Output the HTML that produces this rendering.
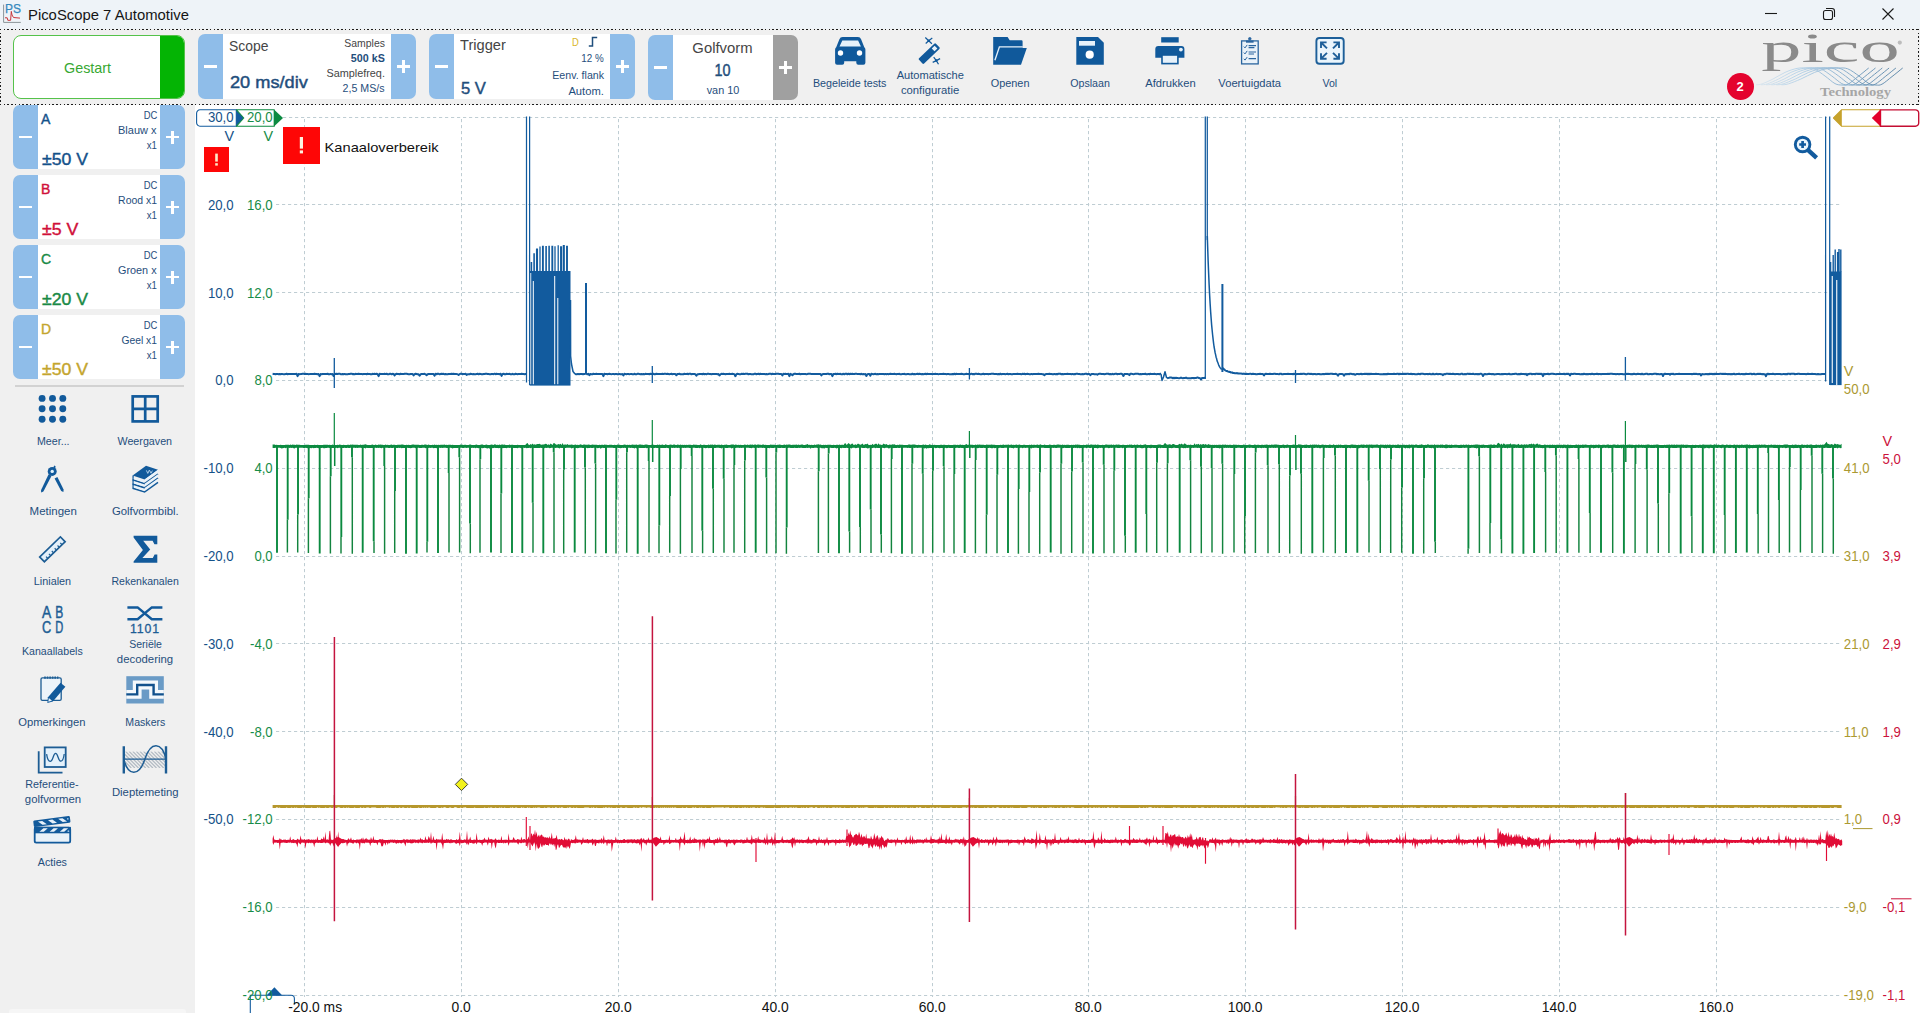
<!DOCTYPE html>
<html lang="nl"><head><meta charset="utf-8"><title>PicoScope 7 Automotive</title>
<style>
html,body{margin:0;padding:0}
body{width:1920px;height:1013px;position:relative;overflow:hidden;background:#fff;font-family:"Liberation Sans",sans-serif}
.t{position:absolute;white-space:nowrap;display:block}
#titlebar{position:absolute;left:0;top:0;width:1920px;height:29px;background:#eef3f8}
#toolbar{position:absolute;left:0;top:0;width:1920px;height:105px}
#tbbg{position:absolute;left:0;top:29px;width:1920px;height:76px;background:#f0f0f0}
#sidebar{position:absolute;left:0;top:105px;width:195px;height:908px;background:#f0f0f0}
.blk{position:absolute;background:#fff}
.pm{position:absolute}
.pm i{position:absolute;background:#fff;display:block}
.dot{position:absolute}
</style></head>
<body>
<div id="tbbg"></div>
<div id="titlebar">
<svg style="position:absolute;left:0;top:0" width="24" height="26" viewBox="0 0 24 26">
<path d="M3.6 4.6 V22.4 H20.8" fill="none" stroke="#8a9499" stroke-width="1"/>
<text x="5.1" y="13.4" font-family="Liberation Sans" font-size="12.6" fill="#3589bd" stroke="#3589bd" stroke-width="0.25" textLength="16" lengthAdjust="spacingAndGlyphs">PS</text>
<path d="M5 17.8 H7.2 L7.8 20.3 H10.6 L11.3 11.4 L12 15 L13.5 17.5 L20 18.1" fill="none" stroke="#c8353a" stroke-width="1" stroke-linejoin="round"/>
</svg>
<span class="t" style="left:27.60px;top:6px;font-size:15px;line-height:18px;color:#151515;transform:scaleX(0.9896);transform-origin:0 50%;">PicoScope 7 Automotive</span>
<svg style="position:absolute;left:1750px;top:0" width="170" height="29" viewBox="0 0 170 29" fill="none" stroke="#1a1a1a" stroke-width="1.1">
<path d="M15 13.5 H27"/>
<rect x="73.5" y="10.5" width="9" height="9" rx="2"/>
<path d="M76 8.5 H82 a2.5 2.5 0 0 1 2.5 2.5 V17"/>
<path d="M132.5 8.5 L143.5 19.5 M143.5 8.5 L132.5 19.5"/>
</svg>
</div>
<div id="toolbar">
<div style="position:absolute;left:12.5px;top:35px;width:172.5px;height:64px;box-sizing:border-box;border:1.5px solid #55c24a;border-radius:8px;background:#fff;overflow:hidden"><div style="position:absolute;left:146px;top:0;width:26px;height:64px;background:#04b404"></div></div>
<span class="t" style="left:63.70px;top:59px;font-size:15px;line-height:18px;color:#37a832;transform:scaleX(0.9577);transform-origin:0 50%;">Gestart</span>
<div class="blk" style="left:223px;top:34px;width:168px;height:65px"></div>
<div class="pm" style="left:198px;top:34px;width:25px;height:65px;background:#8fbde9;border-radius:7px 0 0 7px"><i style="left:6.0px;top:31.25px;width:13px;height:2.5px"></i></div>
<div class="pm" style="left:391px;top:34px;width:25px;height:65px;background:#8fbde9;border-radius:0 7px 7px 0"><i style="left:6.0px;top:31.25px;width:13px;height:2.5px"></i><i style="left:11.25px;top:26.0px;width:2.5px;height:13px"></i></div>
<span class="t" style="left:229.30px;top:37px;font-size:15px;line-height:18px;color:#454545;transform:scaleX(0.9264);transform-origin:0 50%;">Scope</span>
<span class="t" style="left:229.60px;top:73px;font-size:17px;line-height:20px;color:#1f4e7c;transform:scaleX(1.0694);transform-origin:0 50%;-webkit-text-stroke:0.45px #1f4e7c;">20 ms/div</span>
<span class="t" style="left:340.64px;top:36px;font-size:11.3px;line-height:14px;color:#454545;transform:scaleX(0.9235);transform-origin:100% 50%;">Samples</span>
<span class="t" style="left:348.79px;top:51px;font-size:11.3px;line-height:14px;color:#1f4e7c;font-weight:bold;transform:scaleX(0.9493);transform-origin:100% 50%;">500 kS</span>
<span class="t" style="left:323.68px;top:66px;font-size:11.3px;line-height:14px;color:#454545;transform:scaleX(0.9602);transform-origin:100% 50%;">Samplefreq.</span>
<span class="t" style="left:340.01px;top:81px;font-size:11.3px;line-height:14px;color:#1f4e7c;transform:scaleX(0.9420);transform-origin:100% 50%;">2,5 MS/s</span>
<div class="blk" style="left:454px;top:34px;width:156px;height:65px"></div>
<div class="pm" style="left:429px;top:34px;width:25px;height:65px;background:#8fbde9;border-radius:7px 0 0 7px"><i style="left:6.0px;top:31.25px;width:13px;height:2.5px"></i></div>
<div class="pm" style="left:610px;top:34px;width:25px;height:65px;background:#8fbde9;border-radius:0 7px 7px 0"><i style="left:6.0px;top:31.25px;width:13px;height:2.5px"></i><i style="left:11.25px;top:26.0px;width:2.5px;height:13px"></i></div>
<span class="t" style="left:460.10px;top:36px;font-size:15px;line-height:18px;color:#454545;transform:scaleX(0.9775);transform-origin:0 50%;">Trigger</span>
<span class="t" style="left:461.00px;top:79px;font-size:17px;line-height:20px;color:#1f4e7c;transform:scaleX(0.9758);transform-origin:0 50%;-webkit-text-stroke:0.45px #1f4e7c;">5 V</span>
<span class="t" style="left:571.50px;top:35px;font-size:11.3px;line-height:14px;color:#d9b62c;transform:scaleX(0.8333);transform-origin:0 50%;">D</span>
<svg style="position:absolute;left:586px;top:34px" width="14" height="15" viewBox="0 0 14 15"><path d="M2.8 12 H6.5 V3.6 H11.2" fill="none" stroke="#1f4e7c" stroke-width="1.5"/></svg>
<span class="t" style="left:577.54px;top:51px;font-size:11.3px;line-height:14px;color:#1f4e7c;transform:scaleX(0.8697);transform-origin:100% 50%;">12 %</span>
<span class="t" style="left:548.54px;top:68px;font-size:11.3px;line-height:14px;color:#1f4e7c;transform:scaleX(0.9407);transform-origin:100% 50%;">Eenv. flank</span>
<span class="t" style="left:567.60px;top:84px;font-size:11.3px;line-height:14px;color:#1f4e7c;transform:scaleX(0.9889);transform-origin:100% 50%;">Autom.</span>
<div class="blk" style="left:673px;top:35px;width:100px;height:65px"></div>
<div class="pm" style="left:648px;top:35px;width:25px;height:65px;background:#8fbde9;border-radius:7px 0 0 7px"><i style="left:6.0px;top:31.25px;width:13px;height:2.5px"></i></div>
<div class="pm" style="left:773px;top:35px;width:25px;height:65px;background:#a0a0a0;border-radius:0 7px 7px 0"><i style="left:6.0px;top:31.25px;width:13px;height:2.5px"></i><i style="left:11.25px;top:26.0px;width:2.5px;height:13px"></i></div>
<span class="t" style="left:691.73px;top:39px;font-size:15px;line-height:18px;color:#454545;transform:scaleX(0.9878);transform-origin:50% 50%;">Golfvorm</span>
<span class="t" style="left:713.15px;top:61px;font-size:17px;line-height:20px;color:#1f4e7c;transform:scaleX(0.8461);transform-origin:50% 50%;-webkit-text-stroke:0.45px #1f4e7c;">10</span>
<span class="t" style="left:705.64px;top:83px;font-size:11.3px;line-height:14px;color:#1f4e7c;transform:scaleX(0.9609);transform-origin:50% 50%;">van 10</span>
<span class="t" style="left:811.47px;top:76px;font-size:11.3px;line-height:14px;color:#1f4e7c;transform:scaleX(0.9512);transform-origin:50% 50%;">Begeleide tests</span>
<span class="t" style="left:895.62px;top:68px;font-size:11.3px;line-height:14px;color:#1f4e7c;transform:scaleX(0.9816);transform-origin:50% 50%;">Automatische</span>
<span class="t" style="left:900.89px;top:83px;font-size:11.3px;line-height:14px;color:#1f4e7c;">configuratie</span>
<span class="t" style="left:989.89px;top:76px;font-size:11.3px;line-height:14px;color:#1f4e7c;transform:scaleX(0.9649);transform-origin:50% 50%;">Openen</span>
<span class="t" style="left:1068.86px;top:76px;font-size:11.3px;line-height:14px;color:#1f4e7c;transform:scaleX(0.9445);transform-origin:50% 50%;">Opslaan</span>
<span class="t" style="left:1144.76px;top:76px;font-size:11.3px;line-height:14px;color:#1f4e7c;transform:scaleX(0.9906);transform-origin:50% 50%;">Afdrukken</span>
<span class="t" style="left:1218.37px;top:76px;font-size:11.3px;line-height:14px;color:#1f4e7c;transform:scaleX(0.9889);transform-origin:50% 50%;">Voertuigdata</span>
<span class="t" style="left:1322.25px;top:76px;font-size:11.3px;line-height:14px;color:#1f4e7c;transform:scaleX(0.9390);transform-origin:50% 50%;">Vol</span>
<svg style="position:absolute;left:0;top:0" width="1920" height="105" viewBox="0 0 1920 105">
<g fill="#10599b">
<path d="M842.6 37 H857.9 a3.4 3.4 0 0 1 3.2 2.2 L864.3 47.2 a3 3 0 0 1 1.1 2.3 V62.7 a2 2 0 0 1 -2 2 H858.3 a2 2 0 0 1 -2 -2 V61.3 H844.2 V62.7 a2 2 0 0 1 -2 2 H837.1 a2 2 0 0 1 -2 -2 V49.5 a3 3 0 0 1 1.1 -2.3 L839.4 39.2 a3.4 3.4 0 0 1 3.2 -2.2Z"/>
<path d="M842.3 40.4 H858.1 L860.9 46.4 H839.5Z" fill="#e6f1fa"/>
<circle cx="840.5" cy="53" r="2.7" fill="#fff"/><circle cx="859.5" cy="53" r="2.7" fill="#fff"/></g>
<g fill="#10599b"><g transform="translate(929.2 53.6) rotate(-43.5)"><rect x="-11.7" y="-3.7" width="23.4" height="7.4" rx="1.2"/><rect x="5.4" y="-2" width="4" height="4" fill="#e6f1fa"/></g>
<path d="M928.7 40.7 l-3.4 -3.2 M928.7 40.7 l3.6 -2.6 M928.7 40.7 l-3 2.8 M928.7 40.7 l3.2 3" stroke="#10599b" stroke-width="1.2" fill="none"/>
<path d="M936.3 60.6 l-2.6 -3.4 M936.3 60.6 l3.8 -2 M936.3 60.6 l-3.6 1.8 M936.3 60.6 l2.2 3.6" stroke="#10599b" stroke-width="1.2" fill="none"/>
<circle cx="928.7" cy="40.7" r="1.3"/><circle cx="936.3" cy="60.6" r="1.3"/></g>
<path d="M993.2 37 H1007.6 L1009.7 40.3 H1021.5 a1.1 1.1 0 0 1 1.1 1.1 V47.9 H1026.8 L1021 64.7 H993.2Z" fill="#10599b"/>
<path d="M994.9 60.2 L999.4 46.9 H1022.8" fill="none" stroke="#e6f1fa" stroke-width="1.35"/>
<path d="M1076.3 37 H1098 L1103.8 42.8 V64.7 H1076.3Z" fill="#10599b"/>
<rect x="1079" y="41" width="16" height="4.7" fill="#e6f1fa"/><circle cx="1089.7" cy="54.7" r="4.1" fill="#fff"/>
<rect x="1161.2" y="37.2" width="17.5" height="5.3" fill="#10599b"/>
<path d="M1158.3 46 H1181.4 a3 3 0 0 1 3 3 V57.8 H1155.3 V49 a3 3 0 0 1 3 -3Z" fill="#10599b"/>
<rect x="1162" y="55" width="15.9" height="8.6" fill="#e6f1fa" stroke="#10599b" stroke-width="1.6"/>
<circle cx="1180.9" cy="49.6" r="1.9" fill="#e6f1fa"/>
<g fill="none" stroke="#2a659f"><rect x="1241.6" y="40.9" width="16.6" height="23" stroke-width="1.3" fill="#eaf2f9"/>
<path d="M1246 41.6 H1253.6" stroke-width="2.2"/><circle cx="1249.8" cy="38.8" r="1.3" fill="#2a659f" stroke-width="0.8"/>
<path d="M1243.8 46.6 l1.2 1.3 l2.2 -3 M1243.8 52.6 l1.2 1.3 l2.2 -3 M1243.8 58.8 l1.2 1.3 l2.2 -3" stroke-width="1"/>
<path d="M1248.6 45.6 H1256 M1248.6 47.6 H1254.4 M1248.6 52 H1256 M1248.6 54 H1254 M1248.6 58.6 H1256" stroke-width="1.1"/></g>
<g fill="none" stroke="#1d5f99" stroke-width="1.9"><rect x="1316.4" y="38" width="27.3" height="25.7" rx="3" fill="#eaf5fc"/>
<path d="M1326.6 42.4 H1321 V48 M1321.6 43 L1327 48.4"/><path d="M1333.4 42.4 H1339 V48 M1338.4 43 L1333 48.4"/>
<path d="M1326.6 58.8 H1321 V53.2 M1321.6 58.2 L1327 52.8"/><path d="M1333.4 58.8 H1339 V53.2 M1338.4 58.2 L1333 52.8"/></g>
</svg>
<div style="position:absolute;left:1726.5px;top:72.5px;width:27px;height:27px;border-radius:50%;background:#e4032e"></div>
<span class="t" style="left:1736.38px;top:79px;font-size:13px;line-height:16px;color:#fff;font-weight:bold;">2</span>
<svg style="position:absolute;left:1750px;top:30px" width="168" height="74" viewBox="1750 30 168 74">
<defs><linearGradient id="wg" gradientUnits="userSpaceOnUse" x1="1756" x2="1904" y1="0" y2="0"><stop offset="0" stop-color="#c4dbec" stop-opacity="0.5"/><stop offset="0.3" stop-color="#b4d1e7"/><stop offset="0.58" stop-color="#8cb2d0"/><stop offset="0.75" stop-color="#6b96b8"/><stop offset="1" stop-color="#5a84a6"/></linearGradient></defs>
<g fill="none" stroke="url(#wg)" stroke-width="0.95"><path d="M1756.0 84.8 C1757.0 84.7 1759.2 84.9 1762.0 83.9 C1764.8 82.9 1769.2 80.9 1773.0 79.0 C1776.8 77.1 1781.0 74.2 1785.0 72.4 C1789.0 70.6 1793.5 69.1 1797.0 68.4 C1800.5 67.7 1803.2 67.9 1806.0 68.0 C1808.8 68.1 1810.8 67.5 1814.0 68.8 C1817.2 70.1 1821.5 73.5 1825.0 76.0 C1828.5 78.5 1832.2 82.1 1835.0 83.6 C1837.8 85.1 1839.8 84.9 1842.0 85.0 C1844.2 85.1 1845.3 85.6 1848.0 84.2 C1850.7 82.8 1854.5 79.3 1858.0 76.6 C1861.5 73.9 1866.9 69.4 1868.7 68.0"/><path d="M1761.1 84.8 C1762.1 84.7 1764.4 84.9 1767.3 83.9 C1770.2 82.9 1774.6 80.9 1778.6 79.0 C1782.5 77.1 1786.8 74.2 1790.9 72.4 C1795.0 70.6 1799.7 69.1 1803.3 68.4 C1806.9 67.7 1809.6 67.9 1812.5 68.0 C1815.4 68.1 1817.5 67.5 1820.7 68.8 C1824.0 70.1 1828.3 73.5 1831.8 76.0 C1835.3 78.5 1839.0 82.1 1841.8 83.6 C1844.6 85.1 1846.6 84.9 1848.8 85.0 C1851.0 85.1 1852.1 85.6 1854.8 84.2 C1857.5 82.8 1861.3 79.3 1864.8 76.6 C1868.2 73.9 1873.7 69.4 1875.5 68.0"/><path d="M1766.2 84.8 C1767.3 84.7 1769.5 84.9 1772.5 83.9 C1775.5 82.9 1780.1 80.9 1784.2 79.0 C1788.2 77.1 1792.6 74.2 1796.8 72.4 C1801.1 70.6 1805.8 69.1 1809.5 68.4 C1813.2 67.7 1816.0 67.9 1819.0 68.0 C1822.0 68.1 1824.2 67.5 1827.5 68.8 C1830.7 70.1 1835.1 73.5 1838.6 76.0 C1842.1 78.5 1845.8 82.1 1848.6 83.6 C1851.4 85.1 1853.4 84.9 1855.6 85.0 C1857.8 85.1 1858.9 85.6 1861.6 84.2 C1864.3 82.8 1868.1 79.3 1871.6 76.6 C1875.0 73.9 1880.5 69.4 1882.3 68.0"/><path d="M1771.3 84.8 C1772.4 84.7 1774.7 84.9 1777.8 83.9 C1780.9 82.9 1785.6 80.9 1789.7 79.0 C1793.9 77.1 1798.4 74.2 1802.8 72.4 C1807.1 70.6 1812.0 69.1 1815.8 68.4 C1819.6 67.7 1822.5 67.9 1825.5 68.0 C1828.6 68.1 1830.9 67.5 1834.2 68.8 C1837.5 70.1 1841.9 73.5 1845.4 76.0 C1848.9 78.5 1852.6 82.1 1855.4 83.6 C1858.2 85.1 1860.2 84.9 1862.4 85.0 C1864.6 85.1 1865.7 85.6 1868.4 84.2 C1871.1 82.8 1875.0 79.3 1878.4 76.6 C1881.9 73.9 1887.3 69.4 1889.1 68.0"/><path d="M1776.4 84.8 C1777.5 84.7 1779.9 84.9 1783.1 83.9 C1786.2 82.9 1791.1 80.9 1795.3 79.0 C1799.6 77.1 1804.2 74.2 1808.7 72.4 C1813.1 70.6 1818.2 69.1 1822.0 68.4 C1825.9 67.7 1828.9 67.9 1832.1 68.0 C1835.2 68.1 1837.6 67.5 1841.0 68.8 C1844.3 70.1 1848.7 73.5 1852.2 76.0 C1855.7 78.5 1859.4 82.1 1862.2 83.6 C1865.0 85.1 1867.0 84.9 1869.2 85.0 C1871.4 85.1 1872.5 85.6 1875.2 84.2 C1877.9 82.8 1881.8 79.3 1885.2 76.6 C1888.7 73.9 1894.1 69.4 1895.9 68.0"/><path d="M1781.5 84.8 C1782.6 84.7 1785.1 84.9 1788.3 83.9 C1791.6 82.9 1796.5 80.9 1800.9 79.0 C1805.3 77.1 1810.0 74.2 1814.6 72.4 C1819.2 70.6 1824.3 69.1 1828.3 68.4 C1832.3 67.7 1835.3 67.9 1838.6 68.0 C1841.8 68.1 1844.3 67.5 1847.7 68.8 C1851.1 70.1 1855.5 73.5 1859.0 76.0 C1862.5 78.5 1866.2 82.1 1869.0 83.6 C1871.8 85.1 1873.8 84.9 1876.0 85.0 C1878.2 85.1 1879.3 85.6 1882.0 84.2 C1884.7 82.8 1888.5 79.3 1892.0 76.6 C1895.5 73.9 1900.9 69.4 1902.7 68.0"/></g>
<text x="1761.2" y="62.4" font-family="Liberation Serif, serif" font-size="42" fill="#8a8a8a" textLength="138.5" lengthAdjust="spacingAndGlyphs">pıco</text>
<ellipse cx="1812.4" cy="36.5" rx="4.4" ry="2" fill="#8a8a8a"/>
<circle cx="1899.8" cy="42.6" r="2.1" fill="#bcbcbc"/>
<text x="1820" y="96" font-family="Liberation Serif, serif" font-weight="bold" font-size="11.5" fill="#a6a6a6" textLength="71" lengthAdjust="spacingAndGlyphs">Technology</text>
</svg>
</div>
<div id="sidebar"></div>
<div class="blk" style="left:38px;top:105px;width:122px;height:64px"></div>
<div class="pm" style="left:13px;top:105px;width:25px;height:64px;background:#8fbde9;border-radius:7px 0 0 7px"><i style="left:6.0px;top:30.75px;width:13px;height:2.5px"></i></div>
<div class="pm" style="left:160px;top:105px;width:25px;height:64px;background:#8fbde9;border-radius:0 7px 7px 0"><i style="left:6.0px;top:30.75px;width:13px;height:2.5px"></i><i style="left:11.25px;top:25.5px;width:2.5px;height:13px"></i></div>
<span class="t" style="left:40.90px;top:111px;font-size:14px;line-height:17px;color:#14518a;-webkit-text-stroke:0.4px #14518a;">A</span>
<span class="t" style="left:41.60px;top:150px;font-size:17px;line-height:20px;color:#14518a;transform:scaleX(1.0383);transform-origin:0 50%;-webkit-text-stroke:0.4px #14518a;">±50 V</span>
<span class="t" style="left:140.68px;top:108px;font-size:11.3px;line-height:14px;color:#1f4e7c;transform:scaleX(0.8333);transform-origin:100% 50%;">DC</span>
<div style="position:absolute;left:118px;top:123px;width:39.3px;height:15px;overflow:hidden"><span class="t" style="left:0.00px;top:0px;font-size:11.3px;line-height:14px;color:#1f4e7c;transform:scaleX(0.9727);transform-origin:0 50%;">Blauw x1</span></div>
<span class="t" style="left:145.07px;top:138px;font-size:11.3px;line-height:14px;color:#1f4e7c;transform:scaleX(0.8547);transform-origin:100% 50%;">x1</span>
<div class="blk" style="left:38px;top:175px;width:122px;height:64px"></div>
<div class="pm" style="left:13px;top:175px;width:25px;height:64px;background:#8fbde9;border-radius:7px 0 0 7px"><i style="left:6.0px;top:30.75px;width:13px;height:2.5px"></i></div>
<div class="pm" style="left:160px;top:175px;width:25px;height:64px;background:#8fbde9;border-radius:0 7px 7px 0"><i style="left:6.0px;top:30.75px;width:13px;height:2.5px"></i><i style="left:11.25px;top:25.5px;width:2.5px;height:13px"></i></div>
<span class="t" style="left:40.90px;top:181px;font-size:14px;line-height:17px;color:#d0103a;-webkit-text-stroke:0.4px #d0103a;">B</span>
<span class="t" style="left:41.60px;top:220px;font-size:17px;line-height:20px;color:#d0103a;transform:scaleX(1.0446);transform-origin:0 50%;-webkit-text-stroke:0.4px #d0103a;">±5 V</span>
<span class="t" style="left:140.68px;top:178px;font-size:11.3px;line-height:14px;color:#1f4e7c;transform:scaleX(0.8333);transform-origin:100% 50%;">DC</span>
<span class="t" style="left:114.91px;top:193px;font-size:11.3px;line-height:14px;color:#1f4e7c;transform:scaleX(0.9266);transform-origin:100% 50%;">Rood x1</span>
<span class="t" style="left:145.07px;top:208px;font-size:11.3px;line-height:14px;color:#1f4e7c;transform:scaleX(0.8547);transform-origin:100% 50%;">x1</span>
<div class="blk" style="left:38px;top:245px;width:122px;height:64px"></div>
<div class="pm" style="left:13px;top:245px;width:25px;height:64px;background:#8fbde9;border-radius:7px 0 0 7px"><i style="left:6.0px;top:30.75px;width:13px;height:2.5px"></i></div>
<div class="pm" style="left:160px;top:245px;width:25px;height:64px;background:#8fbde9;border-radius:0 7px 7px 0"><i style="left:6.0px;top:30.75px;width:13px;height:2.5px"></i><i style="left:11.25px;top:25.5px;width:2.5px;height:13px"></i></div>
<span class="t" style="left:40.90px;top:251px;font-size:14px;line-height:17px;color:#1a8a46;-webkit-text-stroke:0.4px #1a8a46;">C</span>
<span class="t" style="left:41.60px;top:290px;font-size:17px;line-height:20px;color:#1a8a46;transform:scaleX(1.0383);transform-origin:0 50%;-webkit-text-stroke:0.4px #1a8a46;">±20 V</span>
<span class="t" style="left:140.68px;top:248px;font-size:11.3px;line-height:14px;color:#1f4e7c;transform:scaleX(0.8333);transform-origin:100% 50%;">DC</span>
<div style="position:absolute;left:118px;top:263px;width:39.3px;height:15px;overflow:hidden"><span class="t" style="left:0.00px;top:0px;font-size:11.3px;line-height:14px;color:#1f4e7c;transform:scaleX(0.9596);transform-origin:0 50%;">Groen x1</span></div>
<span class="t" style="left:145.07px;top:278px;font-size:11.3px;line-height:14px;color:#1f4e7c;transform:scaleX(0.8547);transform-origin:100% 50%;">x1</span>
<div class="blk" style="left:38px;top:315px;width:122px;height:64px"></div>
<div class="pm" style="left:13px;top:315px;width:25px;height:64px;background:#8fbde9;border-radius:7px 0 0 7px"><i style="left:6.0px;top:30.75px;width:13px;height:2.5px"></i></div>
<div class="pm" style="left:160px;top:315px;width:25px;height:64px;background:#8fbde9;border-radius:0 7px 7px 0"><i style="left:6.0px;top:30.75px;width:13px;height:2.5px"></i><i style="left:11.25px;top:25.5px;width:2.5px;height:13px"></i></div>
<span class="t" style="left:40.90px;top:321px;font-size:14px;line-height:17px;color:#c4a52e;-webkit-text-stroke:0.4px #c4a52e;">D</span>
<span class="t" style="left:41.60px;top:360px;font-size:17px;line-height:20px;color:#c4a52e;transform:scaleX(1.0383);transform-origin:0 50%;-webkit-text-stroke:0.4px #c4a52e;">±50 V</span>
<span class="t" style="left:140.68px;top:318px;font-size:11.3px;line-height:14px;color:#1f4e7c;transform:scaleX(0.8333);transform-origin:100% 50%;">DC</span>
<span class="t" style="left:117.66px;top:333px;font-size:11.3px;line-height:14px;color:#1f4e7c;transform:scaleX(0.9116);transform-origin:100% 50%;">Geel x1</span>
<span class="t" style="left:145.07px;top:348px;font-size:11.3px;line-height:14px;color:#1f4e7c;transform:scaleX(0.8547);transform-origin:100% 50%;">x1</span>
<div style="position:absolute;left:15px;top:385px;width:169px;height:1.5px;background:#d2d2d2"></div>
<span class="t" style="left:35.63px;top:434px;font-size:11.3px;line-height:14px;color:#1f4e7c;transform:scaleX(0.9438);transform-origin:50% 50%;">Meer...</span>
<span class="t" style="left:116.41px;top:434px;font-size:11.3px;line-height:14px;color:#1f4e7c;transform:scaleX(0.9482);transform-origin:50% 50%;">Weergaven</span>
<span class="t" style="left:29.51px;top:504px;font-size:11.3px;line-height:14px;color:#1f4e7c;transform:scaleX(1.0175);transform-origin:50% 50%;">Metingen</span>
<span class="t" style="left:111.82px;top:504px;font-size:11.3px;line-height:14px;color:#1f4e7c;transform:scaleX(1.0036);transform-origin:50% 50%;">Golfvormbibl.</span>
<span class="t" style="left:32.97px;top:574px;font-size:11.3px;line-height:14px;color:#1f4e7c;transform:scaleX(0.9576);transform-origin:50% 50%;">Linialen</span>
<span class="t" style="left:109.23px;top:574px;font-size:11.3px;line-height:14px;color:#1f4e7c;transform:scaleX(0.9315);transform-origin:50% 50%;">Rekenkanalen</span>
<span class="t" style="left:20.40px;top:644px;font-size:11.3px;line-height:14px;color:#1f4e7c;transform:scaleX(0.9380);transform-origin:50% 50%;">Kanaallabels</span>
<span class="t" style="left:127.51px;top:637px;font-size:11.3px;line-height:14px;color:#1f4e7c;transform:scaleX(0.9325);transform-origin:50% 50%;">Seriële</span>
<span class="t" style="left:116.89px;top:652px;font-size:11.3px;line-height:14px;color:#1f4e7c;transform:scaleX(1.0069);transform-origin:50% 50%;">decodering</span>
<span class="t" style="left:18.38px;top:715px;font-size:11.3px;line-height:14px;color:#1f4e7c;transform:scaleX(0.9936);transform-origin:50% 50%;">Opmerkingen</span>
<span class="t" style="left:123.85px;top:715px;font-size:11.3px;line-height:14px;color:#1f4e7c;transform:scaleX(0.9369);transform-origin:50% 50%;">Maskers</span>
<span class="t" style="left:24.15px;top:777px;font-size:11.3px;line-height:14px;color:#1f4e7c;transform:scaleX(0.9517);transform-origin:50% 50%;">Referentie-</span>
<span class="t" style="left:24.70px;top:792px;font-size:11.3px;line-height:14px;color:#1f4e7c;transform:scaleX(1.0072);transform-origin:50% 50%;">golfvormen</span>
<span class="t" style="left:111.81px;top:785px;font-size:11.3px;line-height:14px;color:#1f4e7c;transform:scaleX(1.0033);transform-origin:50% 50%;">Dieptemeting</span>
<span class="t" style="left:37.26px;top:855px;font-size:11.3px;line-height:14px;color:#1f4e7c;transform:scaleX(0.9457);transform-origin:50% 50%;">Acties</span>
<div style="position:absolute;left:9px;top:1009px;width:177px;height:4px;border-radius:3px 3px 0 0;background:#f6f6f6"></div>
<svg style="position:absolute;left:0;top:385px" width="195" height="480" viewBox="0 385 195 480">
<g fill="#125a9b"><circle cx="42.1" cy="398.4" r="3.45"/><circle cx="52.5" cy="398.4" r="3.45"/><circle cx="62.8" cy="398.4" r="3.45"/><circle cx="42.1" cy="408.8" r="3.45"/><circle cx="52.5" cy="408.8" r="3.45"/><circle cx="62.8" cy="408.8" r="3.45"/><circle cx="42.1" cy="419.2" r="3.45"/><circle cx="52.5" cy="419.2" r="3.45"/><circle cx="62.8" cy="419.2" r="3.45"/></g>
<g fill="none" stroke="#125a9b" stroke-width="2.7"><rect x="132.7" y="396.4" width="25" height="25"/><path d="M145.2 396.4 V421.4 M132.7 408.9 H157.7"/></g>
<g fill="#125a9b"><circle cx="52.2" cy="471.4" r="4.5"/><circle cx="52.2" cy="471.4" r="1.7" fill="#dff1fc"/>
<path d="M53.4 467.6 L54.2 465.6 L55.6 466.2 L55.2 468.6Z"/>
<path d="M48.6 474.2 L51.6 475.8 L43.4 491.6 L41.2 492.4 L41 490.2Z"/>
<path d="M54.6 478.4 L57.4 477 L63.6 489.6 L63.4 492 L61.2 491Z"/></g>
<g><path d="M132.6 475.6 L146 465.8 L158 469.8 L144.6 479.4Z" fill="#125a9b"/>
<path d="M132.6 479.8 L144.6 483.6 L158 474 M132.6 484 L144.6 487.8 L158 478.2 M132.6 488.2 L144.6 492 L158 482.4" fill="none" stroke="#125a9b" stroke-width="1.5"/>
<path d="M133.1 475.6 V488.6" stroke="#125a9b" stroke-width="1.3"/>
<path d="M133.8 477.4 L144 480.6 V482.4 L133.8 479.2Z M133.8 481.6 L144 484.8 V486.6 L133.8 483.4Z M133.8 485.8 L144 489 V490.8 L133.8 487.6Z" fill="#e9f3fb"/>
<path d="M144.6 479.4 L158 469.8 V472.2 L144.6 481.8Z M144.6 483.8 L158 474.2 V476.4 L144.6 486Z M144.6 488 L158 478.4 V480.6 L144.6 490.2Z" fill="#e9f3fb"/>
<path d="M146.4 470.4 l1.4 3 l1.6 -3.4 l1.6 3.2 l1.4 -2.6" fill="none" stroke="#bcd8ee" stroke-width="0.9"/></g>
<g transform="translate(52.4 549.35) rotate(-44)"><rect x="-14.4" y="-3.4" width="28.8" height="6.8" fill="#e4f0fa" stroke="#1d5d94" stroke-width="1.7"/>
<path d="M-9.6 3.4 v-2.6 M-5.6 3.4 v-2.6 M-1.6 3.4 v-2.6 M2.4 3.4 v-2.6 M6.4 3.4 v-2.6 M10.2 3.4 v-2.6" stroke="#1d5d94" stroke-width="1.2"/></g>
<path d="M133.6 535.8 H157.3 V544.2 H154.4 L152.6 540.7 H143.2 L150.2 549.6 L142.4 558 H152.8 L154.6 554.6 H157.3 V562.8 H133.6 V561.5 L142.9 549.9 L133.6 537.4Z" fill="#125a9b"/>
<text x="42" y="617.5" textLength="9.2" font-family="Liberation Sans, sans-serif" font-size="15.6" fill="#1d5d94" stroke="#1d5d94" stroke-width="0.45" lengthAdjust="spacingAndGlyphs">A</text><text x="55.2" y="617.5" textLength="8" font-family="Liberation Sans, sans-serif" font-size="15.6" fill="#1d5d94" stroke="#1d5d94" stroke-width="0.45" lengthAdjust="spacingAndGlyphs">B</text><text x="42" y="632.5" textLength="9.2" font-family="Liberation Sans, sans-serif" font-size="15.6" fill="#1d5d94" stroke="#1d5d94" stroke-width="0.45" lengthAdjust="spacingAndGlyphs">C</text><text x="55.2" y="632.5" textLength="8" font-family="Liberation Sans, sans-serif" font-size="15.6" fill="#1d5d94" stroke="#1d5d94" stroke-width="0.45" lengthAdjust="spacingAndGlyphs">D</text>
<path d="M127.4 607.4 H137.6 L151.8 619.3 H162.4 M127.4 619.3 H137.6 L151.8 607.4 H162.4" fill="none" stroke="#125a9b" stroke-width="2.5"/>
<text x="130" y="632.8" font-family="Liberation Sans, sans-serif" font-size="12.3" fill="#1d5d94" stroke="#1d5d94" stroke-width="0.3" textLength="29.2" lengthAdjust="spacing">1101</text>
<g><rect x="41" y="677.9" width="20.2" height="22.4" rx="1.4" fill="#edf4fa" stroke="#1d5d94" stroke-width="1.3"/>
<path d="M44.2 677.6 H58.4" stroke="#1d5d94" stroke-width="2.2" stroke-dasharray="1.6 0.95"/>
<g transform="translate(47.3 703) rotate(-49.4)"><path d="M0 0 L4.8 -3.2 H24 V3.2 H4.8Z" fill="#125a9b"/><path d="M1.6 0 L4.8 -2.1 V2.1Z" fill="#e6f1fa"/></g></g>
<g><rect x="126.3" y="676.2" width="37.5" height="27.3" fill="#6a9bc6"/>
<path d="M126.3 694.4 H137.2 V685 H153.6 V694.4 H163.8" fill="none" stroke="#f3f8fc" stroke-width="8.8"/>
<path d="M126.3 694.4 H137.2 V685 H153.6 V694.4 H163.8" fill="none" stroke="#10508c" stroke-width="2.4"/></g>
<g fill="none" stroke="#1d5d94"><path d="M38.7 751.3 V772.7 H62.5" stroke-width="1.8"/><rect x="44.7" y="747.4" width="21" height="19.6" fill="#e4f1fb" stroke-width="1.8"/>
<path d="M46.6 754.2 C47.4 759.5 48.6 761.4 50.2 761.4 C53 761.4 53.2 753.4 55.6 753.4 C58 753.4 58.2 761.2 60.8 761.2 C62.6 761.2 63.6 758.6 64.2 754" stroke-width="1.3"/></g>
<g fill="none"><clipPath id="hc"><rect x="125" y="751.4" width="40" height="16.6"/></clipPath>
<path d="M107.5 751.4 l16.6 16.6 M111.1 751.4 l16.6 16.6 M114.7 751.4 l16.6 16.6 M118.3 751.4 l16.6 16.6 M121.9 751.4 l16.6 16.6 M125.5 751.4 l16.6 16.6 M129.1 751.4 l16.6 16.6 M132.7 751.4 l16.6 16.6 M136.3 751.4 l16.6 16.6 M139.9 751.4 l16.6 16.6 M143.5 751.4 l16.6 16.6 M147.1 751.4 l16.6 16.6 M150.7 751.4 l16.6 16.6 M154.3 751.4 l16.6 16.6 M157.9 751.4 l16.6 16.6 M161.5 751.4 l16.6 16.6 M165.1 751.4 l16.6 16.6" stroke="#b4bcc4" stroke-width="1.3" clip-path="url(#hc)"/>
<path d="M123.8 746.2 V773.6 M166 746.2 V773.6" stroke="#1d5d94" stroke-width="2.4"/><path d="M123.8 759.1 H166" stroke="#1d5d94" stroke-width="1.3"/>
<path d="M123.8 759.1 C128 776.5 139 777 144.9 759.1 C150.8 741.2 161.8 741.7 166 759.1" stroke="#1d5d94" stroke-width="1.5"/></g>
<g><g transform="rotate(-7.3 34 827.4)"><rect x="34" y="820.6" width="36.9" height="6.6" rx="1.2" fill="#125a9b"/>
<path d="M38.6 822 l4.4 0 l4.2 3.8 l-4.4 0Z M48.8 822 l4.4 0 l4.2 3.8 l-4.4 0Z M59 822 l4.4 0 l4.2 3.8 l-4.4 0Z" fill="#e6f1fa"/><circle cx="68.6" cy="823.2" r="0.9" fill="#9cc3e4"/></g>
<rect x="34.7" y="827.6" width="35.5" height="15" rx="1.6" fill="#e9f2f9" stroke="#125a9b" stroke-width="1.8"/>
<rect x="34" y="826.9" width="36.9" height="6.4" fill="#125a9b"/>
<path d="M39.4 831.8 l4.4 0 l4 -3.6 l-4.4 0Z M49.6 831.8 l4.4 0 l4 -3.6 l-4.4 0Z M59.8 831.8 l4.4 0 l4 -3.6 l-4.4 0Z" fill="#e6f1fa"/><circle cx="68.4" cy="831.2" r="0.9" fill="#9cc3e4"/></g>
</svg>
<svg id="chart" style="position:absolute;left:0;top:0" width="1920" height="1013" viewBox="0 0 1920 1013">
<defs><clipPath id="cp"><rect x="195" y="116.6" width="1725" height="900"/></clipPath></defs>
<g stroke="#bfcdd3" stroke-width="1" stroke-dasharray="3.2 2.8" fill="none">
<path d="M283 117.50 H1827"/>
<path d="M276 204.50 H1842"/>
<path d="M276 292.50 H1842"/>
<path d="M276 380.50 H1842"/>
<path d="M276 468.50 H1842"/>
<path d="M276 556.50 H1842"/>
<path d="M276 643.50 H1842"/>
<path d="M276 731.50 H1842"/>
<path d="M276 819.50 H1842"/>
<path d="M276 907.50 H1842"/>
<path d="M276 995.50 H1842"/>
<path d="M304.5 119 V997"/>
<path d="M461.5 119 V997"/>
<path d="M618.5 119 V997"/>
<path d="M775.5 119 V997"/>
<path d="M932.5 119 V997"/>
<path d="M1088.5 119 V997"/>
<path d="M1245.5 119 V997"/>
<path d="M1402.5 119 V997"/>
<path d="M1559.5 119 V997"/>
<path d="M1716.5 119 V997"/>
</g>
<g clip-path="url(#cp)">
<path d="M272.6 804.9 L273.6 804.9 L274.6 804.9 L275.6 805 L276.6 805 L277.6 804.9 L278.6 805 L279.6 804.9 L280.6 804.9 L281.6 805.1 L282.6 805 L283.6 804.9 L284.6 805.1 L285.6 805 L286.6 805.1 L287.6 805 L288.6 805.1 L289.6 804.9 L290.6 804.9 L291.6 805.1 L292.6 805.1 L293.6 805 L294.6 805.1 L295.6 805 L296.6 805 L297.6 804.9 L298.6 804.9 L299.6 804.9 L300.6 804.9 L301.6 805.1 L302.6 805 L303.6 805.1 L304.6 805 L305.6 804.9 L306.6 804.9 L307.6 804.9 L308.6 805 L309.6 805.1 L310.6 805.1 L311.6 805.1 L312.6 805 L313.6 805 L314.6 804.9 L315.6 804.9 L316.6 804.9 L317.6 805.1 L318.6 804.9 L319.6 804.9 L320.6 805 L321.6 804.9 L322.6 805.1 L323.6 805.1 L324.6 805 L325.6 805.1 L326.6 804.9 L327.6 805.1 L328.6 804.9 L329.6 805.1 L330.6 805.1 L331.6 805 L332.6 804.9 L333.6 805.1 L334.6 805.1 L335.6 805 L336.6 804.9 L337.6 805.1 L338.6 805 L339.6 805 L340.6 805.1 L341.6 805.1 L342.6 805.1 L343.6 805.1 L344.6 804.9 L345.6 805.1 L346.6 805.1 L347.6 805 L348.6 805.1 L349.6 805.1 L350.6 805.1 L351.6 804.9 L352.6 804.9 L353.6 805.1 L354.6 805 L355.6 805.1 L356.6 805 L357.6 804.9 L358.6 804.9 L359.6 805 L360.6 805 L361.6 805 L362.6 805.1 L363.6 805.1 L364.6 805 L365.6 805.1 L366.6 805 L367.6 805.1 L368.6 805 L369.6 804.9 L370.6 804.9 L371.6 805.1 L372.6 804.9 L373.6 804.9 L374.6 804.9 L375.6 805 L376.6 804.9 L377.6 805 L378.6 805.1 L379.6 805 L380.6 805 L381.6 805.1 L382.6 804.9 L383.6 805.1 L384.6 805 L385.6 804.9 L386.6 805 L387.6 804.9 L388.6 804.9 L389.6 805.1 L390.6 804.9 L391.6 805 L392.6 804.9 L393.6 804.9 L394.6 804.9 L395.6 804.9 L396.6 805 L397.6 804.9 L398.6 805.1 L399.6 805 L400.6 805.1 L401.6 805.1 L402.6 805.1 L403.6 805.1 L404.6 805 L405.6 804.9 L406.6 804.9 L407.6 805.1 L408.6 804.9 L409.6 805 L410.6 804.9 L411.6 805 L412.6 804.9 L413.6 805 L414.6 804.9 L415.6 804.9 L416.6 804.9 L417.6 804.9 L418.6 805.1 L419.6 805.1 L420.6 805.1 L421.6 805 L422.6 805.1 L423.6 805.1 L424.6 805 L425.6 805.1 L426.6 805.1 L427.6 804.9 L428.6 804.9 L429.6 805 L430.6 805 L431.6 805.1 L432.6 805 L433.6 804.9 L434.6 805.1 L435.6 805.1 L436.6 805 L437.6 805 L438.6 804.9 L439.6 804.9 L440.6 804.9 L441.6 805.1 L442.6 805 L443.6 804.9 L444.6 805.1 L445.6 805 L446.6 805 L447.6 805.1 L448.6 804.9 L449.6 804.9 L450.6 805.1 L451.6 805.1 L452.6 804.9 L453.6 804.9 L454.6 804.9 L455.6 805.1 L456.6 805.1 L457.6 804.9 L458.6 805.1 L459.6 805 L460.6 804.9 L461.6 805.1 L462.6 805 L463.6 805.1 L464.6 805 L465.6 805 L466.6 805.1 L467.6 805 L468.6 805.1 L469.6 805 L470.6 805.1 L471.6 804.9 L472.6 804.9 L473.6 805.1 L474.6 805.1 L475.6 804.9 L476.6 805 L477.6 804.9 L478.6 805.1 L479.6 805 L480.6 804.9 L481.6 804.9 L482.6 805.1 L483.6 804.9 L484.6 805.1 L485.6 804.9 L486.6 805.1 L487.6 804.9 L488.6 805.1 L489.6 804.9 L490.6 805 L491.6 805.1 L492.6 805 L493.6 805.1 L494.6 805 L495.6 804.9 L496.6 804.9 L497.6 805 L498.6 805 L499.6 805 L500.6 805.1 L501.6 804.9 L502.6 804.9 L503.6 805.1 L504.6 805.1 L505.6 804.9 L506.6 805.1 L507.6 805.1 L508.6 805.1 L509.6 804.9 L510.6 804.9 L511.6 804.9 L512.6 805 L513.6 805 L514.6 804.9 L515.6 805 L516.6 805.1 L517.6 804.9 L518.6 805.1 L519.6 805 L520.6 804.9 L521.6 805 L522.6 805.1 L523.6 805.1 L524.6 804.9 L525.6 805.1 L526.6 805.1 L527.6 805.1 L528.6 804.9 L529.6 804.9 L530.6 805 L531.6 805 L532.6 804.9 L533.6 805.1 L534.6 805.1 L535.6 805 L536.6 805 L537.6 805 L538.6 805.1 L539.6 805.1 L540.6 804.9 L541.6 804.9 L542.6 804.9 L543.6 805 L544.6 805.1 L545.6 804.9 L546.6 805.1 L547.6 805 L548.6 805.1 L549.6 804.9 L550.6 805 L551.6 804.9 L552.6 804.9 L553.6 804.9 L554.6 805 L555.6 805 L556.6 805 L557.6 805.1 L558.6 804.9 L559.6 805 L560.6 805.1 L561.6 805.1 L562.6 805 L563.6 805 L564.6 804.9 L565.6 804.9 L566.6 805.1 L567.6 804.9 L568.6 804.9 L569.6 805 L570.6 804.9 L571.6 804.9 L572.6 804.9 L573.6 805 L574.6 805 L575.6 804.9 L576.6 805 L577.6 805.1 L578.6 804.9 L579.6 805.1 L580.6 805 L581.6 804.9 L582.6 804.9 L583.6 805.1 L584.6 805.1 L585.6 804.9 L586.6 805.1 L587.6 804.9 L588.6 805 L589.6 804.9 L590.6 805 L591.6 804.9 L592.6 804.9 L593.6 804.9 L594.6 805 L595.6 804.9 L596.6 805 L597.6 805 L598.6 805 L599.6 805.1 L600.6 805 L601.6 805 L602.6 805 L603.6 804.9 L604.6 805 L605.6 805 L606.6 805.1 L607.6 805.1 L608.6 805 L609.6 804.9 L610.6 804.9 L611.6 804.9 L612.6 805.1 L613.6 805.1 L614.6 805 L615.6 804.9 L616.6 805.1 L617.6 805.1 L618.6 805 L619.6 805 L620.6 804.9 L621.6 805 L622.6 805.1 L623.6 805.1 L624.6 805.1 L625.6 804.9 L626.6 805 L627.6 804.9 L628.6 805 L629.6 805.1 L630.6 805 L631.6 805 L632.6 804.9 L633.6 804.9 L634.6 804.9 L635.6 804.9 L636.6 805.1 L637.6 804.9 L638.6 805 L639.6 805 L640.6 804.9 L641.6 805 L642.6 804.9 L643.6 805 L644.6 804.9 L645.6 805 L646.6 804.9 L647.6 805.1 L648.6 804.9 L649.6 805 L650.6 804.9 L651.6 804.9 L652.6 805.1 L653.6 804.9 L654.6 805.1 L655.6 805 L656.6 805.1 L657.6 804.9 L658.6 805.1 L659.6 804.9 L660.6 805 L661.6 805.1 L662.6 805.1 L663.6 805.1 L664.6 804.9 L665.6 805.1 L666.6 804.9 L667.6 804.9 L668.6 805.1 L669.6 805.1 L670.6 805 L671.6 805.1 L672.6 805.1 L673.6 804.9 L674.6 805.1 L675.6 805.1 L676.6 804.9 L677.6 804.9 L678.6 804.9 L679.6 805.1 L680.6 805.1 L681.6 805 L682.6 805 L683.6 805.1 L684.6 805.1 L685.6 804.9 L686.6 805.1 L687.6 805 L688.6 804.9 L689.6 805.1 L690.6 804.9 L691.6 805 L692.6 804.9 L693.6 805.1 L694.6 805 L695.6 804.9 L696.6 804.9 L697.6 805 L698.6 804.9 L699.6 805.1 L700.6 805 L701.6 805.1 L702.6 804.9 L703.6 805 L704.6 805.1 L705.6 804.9 L706.6 804.9 L707.6 804.9 L708.6 804.9 L709.6 805.1 L710.6 804.9 L711.6 805.1 L712.6 804.9 L713.6 804.9 L714.6 805 L715.6 805 L716.6 804.9 L717.6 805.1 L718.6 805 L719.6 804.9 L720.6 805.1 L721.6 805.1 L722.6 804.9 L723.6 805 L724.6 805 L725.6 805 L726.6 805.1 L727.6 805 L728.6 805 L729.6 805 L730.6 805.1 L731.6 805 L732.6 805 L733.6 805 L734.6 804.9 L735.6 805.1 L736.6 805 L737.6 805 L738.6 805 L739.6 804.9 L740.6 805.1 L741.6 805.1 L742.6 804.9 L743.6 805 L744.6 804.9 L745.6 805 L746.6 805 L747.6 804.9 L748.6 805.1 L749.6 804.9 L750.6 804.9 L751.6 804.9 L752.6 805 L753.6 805 L754.6 804.9 L755.6 805.1 L756.6 805 L757.6 805.1 L758.6 804.9 L759.6 805.1 L760.6 805.1 L761.6 805.1 L762.6 805.1 L763.6 805.1 L764.6 805 L765.6 805.1 L766.6 804.9 L767.6 804.9 L768.6 805 L769.6 805.1 L770.6 805 L771.6 805.1 L772.6 805.1 L773.6 805 L774.6 805.1 L775.6 805.1 L776.6 805.1 L777.6 805 L778.6 805 L779.6 805.1 L780.6 805 L781.6 804.9 L782.6 805 L783.6 805.1 L784.6 804.9 L785.6 805 L786.6 804.9 L787.6 805 L788.6 804.9 L789.6 805 L790.6 805.1 L791.6 805 L792.6 805.1 L793.6 805 L794.6 804.9 L795.6 805.1 L796.6 805.1 L797.6 804.9 L798.6 804.9 L799.6 805.1 L800.6 804.9 L801.6 805 L802.6 804.9 L803.6 805.1 L804.6 805 L805.6 804.9 L806.6 804.9 L807.6 805.1 L808.6 804.9 L809.6 804.9 L810.6 804.9 L811.6 805.1 L812.6 805 L813.6 805.1 L814.6 805.1 L815.6 805 L816.6 804.9 L817.6 805.1 L818.6 805 L819.6 805.1 L820.6 805 L821.6 805 L822.6 805.1 L823.6 804.9 L824.6 805.1 L825.6 805 L826.6 805 L827.6 805.1 L828.6 805 L829.6 804.9 L830.6 805 L831.6 805.1 L832.6 805.1 L833.6 804.9 L834.6 805.1 L835.6 804.9 L836.6 804.9 L837.6 804.9 L838.6 805 L839.6 805.1 L840.6 804.9 L841.6 804.9 L842.6 805.1 L843.6 805 L844.6 804.9 L845.6 805 L846.6 804.9 L847.6 805 L848.6 805.1 L849.6 805 L850.6 804.9 L851.6 805 L852.6 805.1 L853.6 805.1 L854.6 804.9 L855.6 804.9 L856.6 805 L857.6 805.1 L858.6 805 L859.6 805.1 L860.6 805 L861.6 805 L862.6 805.1 L863.6 804.9 L864.6 805.1 L865.6 804.9 L866.6 805 L867.6 804.9 L868.6 805.1 L869.6 805.1 L870.6 804.9 L871.6 804.9 L872.6 805.1 L873.6 804.9 L874.6 804.9 L875.6 805.1 L876.6 804.9 L877.6 805 L878.6 805.1 L879.6 804.9 L880.6 805.1 L881.6 805.1 L882.6 804.9 L883.6 805 L884.6 804.9 L885.6 805.1 L886.6 805.1 L887.6 804.9 L888.6 805 L889.6 805.1 L890.6 805.1 L891.6 804.9 L892.6 805.1 L893.6 804.9 L894.6 804.9 L895.6 804.9 L896.6 804.9 L897.6 804.9 L898.6 805 L899.6 804.9 L900.6 805.1 L901.6 804.9 L902.6 805.1 L903.6 805 L904.6 805 L905.6 805 L906.6 804.9 L907.6 804.9 L908.6 804.9 L909.6 805 L910.6 805.1 L911.6 805.1 L912.6 804.9 L913.6 805 L914.6 805 L915.6 804.9 L916.6 804.9 L917.6 804.9 L918.6 804.9 L919.6 805 L920.6 805.1 L921.6 804.9 L922.6 804.9 L923.6 804.9 L924.6 804.9 L925.6 804.9 L926.6 805 L927.6 805 L928.6 805.1 L929.6 805 L930.6 805.1 L931.6 805.1 L932.6 805.1 L933.6 805 L934.6 805 L935.6 805 L936.6 805.1 L937.6 805 L938.6 805.1 L939.6 804.9 L940.6 805 L941.6 804.9 L942.6 805.1 L943.6 805 L944.6 805.1 L945.6 805 L946.6 804.9 L947.6 805 L948.6 804.9 L949.6 805 L950.6 804.9 L951.6 805 L952.6 804.9 L953.6 805 L954.6 804.9 L955.6 804.9 L956.6 804.9 L957.6 805.1 L958.6 805.1 L959.6 805 L960.6 804.9 L961.6 805.1 L962.6 805 L963.6 805.1 L964.6 805.1 L965.6 805 L966.6 805.1 L967.6 804.9 L968.6 805 L969.6 805 L970.6 805 L971.6 805 L972.6 805 L973.6 804.9 L974.6 805 L975.6 804.9 L976.6 805 L977.6 804.9 L978.6 805.1 L979.6 805.1 L980.6 805 L981.6 805.1 L982.6 805 L983.6 805 L984.6 805 L985.6 805 L986.6 805 L987.6 805.1 L988.6 805 L989.6 805 L990.6 804.9 L991.6 805.1 L992.6 805.1 L993.6 805.1 L994.6 804.9 L995.6 805 L996.6 805 L997.6 805.1 L998.6 805 L999.6 805.1 L1000.6 805.1 L1001.6 804.9 L1002.6 804.9 L1003.6 805.1 L1004.6 804.9 L1005.6 804.9 L1006.6 805 L1007.6 805.1 L1008.6 805.1 L1009.6 805 L1010.6 804.9 L1011.6 805 L1012.6 804.9 L1013.6 805.1 L1014.6 804.9 L1015.6 805.1 L1016.6 805.1 L1017.6 805.1 L1018.6 804.9 L1019.6 804.9 L1020.6 805 L1021.6 804.9 L1022.6 805.1 L1023.6 804.9 L1024.6 805 L1025.6 805.1 L1026.6 804.9 L1027.6 804.9 L1028.6 804.9 L1029.6 804.9 L1030.6 805 L1031.6 804.9 L1032.6 805 L1033.6 805.1 L1034.6 805 L1035.6 804.9 L1036.6 805 L1037.6 804.9 L1038.6 805 L1039.6 805.1 L1040.6 805 L1041.6 804.9 L1042.6 804.9 L1043.6 805 L1044.6 804.9 L1045.6 804.9 L1046.6 804.9 L1047.6 805.1 L1048.6 804.9 L1049.6 805.1 L1050.6 805 L1051.6 804.9 L1052.6 805 L1053.6 805.1 L1054.6 804.9 L1055.6 804.9 L1056.6 804.9 L1057.6 804.9 L1058.6 805.1 L1059.6 805.1 L1060.6 805.1 L1061.6 804.9 L1062.6 804.9 L1063.6 805.1 L1064.6 805.1 L1065.6 805 L1066.6 804.9 L1067.6 805 L1068.6 805.1 L1069.6 805 L1070.6 805 L1071.6 804.9 L1072.6 805.1 L1073.6 805 L1074.6 805 L1075.6 805 L1076.6 804.9 L1077.6 805.1 L1078.6 805 L1079.6 805 L1080.6 804.9 L1081.6 805.1 L1082.6 804.9 L1083.6 805 L1084.6 804.9 L1085.6 804.9 L1086.6 804.9 L1087.6 804.9 L1088.6 805 L1089.6 804.9 L1090.6 804.9 L1091.6 805 L1092.6 805 L1093.6 804.9 L1094.6 805 L1095.6 804.9 L1096.6 804.9 L1097.6 804.9 L1098.6 805.1 L1099.6 805.1 L1100.6 804.9 L1101.6 804.9 L1102.6 805 L1103.6 804.9 L1104.6 805.1 L1105.6 805.1 L1106.6 804.9 L1107.6 804.9 L1108.6 805 L1109.6 804.9 L1110.6 805.1 L1111.6 805.1 L1112.6 804.9 L1113.6 805 L1114.6 805 L1115.6 804.9 L1116.6 805 L1117.6 804.9 L1118.6 805.1 L1119.6 805.1 L1120.6 805.1 L1121.6 805 L1122.6 805.1 L1123.6 804.9 L1124.6 804.9 L1125.6 805 L1126.6 805 L1127.6 805 L1128.6 804.9 L1129.6 805 L1130.6 804.9 L1131.6 804.9 L1132.6 804.9 L1133.6 805 L1134.6 805 L1135.6 805.1 L1136.6 805.1 L1137.6 805.1 L1138.6 805 L1139.6 805 L1140.6 805.1 L1141.6 805 L1142.6 804.9 L1143.6 805 L1144.6 805.1 L1145.6 805.1 L1146.6 805 L1147.6 805.1 L1148.6 805.1 L1149.6 804.9 L1150.6 805 L1151.6 805.1 L1152.6 804.9 L1153.6 805 L1154.6 804.9 L1155.6 805 L1156.6 805 L1157.6 805 L1158.6 805.1 L1159.6 804.9 L1160.6 805.1 L1161.6 805.1 L1162.6 805 L1163.6 805 L1164.6 804.9 L1165.6 805.1 L1166.6 804.9 L1167.6 805 L1168.6 804.9 L1169.6 804.9 L1170.6 804.9 L1171.6 804.9 L1172.6 804.9 L1173.6 805.1 L1174.6 805 L1175.6 805.1 L1176.6 805 L1177.6 805.1 L1178.6 804.9 L1179.6 805 L1180.6 805 L1181.6 805 L1182.6 805 L1183.6 804.9 L1184.6 804.9 L1185.6 805 L1186.6 804.9 L1187.6 804.9 L1188.6 805.1 L1189.6 805 L1190.6 805 L1191.6 805.1 L1192.6 804.9 L1193.6 804.9 L1194.6 804.9 L1195.6 804.9 L1196.6 805 L1197.6 804.9 L1198.6 805 L1199.6 805.1 L1200.6 804.9 L1201.6 805 L1202.6 804.9 L1203.6 805 L1204.6 804.9 L1205.6 805 L1206.6 805 L1207.6 804.9 L1208.6 805.1 L1209.6 805.1 L1210.6 804.9 L1211.6 804.9 L1212.6 805 L1213.6 805 L1214.6 805.1 L1215.6 805.1 L1216.6 805.1 L1217.6 804.9 L1218.6 804.9 L1219.6 805 L1220.6 805.1 L1221.6 804.9 L1222.6 804.9 L1223.6 804.9 L1224.6 804.9 L1225.6 805.1 L1226.6 805.1 L1227.6 805 L1228.6 805.1 L1229.6 805.1 L1230.6 804.9 L1231.6 805.1 L1232.6 805 L1233.6 805 L1234.6 804.9 L1235.6 804.9 L1236.6 804.9 L1237.6 805 L1238.6 805.1 L1239.6 805.1 L1240.6 805 L1241.6 805.1 L1242.6 805 L1243.6 805.1 L1244.6 805.1 L1245.6 805.1 L1246.6 804.9 L1247.6 805.1 L1248.6 804.9 L1249.6 804.9 L1250.6 805.1 L1251.6 804.9 L1252.6 805.1 L1253.6 804.9 L1254.6 804.9 L1255.6 805.1 L1256.6 804.9 L1257.6 805.1 L1258.6 805 L1259.6 805 L1260.6 804.9 L1261.6 805.1 L1262.6 804.9 L1263.6 805 L1264.6 805 L1265.6 805 L1266.6 805.1 L1267.6 805.1 L1268.6 805 L1269.6 805 L1270.6 805.1 L1271.6 805.1 L1272.6 805 L1273.6 804.9 L1274.6 805.1 L1275.6 804.9 L1276.6 804.9 L1277.6 805.1 L1278.6 805 L1279.6 805 L1280.6 805.1 L1281.6 805 L1282.6 805 L1283.6 805 L1284.6 805 L1285.6 805 L1286.6 805.1 L1287.6 805 L1288.6 804.9 L1289.6 805 L1290.6 805.1 L1291.6 805.1 L1292.6 804.9 L1293.6 805 L1294.6 805 L1295.6 805.1 L1296.6 805 L1297.6 804.9 L1298.6 805 L1299.6 805 L1300.6 804.9 L1301.6 804.9 L1302.6 804.9 L1303.6 804.9 L1304.6 804.9 L1305.6 805 L1306.6 805 L1307.6 804.9 L1308.6 805.1 L1309.6 805 L1310.6 805.1 L1311.6 805 L1312.6 805.1 L1313.6 805 L1314.6 804.9 L1315.6 805 L1316.6 805 L1317.6 805 L1318.6 805.1 L1319.6 804.9 L1320.6 805.1 L1321.6 804.9 L1322.6 804.9 L1323.6 805 L1324.6 805.1 L1325.6 805.1 L1326.6 805.1 L1327.6 804.9 L1328.6 804.9 L1329.6 804.9 L1330.6 805.1 L1331.6 805 L1332.6 805.1 L1333.6 804.9 L1334.6 805 L1335.6 805 L1336.6 805.1 L1337.6 805 L1338.6 805 L1339.6 804.9 L1340.6 804.9 L1341.6 805 L1342.6 805 L1343.6 805 L1344.6 805.1 L1345.6 804.9 L1346.6 805.1 L1347.6 805.1 L1348.6 805.1 L1349.6 804.9 L1350.6 805.1 L1351.6 805 L1352.6 805.1 L1353.6 805.1 L1354.6 804.9 L1355.6 804.9 L1356.6 805.1 L1357.6 804.9 L1358.6 805 L1359.6 805 L1360.6 804.9 L1361.6 805 L1362.6 805.1 L1363.6 805.1 L1364.6 804.9 L1365.6 805 L1366.6 805 L1367.6 805 L1368.6 804.9 L1369.6 804.9 L1370.6 805 L1371.6 805.1 L1372.6 804.9 L1373.6 805.1 L1374.6 804.9 L1375.6 804.9 L1376.6 805 L1377.6 805 L1378.6 804.9 L1379.6 805 L1380.6 804.9 L1381.6 805.1 L1382.6 804.9 L1383.6 804.9 L1384.6 804.9 L1385.6 805 L1386.6 804.9 L1387.6 804.9 L1388.6 805 L1389.6 805.1 L1390.6 805 L1391.6 805.1 L1392.6 804.9 L1393.6 804.9 L1394.6 805 L1395.6 805.1 L1396.6 804.9 L1397.6 804.9 L1398.6 805.1 L1399.6 805 L1400.6 805.1 L1401.6 804.9 L1402.6 805.1 L1403.6 804.9 L1404.6 804.9 L1405.6 805.1 L1406.6 805.1 L1407.6 805 L1408.6 805.1 L1409.6 805.1 L1410.6 805.1 L1411.6 804.9 L1412.6 805.1 L1413.6 805.1 L1414.6 805.1 L1415.6 804.9 L1416.6 805.1 L1417.6 805.1 L1418.6 804.9 L1419.6 804.9 L1420.6 805.1 L1421.6 805.1 L1422.6 805.1 L1423.6 804.9 L1424.6 805 L1425.6 805.1 L1426.6 804.9 L1427.6 805 L1428.6 805 L1429.6 805.1 L1430.6 804.9 L1431.6 805 L1432.6 804.9 L1433.6 805.1 L1434.6 805.1 L1435.6 805.1 L1436.6 805 L1437.6 805 L1438.6 805.1 L1439.6 804.9 L1440.6 805 L1441.6 805 L1442.6 805.1 L1443.6 805.1 L1444.6 804.9 L1445.6 805.1 L1446.6 805 L1447.6 805.1 L1448.6 805 L1449.6 805.1 L1450.6 805 L1451.6 805.1 L1452.6 804.9 L1453.6 805.1 L1454.6 805 L1455.6 805.1 L1456.6 805.1 L1457.6 805 L1458.6 805.1 L1459.6 805.1 L1460.6 804.9 L1461.6 805.1 L1462.6 804.9 L1463.6 804.9 L1464.6 804.9 L1465.6 805 L1466.6 804.9 L1467.6 804.9 L1468.6 804.9 L1469.6 805 L1470.6 804.9 L1471.6 805.1 L1472.6 804.9 L1473.6 805 L1474.6 805.1 L1475.6 805.1 L1476.6 805 L1477.6 804.9 L1478.6 805 L1479.6 804.9 L1480.6 805.1 L1481.6 805.1 L1482.6 805 L1483.6 805.1 L1484.6 805.1 L1485.6 805 L1486.6 804.9 L1487.6 805 L1488.6 804.9 L1489.6 805 L1490.6 805.1 L1491.6 805 L1492.6 805.1 L1493.6 805.1 L1494.6 805.1 L1495.6 805.1 L1496.6 804.9 L1497.6 805 L1498.6 805 L1499.6 804.9 L1500.6 805.1 L1501.6 805 L1502.6 805.1 L1503.6 805 L1504.6 804.9 L1505.6 805.1 L1506.6 804.9 L1507.6 805 L1508.6 804.9 L1509.6 805.1 L1510.6 804.9 L1511.6 805 L1512.6 805 L1513.6 805 L1514.6 804.9 L1515.6 805.1 L1516.6 805.1 L1517.6 804.9 L1518.6 805.1 L1519.6 804.9 L1520.6 804.9 L1521.6 805 L1522.6 804.9 L1523.6 805.1 L1524.6 805.1 L1525.6 805.1 L1526.6 804.9 L1527.6 805 L1528.6 804.9 L1529.6 804.9 L1530.6 805 L1531.6 805 L1532.6 804.9 L1533.6 805.1 L1534.6 805 L1535.6 804.9 L1536.6 804.9 L1537.6 805.1 L1538.6 805.1 L1539.6 805 L1540.6 804.9 L1541.6 805 L1542.6 805.1 L1543.6 804.9 L1544.6 804.9 L1545.6 805.1 L1546.6 804.9 L1547.6 805 L1548.6 804.9 L1549.6 805 L1550.6 805 L1551.6 804.9 L1552.6 805.1 L1553.6 805 L1554.6 804.9 L1555.6 804.9 L1556.6 804.9 L1557.6 805.1 L1558.6 804.9 L1559.6 805.1 L1560.6 804.9 L1561.6 805.1 L1562.6 805.1 L1563.6 804.9 L1564.6 805.1 L1565.6 805.1 L1566.6 804.9 L1567.6 805.1 L1568.6 805 L1569.6 805 L1570.6 804.9 L1571.6 804.9 L1572.6 805.1 L1573.6 805.1 L1574.6 805 L1575.6 804.9 L1576.6 805 L1577.6 805.1 L1578.6 805 L1579.6 804.9 L1580.6 805.1 L1581.6 804.9 L1582.6 805 L1583.6 805 L1584.6 805.1 L1585.6 805.1 L1586.6 805.1 L1587.6 805.1 L1588.6 805 L1589.6 804.9 L1590.6 804.9 L1591.6 805 L1592.6 805.1 L1593.6 804.9 L1594.6 804.9 L1595.6 805.1 L1596.6 805.1 L1597.6 805 L1598.6 804.9 L1599.6 805 L1600.6 805 L1601.6 805.1 L1602.6 805.1 L1603.6 804.9 L1604.6 804.9 L1605.6 805.1 L1606.6 805.1 L1607.6 805.1 L1608.6 804.9 L1609.6 804.9 L1610.6 805 L1611.6 805.1 L1612.6 804.9 L1613.6 804.9 L1614.6 805.1 L1615.6 805.1 L1616.6 804.9 L1617.6 805 L1618.6 805.1 L1619.6 804.9 L1620.6 805.1 L1621.6 804.9 L1622.6 805.1 L1623.6 805 L1624.6 804.9 L1625.6 805 L1626.6 804.9 L1627.6 805.1 L1628.6 805 L1629.6 805.1 L1630.6 805 L1631.6 805.1 L1632.6 805.1 L1633.6 804.9 L1634.6 805 L1635.6 804.9 L1636.6 804.9 L1637.6 804.9 L1638.6 804.9 L1639.6 804.9 L1640.6 804.9 L1641.6 805 L1642.6 804.9 L1643.6 805 L1644.6 805.1 L1645.6 805 L1646.6 805.1 L1647.6 804.9 L1648.6 805.1 L1649.6 804.9 L1650.6 805 L1651.6 805 L1652.6 805 L1653.6 805 L1654.6 804.9 L1655.6 805 L1656.6 805.1 L1657.6 805 L1658.6 804.9 L1659.6 804.9 L1660.6 805 L1661.6 805.1 L1662.6 805 L1663.6 805.1 L1664.6 805 L1665.6 805.1 L1666.6 805.1 L1667.6 805 L1668.6 804.9 L1669.6 805.1 L1670.6 804.9 L1671.6 805 L1672.6 805 L1673.6 804.9 L1674.6 804.9 L1675.6 805 L1676.6 804.9 L1677.6 805 L1678.6 805 L1679.6 804.9 L1680.6 804.9 L1681.6 804.9 L1682.6 805.1 L1683.6 805 L1684.6 805 L1685.6 804.9 L1686.6 805.1 L1687.6 804.9 L1688.6 805 L1689.6 804.9 L1690.6 805 L1691.6 805.1 L1692.6 805.1 L1693.6 805 L1694.6 805 L1695.6 805.1 L1696.6 805.1 L1697.6 805.1 L1698.6 805.1 L1699.6 805.1 L1700.6 804.9 L1701.6 804.9 L1702.6 804.9 L1703.6 805 L1704.6 805 L1705.6 804.9 L1706.6 805 L1707.6 805.1 L1708.6 805.1 L1709.6 805.1 L1710.6 805.1 L1711.6 805.1 L1712.6 804.9 L1713.6 804.9 L1714.6 804.9 L1715.6 804.9 L1716.6 805.1 L1717.6 805.1 L1718.6 805 L1719.6 805 L1720.6 804.9 L1721.6 804.9 L1722.6 804.9 L1723.6 805 L1724.6 805.1 L1725.6 804.9 L1726.6 805.1 L1727.6 805.1 L1728.6 804.9 L1729.6 805.1 L1730.6 805 L1731.6 804.9 L1732.6 805 L1733.6 805 L1734.6 804.9 L1735.6 804.9 L1736.6 805 L1737.6 804.9 L1738.6 804.9 L1739.6 805.1 L1740.6 805.1 L1741.6 805.1 L1742.6 804.9 L1743.6 804.9 L1744.6 805 L1745.6 805 L1746.6 805.1 L1747.6 804.9 L1748.6 805 L1749.6 804.9 L1750.6 805.1 L1751.6 805 L1752.6 805 L1753.6 805 L1754.6 805.1 L1755.6 805 L1756.6 804.9 L1757.6 805 L1758.6 804.9 L1759.6 804.9 L1760.6 804.9 L1761.6 805 L1762.6 804.9 L1763.6 805 L1764.6 805.1 L1765.6 805.1 L1766.6 805 L1767.6 804.9 L1768.6 805.1 L1769.6 805.1 L1770.6 805 L1771.6 805 L1772.6 805.1 L1773.6 805.1 L1774.6 805 L1775.6 805 L1776.6 805 L1777.6 804.9 L1778.6 804.9 L1779.6 805 L1780.6 804.9 L1781.6 805 L1782.6 804.9 L1783.6 805.1 L1784.6 805.1 L1785.6 805 L1786.6 805 L1787.6 805 L1788.6 805.1 L1789.6 805.1 L1790.6 804.9 L1791.6 805 L1792.6 805.1 L1793.6 805 L1794.6 804.9 L1795.6 804.9 L1796.6 805.1 L1797.6 805 L1798.6 804.9 L1799.6 805 L1800.6 804.9 L1801.6 804.9 L1802.6 805 L1803.6 805.1 L1804.6 805 L1805.6 805.1 L1806.6 804.9 L1807.6 805.1 L1808.6 805 L1809.6 805 L1810.6 805.1 L1811.6 805.1 L1812.6 805.1 L1813.6 804.9 L1814.6 804.9 L1815.6 805.1 L1816.6 805.1 L1817.6 804.9 L1818.6 805.1 L1819.6 805.1 L1820.6 805 L1821.6 805.1 L1822.6 805 L1823.6 805.1 L1824.6 804.9 L1825.6 805 L1826.6 804.9 L1827.6 805.1 L1828.6 805 L1829.6 805.1 L1830.6 805.1 L1831.6 805.1 L1832.6 805.1 L1833.6 805 L1834.6 805.1 L1835.6 805 L1836.6 805 L1837.6 804.9 L1838.6 805 L1839.6 804.9 L1840.6 804.9 L1841.6 805 L1841.6 808.1 L1840.6 807.9 L1839.6 807.9 L1838.6 807.9 L1837.6 808 L1836.6 807.4 L1835.6 807.6 L1834.6 807.3 L1833.6 807.9 L1832.6 808.1 L1831.6 808.1 L1830.6 807.5 L1829.6 808 L1828.6 808 L1827.6 807.9 L1826.6 808.1 L1825.6 807.9 L1824.6 808 L1823.6 808 L1822.6 808 L1821.6 808.1 L1820.6 807.6 L1819.6 807.9 L1818.6 807.4 L1817.6 807.5 L1816.6 808.1 L1815.6 808.1 L1814.6 808 L1813.6 808.1 L1812.6 807.4 L1811.6 808 L1810.6 808.1 L1809.6 808.1 L1808.6 807.5 L1807.6 807.9 L1806.6 808 L1805.6 808.1 L1804.6 808.1 L1803.6 807.4 L1802.6 808 L1801.6 808.1 L1800.6 807.5 L1799.6 807.5 L1798.6 807.6 L1797.6 807.6 L1796.6 808 L1795.6 807.9 L1794.6 808.1 L1793.6 807.9 L1792.6 807.4 L1791.6 808.1 L1790.6 807.5 L1789.6 807.5 L1788.6 808.1 L1787.6 807.6 L1786.6 808.1 L1785.6 807.3 L1784.6 808 L1783.6 807.5 L1782.6 807.5 L1781.6 807.5 L1780.6 807.4 L1779.6 807.9 L1778.6 808 L1777.6 807.5 L1776.6 807.6 L1775.6 808.1 L1774.6 807.6 L1773.6 807.9 L1772.6 807.9 L1771.6 807.3 L1770.6 807.9 L1769.6 808.1 L1768.6 807.9 L1767.6 808.1 L1766.6 807.5 L1765.6 807.6 L1764.6 807.9 L1763.6 807.9 L1762.6 807.4 L1761.6 807.4 L1760.6 807.9 L1759.6 807.3 L1758.6 807.3 L1757.6 808 L1756.6 807.5 L1755.6 807.4 L1754.6 807.3 L1753.6 807.9 L1752.6 808 L1751.6 807.6 L1750.6 807.4 L1749.6 808 L1748.6 808.1 L1747.6 808 L1746.6 808.1 L1745.6 808 L1744.6 807.9 L1743.6 807.6 L1742.6 808 L1741.6 808 L1740.6 807.9 L1739.6 807.6 L1738.6 808.1 L1737.6 807.4 L1736.6 807.4 L1735.6 807.5 L1734.6 807.4 L1733.6 808.1 L1732.6 807.9 L1731.6 807.9 L1730.6 807.9 L1729.6 807.9 L1728.6 807.5 L1727.6 808 L1726.6 808.1 L1725.6 807.4 L1724.6 807.9 L1723.6 807.9 L1722.6 807.5 L1721.6 807.5 L1720.6 807.9 L1719.6 807.9 L1718.6 807.9 L1717.6 807.3 L1716.6 807.9 L1715.6 808.1 L1714.6 807.3 L1713.6 807.9 L1712.6 808.1 L1711.6 807.9 L1710.6 807.6 L1709.6 807.9 L1708.6 807.4 L1707.6 807.5 L1706.6 807.5 L1705.6 807.3 L1704.6 808 L1703.6 808.1 L1702.6 808.1 L1701.6 808 L1700.6 807.9 L1699.6 807.9 L1698.6 808 L1697.6 807.4 L1696.6 808 L1695.6 808 L1694.6 808.1 L1693.6 807.5 L1692.6 807.3 L1691.6 807.4 L1690.6 807.3 L1689.6 808 L1688.6 808.1 L1687.6 808.1 L1686.6 807.6 L1685.6 807.5 L1684.6 807.9 L1683.6 807.5 L1682.6 807.4 L1681.6 807.9 L1680.6 807.3 L1679.6 807.4 L1678.6 807.6 L1677.6 808.1 L1676.6 808 L1675.6 807.3 L1674.6 808 L1673.6 808.1 L1672.6 807.3 L1671.6 808 L1670.6 807.3 L1669.6 808 L1668.6 808 L1667.6 808.1 L1666.6 808.1 L1665.6 807.4 L1664.6 807.4 L1663.6 808 L1662.6 807.3 L1661.6 808.1 L1660.6 807.9 L1659.6 807.9 L1658.6 808.1 L1657.6 807.4 L1656.6 807.6 L1655.6 808.1 L1654.6 808 L1653.6 807.5 L1652.6 807.9 L1651.6 807.9 L1650.6 808.1 L1649.6 808 L1648.6 808 L1647.6 807.4 L1646.6 807.9 L1645.6 807.9 L1644.6 808.1 L1643.6 807.6 L1642.6 808.1 L1641.6 807.5 L1640.6 808 L1639.6 808 L1638.6 808 L1637.6 808.1 L1636.6 808 L1635.6 807.6 L1634.6 808.1 L1633.6 808 L1632.6 807.9 L1631.6 808 L1630.6 807.9 L1629.6 808 L1628.6 807.3 L1627.6 808.1 L1626.6 807.9 L1625.6 807.5 L1624.6 808.1 L1623.6 807.4 L1622.6 808 L1621.6 807.9 L1620.6 807.5 L1619.6 807.4 L1618.6 808.1 L1617.6 807.3 L1616.6 808.1 L1615.6 807.9 L1614.6 807.4 L1613.6 808 L1612.6 808 L1611.6 807.9 L1610.6 807.5 L1609.6 807.5 L1608.6 807.4 L1607.6 807.9 L1606.6 807.5 L1605.6 808 L1604.6 808.1 L1603.6 808.1 L1602.6 807.3 L1601.6 808.1 L1600.6 807.5 L1599.6 807.3 L1598.6 807.4 L1597.6 808.1 L1596.6 807.5 L1595.6 808.1 L1594.6 808.1 L1593.6 808 L1592.6 807.5 L1591.6 807.5 L1590.6 808.1 L1589.6 807.9 L1588.6 807.4 L1587.6 808.1 L1586.6 807.4 L1585.6 807.3 L1584.6 807.6 L1583.6 807.6 L1582.6 808 L1581.6 807.5 L1580.6 807.9 L1579.6 807.6 L1578.6 808.1 L1577.6 807.3 L1576.6 808.1 L1575.6 807.5 L1574.6 808 L1573.6 807.9 L1572.6 808.1 L1571.6 807.9 L1570.6 808 L1569.6 808.1 L1568.6 807.5 L1567.6 808.1 L1566.6 807.6 L1565.6 808 L1564.6 807.4 L1563.6 807.3 L1562.6 807.9 L1561.6 807.5 L1560.6 807.4 L1559.6 807.9 L1558.6 808.1 L1557.6 807.5 L1556.6 808.1 L1555.6 808.1 L1554.6 807.5 L1553.6 807.4 L1552.6 807.4 L1551.6 808 L1550.6 808.1 L1549.6 807.5 L1548.6 808 L1547.6 808 L1546.6 808.1 L1545.6 808 L1544.6 808 L1543.6 807.5 L1542.6 807.4 L1541.6 807.9 L1540.6 807.9 L1539.6 807.6 L1538.6 808.1 L1537.6 807.6 L1536.6 807.9 L1535.6 808 L1534.6 807.3 L1533.6 807.5 L1532.6 807.4 L1531.6 807.9 L1530.6 807.5 L1529.6 807.9 L1528.6 807.6 L1527.6 808 L1526.6 807.5 L1525.6 807.9 L1524.6 807.5 L1523.6 807.5 L1522.6 808 L1521.6 808.1 L1520.6 807.5 L1519.6 807.9 L1518.6 808 L1517.6 808.1 L1516.6 808 L1515.6 807.4 L1514.6 807.6 L1513.6 808 L1512.6 807.5 L1511.6 807.9 L1510.6 807.3 L1509.6 807.5 L1508.6 807.4 L1507.6 808 L1506.6 808 L1505.6 808.1 L1504.6 808 L1503.6 807.9 L1502.6 807.9 L1501.6 807.3 L1500.6 807.5 L1499.6 807.9 L1498.6 807.4 L1497.6 807.9 L1496.6 807.5 L1495.6 807.6 L1494.6 807.5 L1493.6 807.5 L1492.6 807.3 L1491.6 808.1 L1490.6 808 L1489.6 808.1 L1488.6 807.9 L1487.6 807.6 L1486.6 807.5 L1485.6 807.4 L1484.6 807.4 L1483.6 807.4 L1482.6 807.5 L1481.6 807.9 L1480.6 807.4 L1479.6 808 L1478.6 807.4 L1477.6 807.5 L1476.6 808.1 L1475.6 807.9 L1474.6 808 L1473.6 808.1 L1472.6 808.1 L1471.6 807.5 L1470.6 807.4 L1469.6 807.4 L1468.6 808 L1467.6 808 L1466.6 808.1 L1465.6 807.6 L1464.6 807.9 L1463.6 807.4 L1462.6 808.1 L1461.6 807.4 L1460.6 808 L1459.6 807.5 L1458.6 807.4 L1457.6 807.5 L1456.6 808 L1455.6 807.4 L1454.6 808 L1453.6 808 L1452.6 808.1 L1451.6 807.3 L1450.6 807.6 L1449.6 807.5 L1448.6 807.3 L1447.6 807.4 L1446.6 808 L1445.6 808 L1444.6 807.4 L1443.6 807.5 L1442.6 808 L1441.6 808 L1440.6 807.4 L1439.6 808.1 L1438.6 808 L1437.6 807.4 L1436.6 808.1 L1435.6 807.6 L1434.6 807.9 L1433.6 807.9 L1432.6 807.3 L1431.6 807.5 L1430.6 808.1 L1429.6 807.4 L1428.6 808 L1427.6 807.4 L1426.6 808.1 L1425.6 808 L1424.6 808.1 L1423.6 807.6 L1422.6 807.4 L1421.6 807.5 L1420.6 807.4 L1419.6 808.1 L1418.6 808 L1417.6 808.1 L1416.6 808.1 L1415.6 807.5 L1414.6 807.6 L1413.6 808 L1412.6 807.5 L1411.6 807.6 L1410.6 807.5 L1409.6 807.9 L1408.6 807.3 L1407.6 808 L1406.6 807.5 L1405.6 808 L1404.6 807.6 L1403.6 807.9 L1402.6 808 L1401.6 808.1 L1400.6 808 L1399.6 807.3 L1398.6 808.1 L1397.6 807.5 L1396.6 808.1 L1395.6 807.3 L1394.6 808 L1393.6 807.3 L1392.6 808 L1391.6 807.9 L1390.6 807.4 L1389.6 808.1 L1388.6 807.3 L1387.6 808.1 L1386.6 807.9 L1385.6 808 L1384.6 807.9 L1383.6 808 L1382.6 808.1 L1381.6 807.4 L1380.6 807.4 L1379.6 807.3 L1378.6 808 L1377.6 808 L1376.6 807.9 L1375.6 808.1 L1374.6 808 L1373.6 808.1 L1372.6 807.9 L1371.6 807.3 L1370.6 807.4 L1369.6 807.3 L1368.6 807.6 L1367.6 807.9 L1366.6 807.5 L1365.6 807.3 L1364.6 808.1 L1363.6 807.5 L1362.6 808.1 L1361.6 807.3 L1360.6 808.1 L1359.6 808 L1358.6 808 L1357.6 807.6 L1356.6 808.1 L1355.6 807.9 L1354.6 808 L1353.6 808.1 L1352.6 807.9 L1351.6 808.1 L1350.6 807.4 L1349.6 807.9 L1348.6 808.1 L1347.6 807.9 L1346.6 808.1 L1345.6 807.5 L1344.6 808 L1343.6 807.3 L1342.6 807.3 L1341.6 808.1 L1340.6 807.5 L1339.6 808.1 L1338.6 808 L1337.6 807.9 L1336.6 808.1 L1335.6 808 L1334.6 808 L1333.6 807.9 L1332.6 807.6 L1331.6 807.9 L1330.6 808 L1329.6 807.9 L1328.6 807.4 L1327.6 808 L1326.6 807.6 L1325.6 808 L1324.6 807.9 L1323.6 808.1 L1322.6 808.1 L1321.6 808.1 L1320.6 807.3 L1319.6 807.5 L1318.6 807.4 L1317.6 808.1 L1316.6 807.4 L1315.6 807.4 L1314.6 808 L1313.6 807.5 L1312.6 808 L1311.6 807.9 L1310.6 807.4 L1309.6 807.4 L1308.6 808 L1307.6 808 L1306.6 808.1 L1305.6 807.9 L1304.6 808.1 L1303.6 807.6 L1302.6 808.1 L1301.6 807.4 L1300.6 807.9 L1299.6 807.9 L1298.6 808 L1297.6 807.4 L1296.6 807.5 L1295.6 807.4 L1294.6 808 L1293.6 807.5 L1292.6 807.9 L1291.6 807.3 L1290.6 808 L1289.6 807.6 L1288.6 807.4 L1287.6 807.4 L1286.6 808 L1285.6 807.9 L1284.6 807.5 L1283.6 808.1 L1282.6 807.9 L1281.6 807.4 L1280.6 808 L1279.6 807.4 L1278.6 807.4 L1277.6 807.5 L1276.6 807.3 L1275.6 807.5 L1274.6 808.1 L1273.6 807.5 L1272.6 807.9 L1271.6 808 L1270.6 808 L1269.6 807.9 L1268.6 807.4 L1267.6 807.9 L1266.6 807.6 L1265.6 808 L1264.6 808.1 L1263.6 808 L1262.6 807.9 L1261.6 807.9 L1260.6 807.6 L1259.6 807.4 L1258.6 808 L1257.6 808.1 L1256.6 807.9 L1255.6 808 L1254.6 807.4 L1253.6 807.9 L1252.6 808 L1251.6 808.1 L1250.6 807.6 L1249.6 808.1 L1248.6 808.1 L1247.6 808.1 L1246.6 807.3 L1245.6 807.9 L1244.6 808.1 L1243.6 808.1 L1242.6 807.4 L1241.6 808 L1240.6 807.3 L1239.6 807.9 L1238.6 808.1 L1237.6 808.1 L1236.6 807.4 L1235.6 807.5 L1234.6 807.9 L1233.6 807.9 L1232.6 807.6 L1231.6 808 L1230.6 807.4 L1229.6 808.1 L1228.6 807.9 L1227.6 807.4 L1226.6 808.1 L1225.6 807.9 L1224.6 808.1 L1223.6 807.4 L1222.6 808 L1221.6 807.9 L1220.6 808.1 L1219.6 807.4 L1218.6 808 L1217.6 808.1 L1216.6 807.4 L1215.6 807.4 L1214.6 808.1 L1213.6 807.4 L1212.6 808 L1211.6 807.4 L1210.6 808.1 L1209.6 807.9 L1208.6 808 L1207.6 807.5 L1206.6 808 L1205.6 808 L1204.6 807.9 L1203.6 807.4 L1202.6 807.5 L1201.6 807.4 L1200.6 808.1 L1199.6 807.9 L1198.6 808.1 L1197.6 807.6 L1196.6 807.5 L1195.6 807.9 L1194.6 808.1 L1193.6 807.9 L1192.6 808.1 L1191.6 808.1 L1190.6 807.4 L1189.6 807.9 L1188.6 808.1 L1187.6 807.5 L1186.6 807.9 L1185.6 807.9 L1184.6 807.4 L1183.6 807.9 L1182.6 807.9 L1181.6 808.1 L1180.6 807.9 L1179.6 807.4 L1178.6 807.5 L1177.6 807.5 L1176.6 808.1 L1175.6 807.5 L1174.6 807.6 L1173.6 807.3 L1172.6 808 L1171.6 808 L1170.6 808.1 L1169.6 808.1 L1168.6 808 L1167.6 808 L1166.6 808 L1165.6 807.9 L1164.6 807.9 L1163.6 807.5 L1162.6 808.1 L1161.6 807.4 L1160.6 807.9 L1159.6 808.1 L1158.6 808 L1157.6 807.5 L1156.6 808.1 L1155.6 808.1 L1154.6 807.4 L1153.6 807.9 L1152.6 808.1 L1151.6 807.4 L1150.6 807.3 L1149.6 807.3 L1148.6 807.5 L1147.6 808 L1146.6 807.5 L1145.6 808.1 L1144.6 808.1 L1143.6 807.5 L1142.6 808.1 L1141.6 808 L1140.6 807.9 L1139.6 807.3 L1138.6 808.1 L1137.6 808.1 L1136.6 808.1 L1135.6 808.1 L1134.6 808 L1133.6 807.9 L1132.6 807.9 L1131.6 808 L1130.6 808 L1129.6 808.1 L1128.6 808.1 L1127.6 808 L1126.6 808 L1125.6 808 L1124.6 808.1 L1123.6 808.1 L1122.6 808 L1121.6 808 L1120.6 808.1 L1119.6 807.5 L1118.6 807.6 L1117.6 808 L1116.6 807.9 L1115.6 808 L1114.6 807.6 L1113.6 808 L1112.6 807.5 L1111.6 807.4 L1110.6 808.1 L1109.6 807.9 L1108.6 807.3 L1107.6 807.3 L1106.6 808 L1105.6 808 L1104.6 807.6 L1103.6 808 L1102.6 807.4 L1101.6 808 L1100.6 808.1 L1099.6 807.5 L1098.6 807.4 L1097.6 808 L1096.6 807.6 L1095.6 807.9 L1094.6 807.5 L1093.6 807.5 L1092.6 808 L1091.6 808 L1090.6 807.6 L1089.6 807.5 L1088.6 807.9 L1087.6 808 L1086.6 807.4 L1085.6 807.9 L1084.6 808 L1083.6 807.5 L1082.6 807.5 L1081.6 808.1 L1080.6 808 L1079.6 808.1 L1078.6 808.1 L1077.6 807.9 L1076.6 808.1 L1075.6 807.9 L1074.6 807.9 L1073.6 807.5 L1072.6 807.4 L1071.6 807.3 L1070.6 808.1 L1069.6 808.1 L1068.6 807.5 L1067.6 807.5 L1066.6 808.1 L1065.6 807.5 L1064.6 808.1 L1063.6 808.1 L1062.6 807.9 L1061.6 807.5 L1060.6 807.4 L1059.6 807.9 L1058.6 808 L1057.6 807.5 L1056.6 808 L1055.6 808 L1054.6 807.9 L1053.6 807.5 L1052.6 807.9 L1051.6 807.4 L1050.6 807.5 L1049.6 807.4 L1048.6 807.9 L1047.6 807.6 L1046.6 808.1 L1045.6 808.1 L1044.6 807.9 L1043.6 808 L1042.6 807.3 L1041.6 808.1 L1040.6 808 L1039.6 808 L1038.6 807.9 L1037.6 807.3 L1036.6 808 L1035.6 807.5 L1034.6 808.1 L1033.6 807.9 L1032.6 807.4 L1031.6 808.1 L1030.6 807.5 L1029.6 807.3 L1028.6 807.3 L1027.6 807.4 L1026.6 807.9 L1025.6 807.9 L1024.6 807.9 L1023.6 808 L1022.6 808 L1021.6 807.9 L1020.6 807.4 L1019.6 808.1 L1018.6 808.1 L1017.6 808.1 L1016.6 808 L1015.6 808.1 L1014.6 808.1 L1013.6 808 L1012.6 807.5 L1011.6 808 L1010.6 807.5 L1009.6 807.9 L1008.6 808.1 L1007.6 807.9 L1006.6 807.5 L1005.6 807.9 L1004.6 808.1 L1003.6 808 L1002.6 807.5 L1001.6 808 L1000.6 808.1 L999.6 807.9 L998.6 807.4 L997.6 807.3 L996.6 807.4 L995.6 807.9 L994.6 808 L993.6 807.4 L992.6 807.5 L991.6 807.9 L990.6 808.1 L989.6 808.1 L988.6 807.6 L987.6 807.4 L986.6 808 L985.6 808 L984.6 807.5 L983.6 808 L982.6 808.1 L981.6 808.1 L980.6 808.1 L979.6 807.9 L978.6 808 L977.6 807.6 L976.6 808.1 L975.6 808 L974.6 807.9 L973.6 807.6 L972.6 808 L971.6 807.4 L970.6 808 L969.6 807.6 L968.6 807.5 L967.6 807.5 L966.6 808.1 L965.6 807.5 L964.6 807.5 L963.6 807.5 L962.6 807.5 L961.6 808 L960.6 808.1 L959.6 808.1 L958.6 807.9 L957.6 807.9 L956.6 807.4 L955.6 808 L954.6 808.1 L953.6 808 L952.6 807.9 L951.6 807.4 L950.6 807.4 L949.6 808 L948.6 808.1 L947.6 807.9 L946.6 807.9 L945.6 807.9 L944.6 807.9 L943.6 808 L942.6 807.9 L941.6 808 L940.6 807.5 L939.6 807.4 L938.6 808 L937.6 807.6 L936.6 807.6 L935.6 807.9 L934.6 808 L933.6 807.4 L932.6 807.4 L931.6 808 L930.6 807.5 L929.6 808.1 L928.6 807.9 L927.6 808.1 L926.6 808.1 L925.6 807.6 L924.6 808.1 L923.6 808.1 L922.6 808 L921.6 808 L920.6 807.3 L919.6 807.3 L918.6 808 L917.6 807.4 L916.6 807.3 L915.6 807.9 L914.6 808.1 L913.6 808 L912.6 807.6 L911.6 808.1 L910.6 807.4 L909.6 808.1 L908.6 808 L907.6 808 L906.6 807.4 L905.6 807.4 L904.6 808.1 L903.6 807.6 L902.6 808.1 L901.6 807.4 L900.6 807.9 L899.6 807.5 L898.6 807.9 L897.6 807.9 L896.6 807.5 L895.6 807.9 L894.6 808.1 L893.6 807.5 L892.6 807.9 L891.6 807.3 L890.6 808.1 L889.6 807.9 L888.6 807.6 L887.6 807.9 L886.6 808 L885.6 808.1 L884.6 807.3 L883.6 808 L882.6 808.1 L881.6 808 L880.6 807.9 L879.6 807.9 L878.6 808 L877.6 808 L876.6 807.6 L875.6 808 L874.6 807.6 L873.6 808.1 L872.6 808.1 L871.6 807.9 L870.6 808 L869.6 807.9 L868.6 808 L867.6 807.6 L866.6 807.3 L865.6 807.5 L864.6 807.6 L863.6 808 L862.6 807.4 L861.6 807.9 L860.6 807.5 L859.6 808 L858.6 807.9 L857.6 807.3 L856.6 807.4 L855.6 807.9 L854.6 807.9 L853.6 807.6 L852.6 808.1 L851.6 807.9 L850.6 807.6 L849.6 807.9 L848.6 808 L847.6 808 L846.6 808.1 L845.6 808 L844.6 807.4 L843.6 807.9 L842.6 808 L841.6 808.1 L840.6 807.5 L839.6 807.4 L838.6 807.9 L837.6 807.5 L836.6 807.6 L835.6 808.1 L834.6 807.4 L833.6 807.5 L832.6 807.5 L831.6 808.1 L830.6 808.1 L829.6 807.9 L828.6 807.5 L827.6 808.1 L826.6 808 L825.6 807.5 L824.6 807.4 L823.6 808.1 L822.6 807.5 L821.6 808.1 L820.6 807.5 L819.6 808.1 L818.6 808 L817.6 807.9 L816.6 807.3 L815.6 807.3 L814.6 807.9 L813.6 808.1 L812.6 807.4 L811.6 807.3 L810.6 807.5 L809.6 807.4 L808.6 808.1 L807.6 808.1 L806.6 807.3 L805.6 807.9 L804.6 808 L803.6 807.4 L802.6 808 L801.6 807.4 L800.6 808.1 L799.6 808 L798.6 808 L797.6 808 L796.6 807.5 L795.6 807.4 L794.6 808.1 L793.6 807.3 L792.6 808.1 L791.6 807.5 L790.6 807.5 L789.6 807.5 L788.6 808.1 L787.6 807.9 L786.6 807.6 L785.6 807.5 L784.6 807.9 L783.6 807.5 L782.6 808 L781.6 807.4 L780.6 808.1 L779.6 808 L778.6 808 L777.6 808.1 L776.6 808.1 L775.6 808 L774.6 807.4 L773.6 808 L772.6 808 L771.6 808 L770.6 808 L769.6 808.1 L768.6 808 L767.6 807.9 L766.6 808 L765.6 807.9 L764.6 807.4 L763.6 808.1 L762.6 807.5 L761.6 807.5 L760.6 807.4 L759.6 807.9 L758.6 807.9 L757.6 807.4 L756.6 807.9 L755.6 808.1 L754.6 807.6 L753.6 807.6 L752.6 807.5 L751.6 808 L750.6 807.4 L749.6 807.9 L748.6 808 L747.6 807.4 L746.6 808 L745.6 807.5 L744.6 807.4 L743.6 808 L742.6 807.5 L741.6 807.9 L740.6 807.9 L739.6 808.1 L738.6 807.4 L737.6 808 L736.6 807.9 L735.6 808.1 L734.6 807.4 L733.6 808.1 L732.6 807.5 L731.6 808.1 L730.6 807.9 L729.6 808.1 L728.6 807.3 L727.6 807.4 L726.6 807.4 L725.6 807.4 L724.6 808 L723.6 807.5 L722.6 807.3 L721.6 807.4 L720.6 807.6 L719.6 807.6 L718.6 807.4 L717.6 807.4 L716.6 807.4 L715.6 807.4 L714.6 807.5 L713.6 807.9 L712.6 807.3 L711.6 807.4 L710.6 808.1 L709.6 808.1 L708.6 808.1 L707.6 807.9 L706.6 807.9 L705.6 807.6 L704.6 807.9 L703.6 808 L702.6 808.1 L701.6 807.5 L700.6 807.9 L699.6 807.5 L698.6 808 L697.6 808.1 L696.6 808.1 L695.6 807.3 L694.6 808.1 L693.6 807.4 L692.6 807.5 L691.6 808 L690.6 808.1 L689.6 808.1 L688.6 808 L687.6 808.1 L686.6 807.3 L685.6 807.9 L684.6 808.1 L683.6 807.9 L682.6 807.4 L681.6 808 L680.6 808.1 L679.6 807.9 L678.6 807.9 L677.6 808 L676.6 808.1 L675.6 807.4 L674.6 807.5 L673.6 807.9 L672.6 807.3 L671.6 808.1 L670.6 807.5 L669.6 808 L668.6 807.5 L667.6 807.9 L666.6 807.4 L665.6 807.9 L664.6 807.3 L663.6 807.9 L662.6 807.4 L661.6 808.1 L660.6 807.5 L659.6 808.1 L658.6 808.1 L657.6 807.6 L656.6 807.9 L655.6 807.4 L654.6 807.9 L653.6 808 L652.6 807.5 L651.6 808.1 L650.6 807.9 L649.6 807.4 L648.6 807.5 L647.6 807.5 L646.6 807.9 L645.6 807.4 L644.6 807.5 L643.6 807.3 L642.6 807.3 L641.6 807.9 L640.6 807.3 L639.6 807.5 L638.6 808 L637.6 808 L636.6 807.4 L635.6 808 L634.6 807.4 L633.6 807.4 L632.6 808 L631.6 808 L630.6 807.9 L629.6 807.9 L628.6 808 L627.6 807.9 L626.6 807.4 L625.6 807.6 L624.6 808.1 L623.6 807.9 L622.6 808 L621.6 807.4 L620.6 807.5 L619.6 808.1 L618.6 808.1 L617.6 808 L616.6 807.4 L615.6 808.1 L614.6 807.9 L613.6 807.9 L612.6 808 L611.6 807.4 L610.6 808.1 L609.6 807.6 L608.6 807.6 L607.6 808.1 L606.6 807.5 L605.6 807.3 L604.6 808 L603.6 807.5 L602.6 808 L601.6 808 L600.6 807.9 L599.6 807.9 L598.6 808.1 L597.6 808 L596.6 807.4 L595.6 808 L594.6 808 L593.6 807.3 L592.6 808.1 L591.6 807.6 L590.6 807.9 L589.6 808 L588.6 807.5 L587.6 807.4 L586.6 807.5 L585.6 807.4 L584.6 807.4 L583.6 807.9 L582.6 808.1 L581.6 808.1 L580.6 807.9 L579.6 808 L578.6 808 L577.6 807.9 L576.6 807.4 L575.6 808.1 L574.6 808.1 L573.6 807.6 L572.6 808 L571.6 808.1 L570.6 807.4 L569.6 807.3 L568.6 808 L567.6 807.5 L566.6 807.9 L565.6 807.9 L564.6 808 L563.6 807.9 L562.6 807.4 L561.6 807.3 L560.6 807.9 L559.6 807.4 L558.6 808.1 L557.6 807.9 L556.6 807.6 L555.6 807.3 L554.6 808.1 L553.6 808.1 L552.6 807.5 L551.6 807.9 L550.6 808.1 L549.6 807.4 L548.6 807.5 L547.6 807.5 L546.6 807.9 L545.6 808 L544.6 807.4 L543.6 808.1 L542.6 807.9 L541.6 808.1 L540.6 808.1 L539.6 807.4 L538.6 807.5 L537.6 807.4 L536.6 808 L535.6 807.6 L534.6 807.9 L533.6 807.5 L532.6 807.9 L531.6 808.1 L530.6 808.1 L529.6 807.6 L528.6 808.1 L527.6 807.3 L526.6 808 L525.6 808 L524.6 808 L523.6 807.4 L522.6 808 L521.6 807.3 L520.6 807.9 L519.6 807.9 L518.6 808 L517.6 808.1 L516.6 807.6 L515.6 807.6 L514.6 807.9 L513.6 808.1 L512.6 807.3 L511.6 808 L510.6 807.4 L509.6 808.1 L508.6 808.1 L507.6 807.9 L506.6 808.1 L505.6 808 L504.6 807.4 L503.6 807.9 L502.6 808 L501.6 807.5 L500.6 807.9 L499.6 807.5 L498.6 807.9 L497.6 807.9 L496.6 808 L495.6 807.5 L494.6 807.9 L493.6 808.1 L492.6 807.9 L491.6 807.5 L490.6 807.6 L489.6 807.9 L488.6 807.6 L487.6 808.1 L486.6 808 L485.6 808.1 L484.6 807.6 L483.6 808 L482.6 807.9 L481.6 808 L480.6 808.1 L479.6 808 L478.6 808 L477.6 808.1 L476.6 807.9 L475.6 807.9 L474.6 807.4 L473.6 807.9 L472.6 807.9 L471.6 808 L470.6 808 L469.6 808.1 L468.6 808 L467.6 807.9 L466.6 808.1 L465.6 807.3 L464.6 807.6 L463.6 807.5 L462.6 808 L461.6 807.9 L460.6 807.4 L459.6 807.9 L458.6 808 L457.6 808 L456.6 807.6 L455.6 807.3 L454.6 807.3 L453.6 808 L452.6 808 L451.6 807.9 L450.6 807.4 L449.6 807.5 L448.6 808.1 L447.6 808 L446.6 807.9 L445.6 807.6 L444.6 807.3 L443.6 807.4 L442.6 808 L441.6 807.4 L440.6 808.1 L439.6 807.9 L438.6 808.1 L437.6 807.3 L436.6 807.5 L435.6 808 L434.6 808.1 L433.6 807.9 L432.6 808.1 L431.6 808 L430.6 808.1 L429.6 807.5 L428.6 807.5 L427.6 808 L426.6 807.4 L425.6 808.1 L424.6 807.5 L423.6 808 L422.6 807.5 L421.6 808.1 L420.6 808.1 L419.6 807.9 L418.6 807.5 L417.6 808 L416.6 807.9 L415.6 808 L414.6 807.9 L413.6 808 L412.6 807.9 L411.6 808.1 L410.6 807.6 L409.6 808 L408.6 807.9 L407.6 807.5 L406.6 807.9 L405.6 808.1 L404.6 807.9 L403.6 807.5 L402.6 807.4 L401.6 808 L400.6 808 L399.6 807.3 L398.6 807.9 L397.6 807.9 L396.6 808 L395.6 807.4 L394.6 807.9 L393.6 807.9 L392.6 808 L391.6 808.1 L390.6 807.4 L389.6 808.1 L388.6 807.5 L387.6 807.4 L386.6 807.3 L385.6 808.1 L384.6 807.5 L383.6 807.9 L382.6 807.9 L381.6 807.6 L380.6 807.9 L379.6 807.9 L378.6 808 L377.6 807.9 L376.6 808 L375.6 807.5 L374.6 807.4 L373.6 807.6 L372.6 807.5 L371.6 807.6 L370.6 807.9 L369.6 808 L368.6 807.6 L367.6 807.4 L366.6 807.5 L365.6 808 L364.6 808 L363.6 807.4 L362.6 808 L361.6 807.9 L360.6 807.3 L359.6 808 L358.6 808.1 L357.6 808.1 L356.6 808 L355.6 808 L354.6 807.4 L353.6 808 L352.6 807.9 L351.6 808 L350.6 807.9 L349.6 808.1 L348.6 807.5 L347.6 807.9 L346.6 807.4 L345.6 808.1 L344.6 808.1 L343.6 807.4 L342.6 808 L341.6 808.1 L340.6 807.9 L339.6 807.5 L338.6 807.3 L337.6 807.4 L336.6 808 L335.6 807.9 L334.6 807.6 L333.6 807.4 L332.6 807.9 L331.6 807.9 L330.6 807.4 L329.6 807.5 L328.6 808.1 L327.6 808.1 L326.6 807.9 L325.6 807.5 L324.6 808 L323.6 807.9 L322.6 807.9 L321.6 807.9 L320.6 807.9 L319.6 807.6 L318.6 808 L317.6 807.3 L316.6 807.9 L315.6 807.9 L314.6 808 L313.6 807.9 L312.6 807.9 L311.6 807.5 L310.6 808.1 L309.6 808 L308.6 808.1 L307.6 808 L306.6 808 L305.6 807.9 L304.6 807.6 L303.6 808 L302.6 807.5 L301.6 808 L300.6 808 L299.6 808.1 L298.6 807.9 L297.6 808.1 L296.6 807.5 L295.6 808.1 L294.6 807.4 L293.6 808 L292.6 808.1 L291.6 807.5 L290.6 807.9 L289.6 808.1 L288.6 808.1 L287.6 808.1 L286.6 807.4 L285.6 807.9 L284.6 807.9 L283.6 807.9 L282.6 808 L281.6 808 L280.6 807.9 L279.6 807.4 L278.6 808.1 L277.6 807.6 L276.6 807.3 L275.6 807.9 L274.6 807.9 L273.6 808 L272.6 808Z" fill="#b6972c"/>
<path d="M334.4 795 V806 M652.4 797 V806 M969.4 798 V806 M1295.5 796 V806 M1625.5 793 V806" stroke="#8c6a20" stroke-width="1.2" fill="none"/>
<path d="M272.6 838.8 L273.4 835 L274.2 839.6 L275 839.7 L275.8 839.9 L276.6 840.1 L277.4 840.1 L278.2 839.7 L279 839.9 L279.8 838.1 L280.6 839.5 L281.4 839.5 L282.2 840 L283 840.1 L283.8 839.5 L284.6 839.7 L285.4 839.4 L286.2 839.9 L287 840.1 L287.8 839.8 L288.6 839.7 L289.4 840 L290.2 836.3 L291 840.1 L291.8 840.1 L292.6 839.5 L293.4 839.1 L294.2 839.8 L295 840 L295.8 840.1 L296.6 840 L297.4 838.6 L298.2 839.6 L299 839.6 L299.8 840 L300.6 835.2 L301.4 839.5 L302.2 839.6 L303 839.6 L303.8 839.7 L304.6 839.1 L305.4 839.9 L306.2 839.8 L307 839.2 L307.8 839.8 L308.6 839 L309.4 839.5 L310.2 839.8 L311 839.9 L311.8 839.3 L312.6 840.1 L313.4 839.6 L314.2 840 L315 839.6 L315.8 839.5 L316.6 839.9 L317.4 836.1 L318.2 840.1 L319 840 L319.8 840.1 L320.6 840.1 L321.4 838.3 L322.2 839.2 L323 839.1 L323.8 836.2 L324.6 840.1 L325.4 831.8 L326.2 840.1 L327 839.2 L327.8 839.5 L328.6 840 L329.4 831.3 L330.2 830.5 L331 840.1 L331.8 839.5 L332.6 840 L333.4 839.8 L334.2 839.8 L335 839.2 L335.8 839.9 L336.6 834.9 L337.4 840.1 L338.2 831.2 L339 839.8 L339.8 839.6 L340.6 840.1 L341.4 839.8 L342.2 838.9 L343 839.3 L343.8 839.1 L344.6 839.7 L345.4 839.7 L346.2 840.1 L347 840 L347.8 839.6 L348.6 838.1 L349.4 839.7 L350.2 839.6 L351 837.3 L351.8 840 L352.6 840 L353.4 839.5 L354.2 840.1 L355 839.9 L355.8 840.1 L356.6 839.4 L357.4 839.4 L358.2 839.7 L359 839.4 L359.8 839.5 L360.6 839.4 L361.4 837.9 L362.2 840.1 L363 837.3 L363.8 839.7 L364.6 839.6 L365.4 838.9 L366.2 837.7 L367 839.8 L367.8 838.9 L368.6 839.9 L369.4 839.4 L370.2 840.1 L371 837 L371.8 839.4 L372.6 839.8 L373.4 835.7 L374.2 840.1 L375 839.4 L375.8 839.9 L376.6 840.1 L377.4 839.9 L378.2 839.9 L379 839.8 L379.8 839.1 L380.6 839.2 L381.4 839.8 L382.2 838.8 L383 839.8 L383.8 839.7 L384.6 840 L385.4 840.1 L386.2 839.9 L387 840.1 L387.8 840.1 L388.6 839.7 L389.4 839.9 L390.2 839.4 L391 839.8 L391.8 839.7 L392.6 839.4 L393.4 840 L394.2 839.4 L395 839.7 L395.8 839.9 L396.6 840.1 L397.4 839.8 L398.2 839.9 L399 840.1 L399.8 839.9 L400.6 840.1 L401.4 840.1 L402.2 839.8 L403 840.1 L403.8 838.8 L404.6 839.5 L405.4 840.1 L406.2 839.6 L407 839.3 L407.8 839.5 L408.6 839.7 L409.4 840 L410.2 839.2 L411 839.5 L411.8 839.8 L412.6 839.3 L413.4 839.6 L414.2 839.6 L415 839.6 L415.8 839.7 L416.6 840.1 L417.4 839.8 L418.2 839.4 L419 839.5 L419.8 839.7 L420.6 837.6 L421.4 839.7 L422.2 838.9 L423 839.9 L423.8 840 L424.6 840 L425.4 836.1 L426.2 839.5 L427 839.6 L427.8 839.8 L428.6 835.9 L429.4 837.5 L430.2 839.7 L431 831.8 L431.8 839.9 L432.6 839.8 L433.4 835.8 L434.2 839.5 L435 839.9 L435.8 839.8 L436.6 838.4 L437.4 839.8 L438.2 839.1 L439 840.1 L439.8 839.3 L440.6 839.5 L441.4 839.8 L442.2 832.7 L443 839.5 L443.8 839.9 L444.6 839.4 L445.4 840 L446.2 839.3 L447 838.8 L447.8 840 L448.6 838.9 L449.4 840.1 L450.2 839.7 L451 839 L451.8 839.7 L452.6 839.9 L453.4 840.1 L454.2 840 L455 839.9 L455.8 839.9 L456.6 839 L457.4 840 L458.2 839.8 L459 839.1 L459.8 831.5 L460.6 839.8 L461.4 840 L462.2 840.1 L463 840.1 L463.8 839.7 L464.6 839.2 L465.4 839.8 L466.2 839.6 L467 830.5 L467.8 840.1 L468.6 839.5 L469.4 839.6 L470.2 836.5 L471 839.8 L471.8 839.9 L472.6 839.9 L473.4 839.7 L474.2 839.5 L475 839.7 L475.8 839.9 L476.6 832.7 L477.4 839.6 L478.2 840.1 L479 840.1 L479.8 839.5 L480.6 840.1 L481.4 840.1 L482.2 839.7 L483 839.8 L483.8 839.3 L484.6 837.6 L485.4 839.7 L486.2 839.6 L487 840.1 L487.8 839.7 L488.6 836.4 L489.4 839.7 L490.2 839 L491 839.6 L491.8 838.8 L492.6 839.8 L493.4 839.8 L494.2 840 L495 839 L495.8 838.2 L496.6 839.9 L497.4 840.1 L498.2 839.8 L499 839.6 L499.8 840 L500.6 840.1 L501.4 835.7 L502.2 839.9 L503 839.9 L503.8 839.7 L504.6 839.8 L505.4 839.8 L506.2 839.4 L507 840 L507.8 839.9 L508.6 833.3 L509.4 839.8 L510.2 840 L511 839.7 L511.8 840.1 L512.6 839.8 L513.4 836.9 L514.2 838.2 L515 839.9 L515.8 839.8 L516.6 840.1 L517.4 839.1 L518.2 839.3 L519 839.4 L519.8 839.8 L520.6 840 L521.4 836.5 L522.2 840.1 L523 839.3 L523.8 839.2 L524.6 839 L525.4 839.8 L526.2 839.9 L527 839.5 L527.8 838.8 L528.6 836.2 L529.4 839.4 L530.2 839.8 L531 834 L531.8 833.2 L532.6 836.5 L533.4 833.6 L534.2 835 L535 829.5 L535.8 835.5 L536.6 831.6 L537.4 837.1 L538.2 835.9 L539 834.5 L539.8 837.1 L540.6 835.3 L541.4 834.4 L542.2 834.9 L543 837.3 L543.8 836.2 L544.6 837.7 L545.4 837.1 L546.2 838.1 L547 837.2 L547.8 837.4 L548.6 838.5 L549.4 836.1 L550.2 838.7 L551 837.5 L551.8 832.6 L552.6 839.1 L553.4 838.3 L554.2 838.7 L555 837.7 L555.8 838.2 L556.6 834.7 L557.4 839 L558.2 839.7 L559 839.1 L559.8 839.2 L560.6 839.8 L561.4 838.7 L562.2 839.3 L563 839.9 L563.8 840.2 L564.6 836.7 L565.4 839.9 L566.2 838.7 L567 840.5 L567.8 839.6 L568.6 838.6 L569.4 838.9 L570.2 841.2 L571 839.2 L571.8 839.6 L572.6 840.1 L573.4 839.9 L574.2 839.5 L575 839.2 L575.8 835.1 L576.6 839.6 L577.4 839.2 L578.2 839.8 L579 839.6 L579.8 839.7 L580.6 839.8 L581.4 839.9 L582.2 839.7 L583 837.1 L583.8 840 L584.6 839.7 L585.4 839.4 L586.2 839.9 L587 839 L587.8 839.1 L588.6 839.9 L589.4 839.8 L590.2 839.8 L591 839.8 L591.8 839.5 L592.6 838.6 L593.4 839.9 L594.2 839.4 L595 839.8 L595.8 839.2 L596.6 840.1 L597.4 840 L598.2 839.8 L599 839.9 L599.8 839.6 L600.6 840 L601.4 837.8 L602.2 839.8 L603 839.6 L603.8 835 L604.6 839.9 L605.4 839.8 L606.2 840 L607 840 L607.8 839.4 L608.6 839.5 L609.4 839.7 L610.2 839.8 L611 839.7 L611.8 839.3 L612.6 839.9 L613.4 840.1 L614.2 840.1 L615 840 L615.8 836.5 L616.6 840 L617.4 839.6 L618.2 840 L619 840.1 L619.8 840 L620.6 839.8 L621.4 840 L622.2 839.9 L623 839.7 L623.8 839 L624.6 839.1 L625.4 840.1 L626.2 840.1 L627 839.5 L627.8 839.5 L628.6 839.6 L629.4 839.4 L630.2 839.7 L631 839 L631.8 839.6 L632.6 839.4 L633.4 839.8 L634.2 839.1 L635 839.4 L635.8 840.1 L636.6 839.8 L637.4 838.9 L638.2 839.7 L639 839.1 L639.8 840 L640.6 838.7 L641.4 837.8 L642.2 839.8 L643 839.6 L643.8 837.9 L644.6 839.9 L645.4 840 L646.2 840 L647 839.2 L647.8 840.1 L648.6 837.2 L649.4 840.1 L650.2 839.8 L651 839.7 L651.8 840 L652.6 839.5 L653.4 839.8 L654.2 839.8 L655 839.7 L655.8 840.1 L656.6 839.5 L657.4 840 L658.2 839.9 L659 840.1 L659.8 839.6 L660.6 836.2 L661.4 840.1 L662.2 840 L663 840 L663.8 840 L664.6 840.1 L665.4 840.1 L666.2 839.4 L667 840 L667.8 839.7 L668.6 839.9 L669.4 834.9 L670.2 840 L671 840 L671.8 839.8 L672.6 840.1 L673.4 840 L674.2 840.1 L675 840.1 L675.8 837.7 L676.6 840 L677.4 839.7 L678.2 840 L679 839.3 L679.8 839.3 L680.6 835.9 L681.4 839.1 L682.2 839.3 L683 839.7 L683.8 837.6 L684.6 831.4 L685.4 840 L686.2 840.1 L687 839.9 L687.8 839.4 L688.6 839.9 L689.4 839.4 L690.2 836.3 L691 840 L691.8 839.9 L692.6 838.9 L693.4 839.9 L694.2 837.2 L695 839.6 L695.8 838.8 L696.6 839.4 L697.4 840.1 L698.2 839.5 L699 840.1 L699.8 839.3 L700.6 839.4 L701.4 839.9 L702.2 840.1 L703 838.4 L703.8 840.1 L704.6 839.2 L705.4 839.7 L706.2 840.1 L707 839.1 L707.8 838.5 L708.6 839.7 L709.4 835.9 L710.2 839.5 L711 840.1 L711.8 840 L712.6 840.1 L713.4 839.7 L714.2 839.9 L715 839.6 L715.8 839 L716.6 839.7 L717.4 837.6 L718.2 839.5 L719 839.7 L719.8 836.6 L720.6 839.5 L721.4 840.1 L722.2 839.7 L723 840.1 L723.8 839.9 L724.6 839.8 L725.4 839.8 L726.2 839.4 L727 839.9 L727.8 839.9 L728.6 839.2 L729.4 839.6 L730.2 840.1 L731 839.9 L731.8 839.7 L732.6 840 L733.4 839.5 L734.2 839.8 L735 839.8 L735.8 839.9 L736.6 839.6 L737.4 839.8 L738.2 839.9 L739 839.9 L739.8 839.9 L740.6 839.4 L741.4 839.6 L742.2 839.7 L743 840.1 L743.8 839.9 L744.6 839.4 L745.4 840 L746.2 840.1 L747 836.6 L747.8 839.8 L748.6 839.8 L749.4 840.1 L750.2 839.6 L751 839.8 L751.8 834.6 L752.6 839.6 L753.4 839.2 L754.2 838.7 L755 840 L755.8 839.4 L756.6 839.9 L757.4 839.4 L758.2 836.1 L759 839.8 L759.8 839 L760.6 839.8 L761.4 839.8 L762.2 839.9 L763 839.5 L763.8 840 L764.6 836.9 L765.4 839.4 L766.2 840.1 L767 832.4 L767.8 839.9 L768.6 839.6 L769.4 839.7 L770.2 839.3 L771 839.2 L771.8 836.1 L772.6 839.6 L773.4 839.8 L774.2 839.6 L775 831.2 L775.8 839.9 L776.6 840.1 L777.4 840 L778.2 840.1 L779 840 L779.8 840.1 L780.6 840 L781.4 839.5 L782.2 835.8 L783 839.6 L783.8 839.9 L784.6 840.1 L785.4 840.1 L786.2 840.1 L787 839.4 L787.8 839.7 L788.6 840 L789.4 840.1 L790.2 839.4 L791 839.5 L791.8 838.8 L792.6 837.2 L793.4 838.9 L794.2 837 L795 840.1 L795.8 839.6 L796.6 839.7 L797.4 839.3 L798.2 839.9 L799 839.7 L799.8 839.4 L800.6 840.1 L801.4 839.5 L802.2 839.8 L803 839.9 L803.8 840 L804.6 840.1 L805.4 839.9 L806.2 839.4 L807 839.8 L807.8 838.5 L808.6 836.1 L809.4 839.7 L810.2 839.5 L811 840.1 L811.8 840 L812.6 839.7 L813.4 838.8 L814.2 838.8 L815 839.7 L815.8 838.9 L816.6 840.1 L817.4 840.1 L818.2 840.1 L819 835.9 L819.8 840 L820.6 840 L821.4 838.9 L822.2 840 L823 840 L823.8 839.6 L824.6 839.8 L825.4 839.4 L826.2 839.9 L827 836.8 L827.8 840.1 L828.6 839.9 L829.4 840.1 L830.2 840.1 L831 840.1 L831.8 839.8 L832.6 839.7 L833.4 839.8 L834.2 840 L835 840 L835.8 839 L836.6 840 L837.4 840.1 L838.2 839.9 L839 839.9 L839.8 838.7 L840.6 840 L841.4 840.1 L842.2 839.6 L843 839.4 L843.8 840 L844.6 839.7 L845.4 840.1 L846.2 836.5 L847 835.9 L847.8 836.1 L848.6 832.5 L849.4 835.2 L850.2 830.4 L851 834.5 L851.8 835 L852.6 837.3 L853.4 837.5 L854.2 835 L855 835.3 L855.8 833.7 L856.6 834 L857.4 835.3 L858.2 835.4 L859 831.8 L859.8 834.3 L860.6 837.9 L861.4 833.4 L862.2 836.8 L863 837.8 L863.8 835.8 L864.6 836.4 L865.4 838.4 L866.2 833.4 L867 839.1 L867.8 838.1 L868.6 838.6 L869.4 838.3 L870.2 839.2 L871 835.6 L871.8 838.3 L872.6 839.4 L873.4 838.4 L874.2 833.1 L875 836.6 L875.8 839.2 L876.6 836.3 L877.4 835 L878.2 837.2 L879 840.3 L879.8 837 L880.6 838.6 L881.4 835.6 L882.2 837.6 L883 837.4 L883.8 840.1 L884.6 841.2 L885.4 840 L886.2 839.5 L887 839.7 L887.8 837.7 L888.6 839.3 L889.4 839.9 L890.2 839.8 L891 839.6 L891.8 839.5 L892.6 839.8 L893.4 840 L894.2 839.5 L895 839.5 L895.8 840 L896.6 840 L897.4 837.3 L898.2 840.1 L899 839.7 L899.8 839.9 L900.6 840.1 L901.4 840.1 L902.2 839.8 L903 839.9 L903.8 839.9 L904.6 839.5 L905.4 839.8 L906.2 835.9 L907 839.9 L907.8 839.7 L908.6 839.8 L909.4 840 L910.2 834.6 L911 839.7 L911.8 840.1 L912.6 835.5 L913.4 840 L914.2 839.6 L915 840 L915.8 840.1 L916.6 839.4 L917.4 839.5 L918.2 839.2 L919 840 L919.8 839.2 L920.6 839.6 L921.4 840.1 L922.2 839.6 L923 839.9 L923.8 840 L924.6 838.8 L925.4 840.1 L926.2 837 L927 839.9 L927.8 839.5 L928.6 840.1 L929.4 839.7 L930.2 839.8 L931 835 L931.8 839.1 L932.6 838.9 L933.4 839.3 L934.2 838.8 L935 840 L935.8 839.6 L936.6 839.7 L937.4 839.8 L938.2 838.6 L939 839.6 L939.8 836.2 L940.6 839.9 L941.4 833 L942.2 839.6 L943 839.8 L943.8 839.8 L944.6 840 L945.4 839.3 L946.2 833.8 L947 839.6 L947.8 839.6 L948.6 839.8 L949.4 836.3 L950.2 840.1 L951 839.7 L951.8 839.7 L952.6 840.1 L953.4 840.1 L954.2 839.4 L955 839.8 L955.8 838.4 L956.6 839.6 L957.4 839.5 L958.2 839.6 L959 839.7 L959.8 840 L960.6 838.7 L961.4 839.5 L962.2 838.4 L963 839.9 L963.8 836.2 L964.6 840.1 L965.4 839.5 L966.2 840.1 L967 839.9 L967.8 840 L968.6 839.4 L969.4 839.2 L970.2 839.5 L971 839.9 L971.8 839.9 L972.6 839.5 L973.4 839.3 L974.2 839.8 L975 839.5 L975.8 840.1 L976.6 840.1 L977.4 836.7 L978.2 839.6 L979 837.7 L979.8 839.9 L980.6 840.1 L981.4 839 L982.2 839.6 L983 840 L983.8 840.1 L984.6 839.9 L985.4 838.9 L986.2 840 L987 839.5 L987.8 839.6 L988.6 840 L989.4 839.7 L990.2 839.6 L991 839.6 L991.8 840 L992.6 840.1 L993.4 836.4 L994.2 840 L995 839.4 L995.8 839.4 L996.6 836.3 L997.4 839.5 L998.2 839.7 L999 840 L999.8 839.4 L1000.6 839.8 L1001.4 839.8 L1002.2 840 L1003 839.6 L1003.8 840.1 L1004.6 839.7 L1005.4 839.8 L1006.2 839.8 L1007 839.6 L1007.8 839.6 L1008.6 839.6 L1009.4 840 L1010.2 839.9 L1011 839.4 L1011.8 839.8 L1012.6 839.9 L1013.4 840 L1014.2 839.9 L1015 840 L1015.8 839.9 L1016.6 840.1 L1017.4 839.4 L1018.2 839.7 L1019 839.7 L1019.8 840.1 L1020.6 840 L1021.4 840 L1022.2 839.8 L1023 839.6 L1023.8 839.8 L1024.6 836.3 L1025.4 838.7 L1026.2 840 L1027 840.1 L1027.8 839.1 L1028.6 839.3 L1029.4 839.7 L1030.2 840 L1031 839.7 L1031.8 838.1 L1032.6 839 L1033.4 839.3 L1034.2 839.7 L1035 839.7 L1035.8 838.7 L1036.6 830.1 L1037.4 839.9 L1038.2 840.1 L1039 839.6 L1039.8 832.8 L1040.6 839.3 L1041.4 839.7 L1042.2 839.9 L1043 839.9 L1043.8 840 L1044.6 840 L1045.4 834.9 L1046.2 839.5 L1047 839.4 L1047.8 839.8 L1048.6 839.5 L1049.4 839.7 L1050.2 839.6 L1051 839.8 L1051.8 840.1 L1052.6 838.8 L1053.4 839.2 L1054.2 839.6 L1055 832.6 L1055.8 839.7 L1056.6 840 L1057.4 840 L1058.2 839.7 L1059 840 L1059.8 839.8 L1060.6 836.8 L1061.4 839.7 L1062.2 839.6 L1063 840 L1063.8 839.7 L1064.6 839.7 L1065.4 839.6 L1066.2 840.1 L1067 838.2 L1067.8 839.7 L1068.6 835.9 L1069.4 840 L1070.2 839.8 L1071 839.5 L1071.8 840 L1072.6 839.5 L1073.4 839.9 L1074.2 839.3 L1075 839.8 L1075.8 838.8 L1076.6 839.8 L1077.4 840 L1078.2 839.9 L1079 837.4 L1079.8 840 L1080.6 840.1 L1081.4 839.9 L1082.2 838.9 L1083 839.6 L1083.8 840.1 L1084.6 839.3 L1085.4 840 L1086.2 839.9 L1087 839.9 L1087.8 840 L1088.6 840.1 L1089.4 839.8 L1090.2 840 L1091 839.6 L1091.8 838.7 L1092.6 838.8 L1093.4 831.1 L1094.2 839 L1095 840.1 L1095.8 839.6 L1096.6 840.1 L1097.4 839.9 L1098.2 837.3 L1099 839.1 L1099.8 840.1 L1100.6 839.8 L1101.4 830.7 L1102.2 839.2 L1103 840 L1103.8 840.1 L1104.6 837.9 L1105.4 839.6 L1106.2 840.1 L1107 840 L1107.8 839.6 L1108.6 839.9 L1109.4 839.9 L1110.2 840.1 L1111 839.2 L1111.8 839.9 L1112.6 839.4 L1113.4 839.9 L1114.2 839.4 L1115 840 L1115.8 836.5 L1116.6 839.8 L1117.4 840 L1118.2 839.5 L1119 840.1 L1119.8 840 L1120.6 839.3 L1121.4 839.5 L1122.2 839.9 L1123 840 L1123.8 840.1 L1124.6 839 L1125.4 838.8 L1126.2 840.1 L1127 839.5 L1127.8 840.1 L1128.6 839.9 L1129.4 839.4 L1130.2 840 L1131 839.2 L1131.8 839.9 L1132.6 839.7 L1133.4 837.8 L1134.2 839.3 L1135 839.4 L1135.8 840 L1136.6 839.2 L1137.4 839.4 L1138.2 839.8 L1139 839.9 L1139.8 837.4 L1140.6 839.9 L1141.4 840 L1142.2 839.4 L1143 839.7 L1143.8 839.9 L1144.6 839.5 L1145.4 839.5 L1146.2 839.1 L1147 837.3 L1147.8 839.7 L1148.6 839.4 L1149.4 838.4 L1150.2 839.8 L1151 839.2 L1151.8 840.1 L1152.6 840.1 L1153.4 834.7 L1154.2 840 L1155 840 L1155.8 839.7 L1156.6 836.2 L1157.4 839.4 L1158.2 839.7 L1159 840.1 L1159.8 839.6 L1160.6 840 L1161.4 840 L1162.2 839.2 L1163 840 L1163.8 839.5 L1164.6 840.1 L1165.4 832.9 L1166.2 833 L1167 834.3 L1167.8 831.4 L1168.6 836.3 L1169.4 836.9 L1170.2 834.9 L1171 834.2 L1171.8 837 L1172.6 835.3 L1173.4 835.2 L1174.2 834.8 L1175 833.8 L1175.8 837.1 L1176.6 836.8 L1177.4 836 L1178.2 837.2 L1179 833.9 L1179.8 837 L1180.6 836.4 L1181.4 837.5 L1182.2 837 L1183 837 L1183.8 838.6 L1184.6 838.5 L1185.4 836.5 L1186.2 837.4 L1187 838.7 L1187.8 835 L1188.6 837.4 L1189.4 837.3 L1190.2 833.1 L1191 837.4 L1191.8 833.7 L1192.6 839.6 L1193.4 839.8 L1194.2 839.9 L1195 839 L1195.8 839.5 L1196.6 836.5 L1197.4 838.9 L1198.2 839.7 L1199 837.3 L1199.8 837.2 L1200.6 836.7 L1201.4 840.4 L1202.2 837.9 L1203 837.1 L1203.8 840.4 L1204.6 840.1 L1205.4 840.8 L1206.2 841.2 L1207 839.8 L1207.8 841.2 L1208.6 841 L1209.4 839.4 L1210.2 839.1 L1211 839.7 L1211.8 839.4 L1212.6 837.2 L1213.4 839.9 L1214.2 839.8 L1215 839.1 L1215.8 837.6 L1216.6 840 L1217.4 839.2 L1218.2 840.1 L1219 838.9 L1219.8 839.9 L1220.6 839.9 L1221.4 840.1 L1222.2 839.3 L1223 839.6 L1223.8 840 L1224.6 840.1 L1225.4 839.7 L1226.2 839.9 L1227 839.8 L1227.8 839.6 L1228.6 839.6 L1229.4 839.8 L1230.2 836.8 L1231 839.6 L1231.8 838.3 L1232.6 840.1 L1233.4 839.2 L1234.2 839.8 L1235 839.6 L1235.8 839.7 L1236.6 839.6 L1237.4 839.8 L1238.2 840.1 L1239 839.7 L1239.8 840 L1240.6 839.4 L1241.4 839.6 L1242.2 839.2 L1243 840.1 L1243.8 840 L1244.6 839.7 L1245.4 839.4 L1246.2 837.9 L1247 839.6 L1247.8 839.6 L1248.6 839.5 L1249.4 840.1 L1250.2 840.1 L1251 839.8 L1251.8 838.4 L1252.6 838.8 L1253.4 839.8 L1254.2 839.2 L1255 839.5 L1255.8 839.7 L1256.6 839.9 L1257.4 839.5 L1258.2 840 L1259 839.3 L1259.8 839.6 L1260.6 839.2 L1261.4 839.6 L1262.2 839.5 L1263 837.1 L1263.8 838.9 L1264.6 839.9 L1265.4 839.8 L1266.2 839.8 L1267 839.8 L1267.8 840 L1268.6 839.7 L1269.4 840 L1270.2 839 L1271 839.5 L1271.8 839.9 L1272.6 839.9 L1273.4 839 L1274.2 838.8 L1275 840 L1275.8 839.6 L1276.6 840 L1277.4 836.8 L1278.2 840.1 L1279 839.5 L1279.8 838.9 L1280.6 840 L1281.4 839 L1282.2 839.4 L1283 840.1 L1283.8 839.4 L1284.6 839.7 L1285.4 840.1 L1286.2 840.1 L1287 839.6 L1287.8 839.9 L1288.6 840.1 L1289.4 839.3 L1290.2 839.7 L1291 839.4 L1291.8 840.1 L1292.6 839.7 L1293.4 840 L1294.2 839.9 L1295 840.1 L1295.8 840 L1296.6 839.5 L1297.4 839.3 L1298.2 839.9 L1299 839.6 L1299.8 839.2 L1300.6 839.2 L1301.4 840 L1302.2 840.1 L1303 839.7 L1303.8 839.1 L1304.6 840 L1305.4 839.3 L1306.2 840.1 L1307 838.9 L1307.8 840 L1308.6 833.1 L1309.4 839.9 L1310.2 840 L1311 839.2 L1311.8 839.5 L1312.6 840.1 L1313.4 839.6 L1314.2 839.9 L1315 840 L1315.8 839.7 L1316.6 839.7 L1317.4 839.9 L1318.2 839.9 L1319 838.1 L1319.8 840 L1320.6 839.6 L1321.4 839.6 L1322.2 839.6 L1323 837.2 L1323.8 839.5 L1324.6 840.1 L1325.4 839.4 L1326.2 839.7 L1327 839.9 L1327.8 839.6 L1328.6 839.9 L1329.4 839.8 L1330.2 839.7 L1331 839.9 L1331.8 839.5 L1332.6 839.5 L1333.4 838.4 L1334.2 840.1 L1335 840 L1335.8 839.9 L1336.6 840.1 L1337.4 839.9 L1338.2 839.3 L1339 839.7 L1339.8 839.9 L1340.6 839.3 L1341.4 839.8 L1342.2 839.5 L1343 839.1 L1343.8 839.3 L1344.6 840.1 L1345.4 840.1 L1346.2 839.6 L1347 838.7 L1347.8 830.7 L1348.6 839.3 L1349.4 839.9 L1350.2 839.4 L1351 840.1 L1351.8 839.4 L1352.6 839.7 L1353.4 839.5 L1354.2 839.8 L1355 839.8 L1355.8 838.6 L1356.6 839.4 L1357.4 840 L1358.2 839.8 L1359 839.7 L1359.8 839.9 L1360.6 839.9 L1361.4 840.1 L1362.2 840.1 L1363 839.1 L1363.8 839.4 L1364.6 840.1 L1365.4 839.7 L1366.2 836.5 L1367 830.6 L1367.8 839.9 L1368.6 833.3 L1369.4 838.4 L1370.2 840 L1371 839 L1371.8 838.1 L1372.6 839.3 L1373.4 839.7 L1374.2 839.8 L1375 839.9 L1375.8 839.5 L1376.6 839.6 L1377.4 839.6 L1378.2 839.7 L1379 840.1 L1379.8 839.8 L1380.6 840.1 L1381.4 839.6 L1382.2 840 L1383 840 L1383.8 839.7 L1384.6 839.9 L1385.4 839.4 L1386.2 839.9 L1387 840.1 L1387.8 838.9 L1388.6 839.6 L1389.4 840 L1390.2 839.2 L1391 839 L1391.8 839.4 L1392.6 839.8 L1393.4 840.1 L1394.2 840.1 L1395 839.8 L1395.8 839.3 L1396.6 836.9 L1397.4 838.1 L1398.2 839.6 L1399 839.5 L1399.8 833.8 L1400.6 839.7 L1401.4 840.1 L1402.2 839.5 L1403 836.1 L1403.8 839.8 L1404.6 839.8 L1405.4 830.7 L1406.2 839.3 L1407 839.7 L1407.8 839.6 L1408.6 840.1 L1409.4 839.3 L1410.2 839.9 L1411 839.5 L1411.8 839.7 L1412.6 840 L1413.4 837.2 L1414.2 839.8 L1415 837.9 L1415.8 839.8 L1416.6 839.6 L1417.4 839.4 L1418.2 839.9 L1419 839.7 L1419.8 839.5 L1420.6 839.8 L1421.4 838.9 L1422.2 840.1 L1423 839.6 L1423.8 839.4 L1424.6 840.1 L1425.4 838.9 L1426.2 839.1 L1427 839.8 L1427.8 839.5 L1428.6 839.3 L1429.4 839.1 L1430.2 840.1 L1431 833.5 L1431.8 839.4 L1432.6 839.9 L1433.4 839.9 L1434.2 839.4 L1435 839.1 L1435.8 840.1 L1436.6 839.6 L1437.4 836.5 L1438.2 840 L1439 840.1 L1439.8 839.7 L1440.6 840.1 L1441.4 839.4 L1442.2 839.3 L1443 839.6 L1443.8 839.8 L1444.6 840.1 L1445.4 839.9 L1446.2 839.9 L1447 840 L1447.8 839.5 L1448.6 839.5 L1449.4 840.1 L1450.2 839.6 L1451 839.3 L1451.8 840.1 L1452.6 840 L1453.4 839.5 L1454.2 839.4 L1455 839.4 L1455.8 839.1 L1456.6 834.2 L1457.4 839.7 L1458.2 837 L1459 832.3 L1459.8 839.4 L1460.6 839.6 L1461.4 840.1 L1462.2 839.1 L1463 839.7 L1463.8 839.4 L1464.6 839.9 L1465.4 839.8 L1466.2 840.1 L1467 840 L1467.8 840.1 L1468.6 839.4 L1469.4 839.8 L1470.2 839.3 L1471 839.7 L1471.8 840.1 L1472.6 839.9 L1473.4 839.1 L1474.2 839.5 L1475 840.1 L1475.8 839.6 L1476.6 839.8 L1477.4 836.9 L1478.2 836.1 L1479 840 L1479.8 840 L1480.6 836.1 L1481.4 840 L1482.2 839.8 L1483 839 L1483.8 838.6 L1484.6 831.9 L1485.4 839.5 L1486.2 839.9 L1487 840 L1487.8 839.9 L1488.6 839.8 L1489.4 839.1 L1490.2 839.9 L1491 839.9 L1491.8 840 L1492.6 840 L1493.4 839.9 L1494.2 839.8 L1495 839.5 L1495.8 839.7 L1496.6 839.4 L1497.4 840 L1498.2 835.7 L1499 831.4 L1499.8 834.1 L1500.6 829.9 L1501.4 834.9 L1502.2 833.1 L1503 833.4 L1503.8 834.4 L1504.6 835.6 L1505.4 834.8 L1506.2 832.4 L1507 835.1 L1507.8 836.7 L1508.6 831.7 L1509.4 836.4 L1510.2 837.1 L1511 834 L1511.8 835.6 L1512.6 838.1 L1513.4 836.7 L1514.2 836.5 L1515 834 L1515.8 837.5 L1516.6 833.6 L1517.4 836 L1518.2 837.7 L1519 833.4 L1519.8 836.9 L1520.6 835.9 L1521.4 838.7 L1522.2 834.7 L1523 837.8 L1523.8 838 L1524.6 839.6 L1525.4 839.1 L1526.2 839.8 L1527 839.9 L1527.8 836.1 L1528.6 838 L1529.4 836.4 L1530.2 838.3 L1531 837.9 L1531.8 839.3 L1532.6 839 L1533.4 838.5 L1534.2 840.8 L1535 837.6 L1535.8 839.2 L1536.6 837.8 L1537.4 839.8 L1538.2 838 L1539 837.2 L1539.8 841.5 L1540.6 839.8 L1541.4 839.9 L1542.2 839.6 L1543 840.1 L1543.8 839.1 L1544.6 839.8 L1545.4 839.9 L1546.2 840 L1547 839.8 L1547.8 839.7 L1548.6 839.7 L1549.4 836.4 L1550.2 832.9 L1551 840.1 L1551.8 840 L1552.6 840.1 L1553.4 839.6 L1554.2 839.6 L1555 840.1 L1555.8 840.1 L1556.6 839.3 L1557.4 840 L1558.2 840.1 L1559 839 L1559.8 839.7 L1560.6 839.9 L1561.4 839.8 L1562.2 839.7 L1563 839.9 L1563.8 839.2 L1564.6 840 L1565.4 839.9 L1566.2 840.1 L1567 839.5 L1567.8 839.9 L1568.6 839.1 L1569.4 839.1 L1570.2 839.8 L1571 839.3 L1571.8 840.1 L1572.6 839.4 L1573.4 838.7 L1574.2 839.9 L1575 839.8 L1575.8 840.1 L1576.6 839.4 L1577.4 840.1 L1578.2 840.1 L1579 839.4 L1579.8 839 L1580.6 840 L1581.4 839 L1582.2 840 L1583 839.5 L1583.8 840 L1584.6 839.7 L1585.4 839.6 L1586.2 840.1 L1587 839.7 L1587.8 840.1 L1588.6 839.1 L1589.4 839.8 L1590.2 839.9 L1591 839.4 L1591.8 839.8 L1592.6 839.6 L1593.4 840 L1594.2 838.1 L1595 832 L1595.8 831.7 L1596.6 839.9 L1597.4 839.8 L1598.2 838.9 L1599 839.9 L1599.8 839.8 L1600.6 839.9 L1601.4 839.9 L1602.2 839.9 L1603 839.5 L1603.8 840 L1604.6 839.7 L1605.4 839.9 L1606.2 840.1 L1607 839.7 L1607.8 839.9 L1608.6 839.8 L1609.4 839.7 L1610.2 837.5 L1611 839.4 L1611.8 839.6 L1612.6 839.3 L1613.4 839.3 L1614.2 839.9 L1615 839.9 L1615.8 838.8 L1616.6 839.6 L1617.4 836.8 L1618.2 839.1 L1619 838.2 L1619.8 837 L1620.6 839.7 L1621.4 840 L1622.2 839.9 L1623 840 L1623.8 837 L1624.6 839.4 L1625.4 840 L1626.2 839.2 L1627 839.9 L1627.8 839.5 L1628.6 839.9 L1629.4 839 L1630.2 840 L1631 839.4 L1631.8 839.6 L1632.6 839.9 L1633.4 840.1 L1634.2 839.7 L1635 838.8 L1635.8 839.6 L1636.6 839.3 L1637.4 834.6 L1638.2 840 L1639 837.2 L1639.8 840 L1640.6 839.6 L1641.4 839.4 L1642.2 838.8 L1643 839.6 L1643.8 840 L1644.6 838.5 L1645.4 839.6 L1646.2 839.6 L1647 839.9 L1647.8 838.7 L1648.6 839.7 L1649.4 839.8 L1650.2 840 L1651 834 L1651.8 838.9 L1652.6 839.6 L1653.4 839.9 L1654.2 839.9 L1655 839.8 L1655.8 839.5 L1656.6 839.7 L1657.4 840 L1658.2 840.1 L1659 840.1 L1659.8 839.8 L1660.6 839.6 L1661.4 839.7 L1662.2 840.1 L1663 839.7 L1663.8 840 L1664.6 839.6 L1665.4 840 L1666.2 840 L1667 840.1 L1667.8 839.5 L1668.6 839.9 L1669.4 839.7 L1670.2 839.4 L1671 839.5 L1671.8 838.5 L1672.6 838.7 L1673.4 833.4 L1674.2 840.1 L1675 839.5 L1675.8 840 L1676.6 839.5 L1677.4 840 L1678.2 839.4 L1679 840.1 L1679.8 840.1 L1680.6 840.1 L1681.4 840.1 L1682.2 837.3 L1683 840 L1683.8 839.7 L1684.6 839.9 L1685.4 840.1 L1686.2 839.7 L1687 839.1 L1687.8 840 L1688.6 839.7 L1689.4 839.3 L1690.2 839.7 L1691 839.3 L1691.8 838.9 L1692.6 839.5 L1693.4 839.3 L1694.2 834.2 L1695 838.5 L1695.8 839.2 L1696.6 837.4 L1697.4 839.6 L1698.2 840.1 L1699 839.3 L1699.8 839.1 L1700.6 840.1 L1701.4 839.7 L1702.2 839.9 L1703 839.7 L1703.8 839.3 L1704.6 839.8 L1705.4 838.9 L1706.2 837 L1707 840.1 L1707.8 840 L1708.6 839.9 L1709.4 839.9 L1710.2 839 L1711 839.4 L1711.8 840 L1712.6 839.6 L1713.4 839.6 L1714.2 839.4 L1715 836.4 L1715.8 840 L1716.6 839.8 L1717.4 840.1 L1718.2 840.1 L1719 839.5 L1719.8 839.5 L1720.6 840 L1721.4 839.7 L1722.2 840 L1723 839.9 L1723.8 839.9 L1724.6 837.5 L1725.4 839.6 L1726.2 839.3 L1727 839.6 L1727.8 839.8 L1728.6 839.7 L1729.4 839.7 L1730.2 840 L1731 839.7 L1731.8 839.9 L1732.6 840 L1733.4 839.9 L1734.2 840.1 L1735 840 L1735.8 839.9 L1736.6 840.1 L1737.4 840 L1738.2 839.9 L1739 839.9 L1739.8 839.9 L1740.6 838.5 L1741.4 836.3 L1742.2 840 L1743 839.9 L1743.8 839.6 L1744.6 840.1 L1745.4 839.7 L1746.2 840.1 L1747 839.7 L1747.8 839.2 L1748.6 839.4 L1749.4 839.9 L1750.2 840.1 L1751 839.9 L1751.8 839.9 L1752.6 836 L1753.4 839.6 L1754.2 840.1 L1755 840 L1755.8 839.7 L1756.6 839.1 L1757.4 837.9 L1758.2 836.3 L1759 839.9 L1759.8 839.9 L1760.6 836.7 L1761.4 839.8 L1762.2 839.9 L1763 839.5 L1763.8 839.6 L1764.6 839.9 L1765.4 840 L1766.2 839.8 L1767 840 L1767.8 836.3 L1768.6 835.7 L1769.4 839.6 L1770.2 840 L1771 840.1 L1771.8 840 L1772.6 840 L1773.4 839.6 L1774.2 839.4 L1775 840.1 L1775.8 840 L1776.6 840 L1777.4 839.8 L1778.2 839.4 L1779 831.6 L1779.8 839.1 L1780.6 839.8 L1781.4 840 L1782.2 839.8 L1783 839.9 L1783.8 840.1 L1784.6 839.9 L1785.4 836.7 L1786.2 835.3 L1787 840.1 L1787.8 838.7 L1788.6 835.7 L1789.4 839.9 L1790.2 838 L1791 839.5 L1791.8 839.5 L1792.6 839.8 L1793.4 840 L1794.2 839.7 L1795 839.2 L1795.8 836.8 L1796.6 840 L1797.4 840.1 L1798.2 840 L1799 840 L1799.8 837 L1800.6 839.9 L1801.4 839.9 L1802.2 836.7 L1803 840.1 L1803.8 836.2 L1804.6 839.7 L1805.4 839.7 L1806.2 840.1 L1807 837.8 L1807.8 840.1 L1808.6 839.6 L1809.4 840.1 L1810.2 839.3 L1811 839.9 L1811.8 839.2 L1812.6 840 L1813.4 839.7 L1814.2 839.5 L1815 840 L1815.8 839.8 L1816.6 839.5 L1817.4 840 L1818.2 839.9 L1819 834.5 L1819.8 840.1 L1820.6 831.1 L1821.4 840 L1822.2 839.1 L1823 839.3 L1823.8 840 L1824.6 840 L1825.4 839.7 L1826.2 830.8 L1827 836.1 L1827.8 829.8 L1828.6 837 L1829.4 833.8 L1830.2 836.4 L1831 833.4 L1831.8 836.5 L1832.6 836.1 L1833.4 837.6 L1834.2 832.6 L1835 837.1 L1835.8 839.1 L1836.6 837.9 L1837.4 839.2 L1838.2 838.9 L1839 838.8 L1839.8 840.6 L1840.6 840.1 L1841.4 839.2 L1842.2 841.1 L1842.2 845.3 L1841.4 845.2 L1840.6 846.1 L1839.8 845.2 L1839 845.1 L1838.2 844.3 L1837.4 846 L1836.6 847.6 L1835.8 848.5 L1835 844 L1834.2 844.2 L1833.4 846.2 L1832.6 845.6 L1831.8 847.9 L1831 846.5 L1830.2 846.6 L1829.4 847.9 L1828.6 848.1 L1827.8 845.8 L1827 844.9 L1826.2 843.9 L1825.4 843.5 L1824.6 843.2 L1823.8 843.2 L1823 843.3 L1822.2 842.5 L1821.4 842.6 L1820.6 844.8 L1819.8 843.6 L1819 845.1 L1818.2 842.7 L1817.4 845.9 L1816.6 843.4 L1815.8 843.6 L1815 842.6 L1814.2 842.9 L1813.4 842.9 L1812.6 842.7 L1811.8 843 L1811 842.8 L1810.2 842.7 L1809.4 843.2 L1808.6 842.8 L1807.8 842.6 L1807 849.6 L1806.2 842.7 L1805.4 842.7 L1804.6 843.3 L1803.8 842.8 L1803 842.5 L1802.2 843.1 L1801.4 842.5 L1800.6 842.5 L1799.8 842.6 L1799 842.6 L1798.2 842.7 L1797.4 842.5 L1796.6 842.7 L1795.8 851.6 L1795 842.5 L1794.2 843.1 L1793.4 842.8 L1792.6 842.8 L1791.8 843.1 L1791 842.5 L1790.2 849.2 L1789.4 842.5 L1788.6 843 L1787.8 842.5 L1787 842.7 L1786.2 842.6 L1785.4 842.7 L1784.6 842.9 L1783.8 842.9 L1783 842.6 L1782.2 842.6 L1781.4 842.9 L1780.6 842.5 L1779.8 843 L1779 846.3 L1778.2 842.9 L1777.4 842.6 L1776.6 843.2 L1775.8 842.6 L1775 843.2 L1774.2 843.6 L1773.4 842.9 L1772.6 842.5 L1771.8 842.7 L1771 843.4 L1770.2 842.6 L1769.4 842.6 L1768.6 842.9 L1767.8 842.5 L1767 843.1 L1766.2 843.1 L1765.4 842.5 L1764.6 842.8 L1763.8 842.5 L1763 843.2 L1762.2 843 L1761.4 842.6 L1760.6 843.1 L1759.8 842.8 L1759 844.7 L1758.2 842.7 L1757.4 843 L1756.6 842.8 L1755.8 842.6 L1755 842.5 L1754.2 842.9 L1753.4 845.5 L1752.6 843.5 L1751.8 843.5 L1751 843.1 L1750.2 842.6 L1749.4 842.9 L1748.6 843.6 L1747.8 842.8 L1747 843.5 L1746.2 842.9 L1745.4 842.9 L1744.6 842.8 L1743.8 842.5 L1743 842.5 L1742.2 842.8 L1741.4 842.7 L1740.6 842.8 L1739.8 842.5 L1739 842.8 L1738.2 842.8 L1737.4 843 L1736.6 842.5 L1735.8 843 L1735 843.1 L1734.2 842.8 L1733.4 842.6 L1732.6 843.1 L1731.8 842.9 L1731 842.7 L1730.2 842.7 L1729.4 844.8 L1728.6 843.1 L1727.8 842.5 L1727 849.3 L1726.2 842.6 L1725.4 842.5 L1724.6 842.9 L1723.8 842.7 L1723 843.2 L1722.2 843.1 L1721.4 842.9 L1720.6 842.7 L1719.8 842.9 L1719 842.6 L1718.2 843.3 L1717.4 843.3 L1716.6 842.7 L1715.8 842.6 L1715 842.7 L1714.2 843.5 L1713.4 842.5 L1712.6 843.7 L1711.8 842.9 L1711 842.6 L1710.2 843.5 L1709.4 843.2 L1708.6 843.3 L1707.8 843.4 L1707 842.9 L1706.2 843.3 L1705.4 842.8 L1704.6 843.4 L1703.8 842.8 L1703 845.9 L1702.2 843 L1701.4 842.5 L1700.6 843.1 L1699.8 842.5 L1699 842.8 L1698.2 843.6 L1697.4 843.1 L1696.6 842.7 L1695.8 842.5 L1695 843.5 L1694.2 843.4 L1693.4 842.9 L1692.6 843.5 L1691.8 842.5 L1691 843.5 L1690.2 842.9 L1689.4 843 L1688.6 843.1 L1687.8 843 L1687 842.9 L1686.2 842.7 L1685.4 842.6 L1684.6 843.5 L1683.8 845.5 L1683 842.5 L1682.2 843 L1681.4 842.5 L1680.6 843 L1679.8 845.2 L1679 842.7 L1678.2 842.8 L1677.4 842.5 L1676.6 842.8 L1675.8 845.5 L1675 842.9 L1674.2 843.1 L1673.4 844 L1672.6 842.5 L1671.8 843.6 L1671 842.5 L1670.2 842.6 L1669.4 842.9 L1668.6 843 L1667.8 842.8 L1667 842.5 L1666.2 842.6 L1665.4 842.5 L1664.6 842.9 L1663.8 842.6 L1663 842.5 L1662.2 842.7 L1661.4 843.3 L1660.6 842.6 L1659.8 842.7 L1659 842.6 L1658.2 843.4 L1657.4 842.7 L1656.6 842.9 L1655.8 843.1 L1655 845.2 L1654.2 842.7 L1653.4 843.1 L1652.6 842.6 L1651.8 843.2 L1651 843.9 L1650.2 843 L1649.4 843.2 L1648.6 843.1 L1647.8 842.9 L1647 842.9 L1646.2 842.8 L1645.4 842.5 L1644.6 842.9 L1643.8 842.8 L1643 842.6 L1642.2 843.1 L1641.4 843.7 L1640.6 842.9 L1639.8 842.5 L1639 842.5 L1638.2 842.8 L1637.4 844.3 L1636.6 843 L1635.8 842.7 L1635 842.8 L1634.2 844.4 L1633.4 843.6 L1632.6 842.8 L1631.8 842.7 L1631 843 L1630.2 843.7 L1629.4 842.8 L1628.6 843.6 L1627.8 842.7 L1627 842.5 L1626.2 842.9 L1625.4 842.6 L1624.6 844.3 L1623.8 842.9 L1623 842.8 L1622.2 843.6 L1621.4 843.3 L1620.6 842.8 L1619.8 842.6 L1619 849.8 L1618.2 849.9 L1617.4 842.8 L1616.6 842.5 L1615.8 842.6 L1615 843.4 L1614.2 842.6 L1613.4 843 L1612.6 843.2 L1611.8 842.9 L1611 842.7 L1610.2 842.5 L1609.4 842.7 L1608.6 842.6 L1607.8 843.7 L1607 842.6 L1606.2 842.7 L1605.4 842.6 L1604.6 843.3 L1603.8 842.9 L1603 842.5 L1602.2 842.9 L1601.4 842.6 L1600.6 843.6 L1599.8 842.7 L1599 843 L1598.2 842.7 L1597.4 843 L1596.6 842.7 L1595.8 843.4 L1595 844.8 L1594.2 851.6 L1593.4 843.2 L1592.6 842.6 L1591.8 844.5 L1591 843.2 L1590.2 842.5 L1589.4 843.7 L1588.6 842.6 L1587.8 843.1 L1587 842.8 L1586.2 848.4 L1585.4 842.5 L1584.6 842.8 L1583.8 842.8 L1583 843 L1582.2 843.3 L1581.4 842.8 L1580.6 842.7 L1579.8 850.3 L1579 843 L1578.2 844.9 L1577.4 842.9 L1576.6 846.6 L1575.8 843.3 L1575 842.6 L1574.2 842.5 L1573.4 843.1 L1572.6 842.5 L1571.8 843.1 L1571 842.7 L1570.2 842.9 L1569.4 842.7 L1568.6 842.7 L1567.8 842.6 L1567 842.5 L1566.2 842.5 L1565.4 842.6 L1564.6 843.2 L1563.8 842.9 L1563 842.8 L1562.2 842.5 L1561.4 842.8 L1560.6 843 L1559.8 842.8 L1559 842.7 L1558.2 842.9 L1557.4 842.6 L1556.6 842.5 L1555.8 843.1 L1555 842.6 L1554.2 843.6 L1553.4 842.8 L1552.6 843.3 L1551.8 842.9 L1551 842.9 L1550.2 843.8 L1549.4 851.9 L1548.6 842.9 L1547.8 845.7 L1547 843.2 L1546.2 843.1 L1545.4 847.5 L1544.6 842.6 L1543.8 848.1 L1543 842.8 L1542.2 842.6 L1541.4 843.3 L1540.6 843.3 L1539.8 849.2 L1539 848.6 L1538.2 845.4 L1537.4 847.3 L1536.6 845.1 L1535.8 845.1 L1535 844.7 L1534.2 845.7 L1533.4 844.6 L1532.6 847.3 L1531.8 847.5 L1531 844.4 L1530.2 844.7 L1529.4 846.1 L1528.6 846.5 L1527.8 846.5 L1527 844.5 L1526.2 848.4 L1525.4 845.7 L1524.6 844.4 L1523.8 845 L1523 844.8 L1522.2 849.3 L1521.4 847.2 L1520.6 844 L1519.8 844.1 L1519 843.4 L1518.2 843.5 L1517.4 843.8 L1516.6 843.6 L1515.8 843.8 L1515 846.7 L1514.2 844.6 L1513.4 844.1 L1512.6 843.4 L1511.8 844.6 L1511 846.2 L1510.2 842.7 L1509.4 845.3 L1508.6 844.3 L1507.8 845.2 L1507 847.5 L1506.2 842.6 L1505.4 842.7 L1504.6 847.1 L1503.8 845.6 L1503 846.6 L1502.2 843.8 L1501.4 847.4 L1500.6 844.2 L1499.8 843 L1499 847.6 L1498.2 848.7 L1497.4 842.8 L1496.6 843.3 L1495.8 842.5 L1495 843.5 L1494.2 843 L1493.4 842.8 L1492.6 842.7 L1491.8 842.6 L1491 843 L1490.2 842.5 L1489.4 842.8 L1488.6 842.7 L1487.8 842.6 L1487 843 L1486.2 842.5 L1485.4 850.2 L1484.6 844.2 L1483.8 845.3 L1483 842.7 L1482.2 842.5 L1481.4 843.1 L1480.6 842.7 L1479.8 843.3 L1479 842.9 L1478.2 842.7 L1477.4 848.8 L1476.6 842.8 L1475.8 843 L1475 842.6 L1474.2 842.9 L1473.4 845.8 L1472.6 842.7 L1471.8 843 L1471 842.6 L1470.2 842.8 L1469.4 843 L1468.6 842.9 L1467.8 842.9 L1467 844.8 L1466.2 842.5 L1465.4 843.4 L1464.6 845.1 L1463.8 842.9 L1463 842.8 L1462.2 846.3 L1461.4 842.9 L1460.6 842.6 L1459.8 843.2 L1459 845.8 L1458.2 842.7 L1457.4 842.8 L1456.6 844.1 L1455.8 843 L1455 842.6 L1454.2 843.1 L1453.4 842.6 L1452.6 843.6 L1451.8 843.3 L1451 842.8 L1450.2 843.2 L1449.4 843.3 L1448.6 842.9 L1447.8 842.6 L1447 842.5 L1446.2 842.9 L1445.4 843 L1444.6 843.4 L1443.8 842.8 L1443 842.8 L1442.2 844.9 L1441.4 844.3 L1440.6 843.1 L1439.8 842.7 L1439 842.8 L1438.2 844.7 L1437.4 842.5 L1436.6 842.7 L1435.8 842.9 L1435 842.6 L1434.2 842.7 L1433.4 842.7 L1432.6 842.6 L1431.8 843 L1431 844.5 L1430.2 842.7 L1429.4 842.6 L1428.6 843.8 L1427.8 843.5 L1427 843.3 L1426.2 844.8 L1425.4 842.6 L1424.6 843 L1423.8 843.1 L1423 843 L1422.2 845.2 L1421.4 843 L1420.6 843.5 L1419.8 842.5 L1419 843.7 L1418.2 842.6 L1417.4 847 L1416.6 843.2 L1415.8 845.9 L1415 849.4 L1414.2 842.9 L1413.4 842.7 L1412.6 846.5 L1411.8 842.7 L1411 842.5 L1410.2 843.5 L1409.4 842.9 L1408.6 842.6 L1407.8 842.6 L1407 842.8 L1406.2 842.6 L1405.4 844.1 L1404.6 842.9 L1403.8 842.9 L1403 850.5 L1402.2 842.9 L1401.4 842.6 L1400.6 843.2 L1399.8 844 L1399 842.5 L1398.2 842.6 L1397.4 842.7 L1396.6 843.3 L1395.8 842.8 L1395 842.6 L1394.2 842.5 L1393.4 843.1 L1392.6 843.2 L1391.8 842.6 L1391 842.6 L1390.2 842.6 L1389.4 842.6 L1388.6 845.4 L1387.8 842.8 L1387 842.9 L1386.2 843.3 L1385.4 842.7 L1384.6 842.8 L1383.8 842.7 L1383 843 L1382.2 843 L1381.4 843.5 L1380.6 842.8 L1379.8 843.2 L1379 842.7 L1378.2 842.5 L1377.4 843.2 L1376.6 842.7 L1375.8 843.7 L1375 842.8 L1374.2 843 L1373.4 843 L1372.6 843.3 L1371.8 842.9 L1371 843 L1370.2 842.6 L1369.4 847.3 L1368.6 844.5 L1367.8 842.5 L1367 844 L1366.2 842.9 L1365.4 842.8 L1364.6 842.5 L1363.8 842.9 L1363 842.7 L1362.2 843.4 L1361.4 843.4 L1360.6 843.1 L1359.8 845.1 L1359 843.1 L1358.2 842.5 L1357.4 843.6 L1356.6 842.7 L1355.8 843.1 L1355 842.9 L1354.2 842.9 L1353.4 843 L1352.6 842.8 L1351.8 842.6 L1351 842.5 L1350.2 842.5 L1349.4 842.9 L1348.6 842.8 L1347.8 845.1 L1347 842.9 L1346.2 842.5 L1345.4 842.8 L1344.6 846.7 L1343.8 842.5 L1343 842.9 L1342.2 842.6 L1341.4 842.9 L1340.6 842.8 L1339.8 842.9 L1339 843.3 L1338.2 842.5 L1337.4 843.1 L1336.6 843.1 L1335.8 842.5 L1335 843.3 L1334.2 842.5 L1333.4 842.5 L1332.6 842.5 L1331.8 842.6 L1331 843.4 L1330.2 843.8 L1329.4 842.9 L1328.6 844 L1327.8 842.7 L1327 842.7 L1326.2 843.3 L1325.4 842.5 L1324.6 842.5 L1323.8 846.1 L1323 851.6 L1322.2 843 L1321.4 842.5 L1320.6 843.1 L1319.8 842.7 L1319 843.5 L1318.2 843 L1317.4 842.5 L1316.6 842.7 L1315.8 842.6 L1315 842.6 L1314.2 842.7 L1313.4 842.7 L1312.6 842.5 L1311.8 843.3 L1311 842.5 L1310.2 842.6 L1309.4 843.1 L1308.6 845 L1307.8 842.5 L1307 843.3 L1306.2 845.5 L1305.4 843.7 L1304.6 843 L1303.8 842.6 L1303 842.8 L1302.2 843 L1301.4 842.9 L1300.6 845.4 L1299.8 842.6 L1299 843.6 L1298.2 842.6 L1297.4 843.5 L1296.6 842.5 L1295.8 842.6 L1295 844.7 L1294.2 845.4 L1293.4 843 L1292.6 845.6 L1291.8 843 L1291 843.4 L1290.2 843.3 L1289.4 844 L1288.6 846 L1287.8 843.6 L1287 842.6 L1286.2 843.5 L1285.4 843.6 L1284.6 842.9 L1283.8 842.9 L1283 843.2 L1282.2 843.6 L1281.4 842.9 L1280.6 842.7 L1279.8 843.3 L1279 843.7 L1278.2 843 L1277.4 843.6 L1276.6 843.1 L1275.8 843 L1275 842.9 L1274.2 842.7 L1273.4 843 L1272.6 842.6 L1271.8 842.7 L1271 842.6 L1270.2 843.4 L1269.4 842.7 L1268.6 842.5 L1267.8 842.9 L1267 842.5 L1266.2 842.5 L1265.4 842.5 L1264.6 842.5 L1263.8 842.8 L1263 842.7 L1262.2 842.5 L1261.4 843.3 L1260.6 844 L1259.8 844.9 L1259 842.5 L1258.2 843.2 L1257.4 842.7 L1256.6 842.7 L1255.8 844.8 L1255 843 L1254.2 842.5 L1253.4 842.6 L1252.6 842.8 L1251.8 842.6 L1251 842.9 L1250.2 842.6 L1249.4 843.2 L1248.6 843 L1247.8 842.9 L1247 843.5 L1246.2 842.8 L1245.4 842.7 L1244.6 842.5 L1243.8 842.8 L1243 845.6 L1242.2 842.7 L1241.4 842.7 L1240.6 842.7 L1239.8 842.6 L1239 848.4 L1238.2 842.8 L1237.4 843.3 L1236.6 842.8 L1235.8 842.8 L1235 842.5 L1234.2 842.7 L1233.4 843.6 L1232.6 842.7 L1231.8 846.9 L1231 842.8 L1230.2 842.5 L1229.4 842.8 L1228.6 844.3 L1227.8 842.6 L1227 843.7 L1226.2 842.8 L1225.4 842.6 L1224.6 842.7 L1223.8 842.6 L1223 842.7 L1222.2 846 L1221.4 843.2 L1220.6 842.8 L1219.8 845.9 L1219 843.8 L1218.2 843.2 L1217.4 843.1 L1216.6 842.7 L1215.8 852.3 L1215 845.5 L1214.2 843.3 L1213.4 842.9 L1212.6 843.1 L1211.8 842.8 L1211 843 L1210.2 842.5 L1209.4 842.7 L1208.6 846.2 L1207.8 848.2 L1207 845.2 L1206.2 845.4 L1205.4 845.9 L1204.6 848.8 L1203.8 846.3 L1203 844.7 L1202.2 846.6 L1201.4 845 L1200.6 845.5 L1199.8 846.7 L1199 847.1 L1198.2 845.3 L1197.4 850.3 L1196.6 846.1 L1195.8 845.4 L1195 844.3 L1194.2 844.6 L1193.4 845.4 L1192.6 848.3 L1191.8 846.9 L1191 846.3 L1190.2 846.9 L1189.4 844.2 L1188.6 846.2 L1187.8 848.8 L1187 847.4 L1186.2 844.8 L1185.4 847 L1184.6 843.7 L1183.8 847.2 L1183 845.4 L1182.2 843.2 L1181.4 844.4 L1180.6 842.9 L1179.8 845.2 L1179 845.2 L1178.2 848.7 L1177.4 845.2 L1176.6 845.4 L1175.8 844 L1175 846.1 L1174.2 843.1 L1173.4 845.9 L1172.6 848.8 L1171.8 845.1 L1171 852.4 L1170.2 844.9 L1169.4 844.7 L1168.6 843.4 L1167.8 842.4 L1167 847.9 L1166.2 842.7 L1165.4 843.8 L1164.6 842.8 L1163.8 842.5 L1163 843.1 L1162.2 842.5 L1161.4 843.1 L1160.6 842.6 L1159.8 843 L1159 843.1 L1158.2 843.1 L1157.4 844.7 L1156.6 842.7 L1155.8 843.1 L1155 842.6 L1154.2 842.6 L1153.4 842.8 L1152.6 842.5 L1151.8 842.6 L1151 843.6 L1150.2 842.8 L1149.4 847.5 L1148.6 842.6 L1147.8 842.8 L1147 843.3 L1146.2 845.5 L1145.4 844 L1144.6 843.4 L1143.8 843 L1143 842.5 L1142.2 842.5 L1141.4 842.9 L1140.6 842.6 L1139.8 842.5 L1139 842.6 L1138.2 842.8 L1137.4 842.9 L1136.6 842.9 L1135.8 842.9 L1135 842.7 L1134.2 843.1 L1133.4 842.7 L1132.6 842.9 L1131.8 842.8 L1131 842.7 L1130.2 845.2 L1129.4 845.4 L1128.6 843.2 L1127.8 843.5 L1127 842.5 L1126.2 843.3 L1125.4 842.5 L1124.6 842.7 L1123.8 843.4 L1123 842.6 L1122.2 843.3 L1121.4 846.4 L1120.6 842.5 L1119.8 842.6 L1119 842.5 L1118.2 843.1 L1117.4 843.6 L1116.6 842.7 L1115.8 842.6 L1115 842.9 L1114.2 842.5 L1113.4 842.8 L1112.6 842.9 L1111.8 842.7 L1111 843 L1110.2 843.2 L1109.4 843.2 L1108.6 842.9 L1107.8 842.9 L1107 842.7 L1106.2 843.1 L1105.4 842.8 L1104.6 843.2 L1103.8 842.6 L1103 842.5 L1102.2 843.7 L1101.4 844 L1100.6 842.8 L1099.8 843.4 L1099 842.7 L1098.2 843.4 L1097.4 842.7 L1096.6 843.2 L1095.8 842.8 L1095 846 L1094.2 848.8 L1093.4 842.8 L1092.6 842.8 L1091.8 842.6 L1091 843.1 L1090.2 843.1 L1089.4 842.9 L1088.6 843 L1087.8 842.9 L1087 843 L1086.2 842.7 L1085.4 845.5 L1084.6 842.9 L1083.8 842.7 L1083 842.6 L1082.2 842.9 L1081.4 843 L1080.6 842.7 L1079.8 842.6 L1079 842.5 L1078.2 843.2 L1077.4 843 L1076.6 843.2 L1075.8 842.7 L1075 842.7 L1074.2 843.1 L1073.4 843.3 L1072.6 843 L1071.8 842.8 L1071 842.8 L1070.2 842.5 L1069.4 842.6 L1068.6 843 L1067.8 843.1 L1067 843.1 L1066.2 842.6 L1065.4 843 L1064.6 843.6 L1063.8 842.7 L1063 842.5 L1062.2 842.9 L1061.4 842.9 L1060.6 842.6 L1059.8 843.4 L1059 842.8 L1058.2 845.3 L1057.4 842.8 L1056.6 843.1 L1055.8 843 L1055 843.1 L1054.2 843 L1053.4 844.6 L1052.6 842.8 L1051.8 846 L1051 842.8 L1050.2 846.4 L1049.4 842.7 L1048.6 843 L1047.8 843.2 L1047 850.6 L1046.2 843.5 L1045.4 844.2 L1044.6 843.2 L1043.8 843 L1043 842.9 L1042.2 843.1 L1041.4 842.7 L1040.6 842.7 L1039.8 845.1 L1039 842.8 L1038.2 843 L1037.4 842.8 L1036.6 845.8 L1035.8 849.3 L1035 842.6 L1034.2 842.9 L1033.4 843.1 L1032.6 843.1 L1031.8 844.1 L1031 843.4 L1030.2 842.8 L1029.4 843.3 L1028.6 842.7 L1027.8 842.7 L1027 842.8 L1026.2 842.6 L1025.4 842.7 L1024.6 842.6 L1023.8 846.2 L1023 842.9 L1022.2 842.9 L1021.4 842.6 L1020.6 842.5 L1019.8 843 L1019 845.5 L1018.2 842.5 L1017.4 843.5 L1016.6 842.8 L1015.8 843.1 L1015 842.6 L1014.2 843 L1013.4 842.6 L1012.6 842.8 L1011.8 843 L1011 843 L1010.2 843.4 L1009.4 842.7 L1008.6 846.5 L1007.8 842.5 L1007 842.7 L1006.2 842.8 L1005.4 842.5 L1004.6 842.9 L1003.8 842.6 L1003 842.8 L1002.2 843.4 L1001.4 842.6 L1000.6 843 L999.8 842.9 L999 843 L998.2 842.5 L997.4 842.5 L996.6 842.7 L995.8 846.7 L995 842.7 L994.2 842.7 L993.4 843.2 L992.6 845.4 L991.8 842.7 L991 842.8 L990.2 843 L989.4 843.2 L988.6 846.3 L987.8 842.6 L987 842.9 L986.2 842.5 L985.4 842.6 L984.6 843.2 L983.8 842.5 L983 843.1 L982.2 842.8 L981.4 843 L980.6 842.6 L979.8 842.6 L979 848.8 L978.2 843.1 L977.4 842.6 L976.6 843.5 L975.8 843.1 L975 842.5 L974.2 842.8 L973.4 843 L972.6 842.5 L971.8 843 L971 842.7 L970.2 842.7 L969.4 842.9 L968.6 842.6 L967.8 843.1 L967 842.6 L966.2 845.2 L965.4 845.8 L964.6 847 L963.8 842.5 L963 845.7 L962.2 842.8 L961.4 843.1 L960.6 842.7 L959.8 844.8 L959 843.4 L958.2 842.9 L957.4 842.6 L956.6 842.5 L955.8 842.6 L955 842.6 L954.2 843 L953.4 842.5 L952.6 842.8 L951.8 845.5 L951 842.9 L950.2 843.4 L949.4 843.2 L948.6 843.4 L947.8 843.1 L947 842.8 L946.2 844.2 L945.4 843.5 L944.6 843.1 L943.8 842.7 L943 843 L942.2 843 L941.4 843.1 L940.6 843 L939.8 843.4 L939 842.7 L938.2 844.6 L937.4 842.7 L936.6 842.7 L935.8 843 L935 842.6 L934.2 842.8 L933.4 843 L932.6 843.1 L931.8 843.4 L931 843.5 L930.2 843.3 L929.4 842.5 L928.6 842.5 L927.8 842.5 L927 843 L926.2 842.5 L925.4 842.5 L924.6 842.5 L923.8 842.9 L923 844.1 L922.2 842.5 L921.4 842.8 L920.6 842.7 L919.8 842.6 L919 843.2 L918.2 842.5 L917.4 842.8 L916.6 843.6 L915.8 843.2 L915 842.6 L914.2 844.6 L913.4 842.6 L912.6 844.8 L911.8 842.8 L911 843 L910.2 844.5 L909.4 842.8 L908.6 842.6 L907.8 843.4 L907 842.8 L906.2 843.3 L905.4 844.4 L904.6 843 L903.8 842.6 L903 842.6 L902.2 842.5 L901.4 845.2 L900.6 842.5 L899.8 843 L899 842.5 L898.2 843 L897.4 842.7 L896.6 842.6 L895.8 846.9 L895 842.8 L894.2 842.6 L893.4 842.5 L892.6 842.6 L891.8 843.3 L891 842.7 L890.2 843.1 L889.4 842.7 L888.6 842.7 L887.8 842.5 L887 845.9 L886.2 847.7 L885.4 846 L884.6 848.1 L883.8 846.7 L883 845.1 L882.2 844.7 L881.4 850.1 L880.6 845.4 L879.8 850.1 L879 846.4 L878.2 846.2 L877.4 846.9 L876.6 844.5 L875.8 847.1 L875 846.1 L874.2 844.1 L873.4 845.4 L872.6 848.7 L871.8 846.4 L871 846.4 L870.2 843.9 L869.4 848 L868.6 848.2 L867.8 844.1 L867 843.6 L866.2 844.1 L865.4 844.1 L864.6 843.5 L863.8 844.7 L863 845.1 L862.2 846.5 L861.4 844.1 L860.6 844.4 L859.8 845.1 L859 843.1 L858.2 844.2 L857.4 844.9 L856.6 845.8 L855.8 845.9 L855 843 L854.2 844.7 L853.4 845 L852.6 842.5 L851.8 842.8 L851 845.4 L850.2 846.1 L849.4 847.8 L848.6 842.7 L847.8 842.2 L847 842.2 L846.2 841.9 L845.4 843.2 L844.6 842.6 L843.8 842.9 L843 842.8 L842.2 842.5 L841.4 842.9 L840.6 842.8 L839.8 843.5 L839 843 L838.2 843.1 L837.4 843.1 L836.6 842.7 L835.8 846.2 L835 842.7 L834.2 842.9 L833.4 842.5 L832.6 842.5 L831.8 842.7 L831 842.7 L830.2 843.2 L829.4 842.5 L828.6 846.1 L827.8 843.4 L827 842.5 L826.2 843 L825.4 843.4 L824.6 846.3 L823.8 842.8 L823 843.3 L822.2 843.1 L821.4 842.7 L820.6 843 L819.8 842.6 L819 843.1 L818.2 843.3 L817.4 843 L816.6 846 L815.8 843 L815 842.6 L814.2 842.7 L813.4 842.7 L812.6 842.8 L811.8 844 L811 842.6 L810.2 843.7 L809.4 842.7 L808.6 843.1 L807.8 844 L807 842.5 L806.2 843.2 L805.4 842.7 L804.6 842.6 L803.8 843.1 L803 843.3 L802.2 843.1 L801.4 842.7 L800.6 842.6 L799.8 843.6 L799 842.9 L798.2 842.6 L797.4 842.7 L796.6 842.8 L795.8 842.7 L795 846.8 L794.2 842.5 L793.4 843.7 L792.6 848.4 L791.8 846.4 L791 842.7 L790.2 843.3 L789.4 843.1 L788.6 843.3 L787.8 842.5 L787 843 L786.2 842.8 L785.4 842.8 L784.6 842.5 L783.8 843.2 L783 843.1 L782.2 842.8 L781.4 842.6 L780.6 842.5 L779.8 842.7 L779 843.6 L778.2 843.1 L777.4 843 L776.6 843.6 L775.8 842.9 L775 846.3 L774.2 843.2 L773.4 843.5 L772.6 846.1 L771.8 842.7 L771 842.7 L770.2 843.4 L769.4 842.7 L768.6 842.6 L767.8 845.4 L767 843.5 L766.2 842.7 L765.4 845.3 L764.6 842.7 L763.8 843.6 L763 842.5 L762.2 842.7 L761.4 842.5 L760.6 843.1 L759.8 842.9 L759 842.8 L758.2 842.9 L757.4 842.6 L756.6 842.7 L755.8 843.4 L755 842.7 L754.2 842.9 L753.4 842.6 L752.6 842.7 L751.8 844.8 L751 843.5 L750.2 843.2 L749.4 842.9 L748.6 843.1 L747.8 842.6 L747 843.1 L746.2 842.8 L745.4 843 L744.6 843.3 L743.8 842.9 L743 844 L742.2 842.8 L741.4 842.5 L740.6 843 L739.8 842.7 L739 842.6 L738.2 842.8 L737.4 842.7 L736.6 842.8 L735.8 842.9 L735 844.6 L734.2 845.6 L733.4 843.6 L732.6 842.8 L731.8 842.7 L731 842.7 L730.2 843.7 L729.4 842.9 L728.6 843.3 L727.8 843.2 L727 847.4 L726.2 846.3 L725.4 842.7 L724.6 843.4 L723.8 842.8 L723 842.6 L722.2 842.6 L721.4 842.5 L720.6 842.7 L719.8 842.5 L719 842.8 L718.2 842.7 L717.4 843.2 L716.6 843.1 L715.8 842.9 L715 843.2 L714.2 846 L713.4 843.3 L712.6 842.8 L711.8 843.1 L711 842.9 L710.2 843 L709.4 842.9 L708.6 842.5 L707.8 842.6 L707 842.9 L706.2 843.1 L705.4 842.9 L704.6 849.3 L703.8 842.6 L703 847 L702.2 842.5 L701.4 842.6 L700.6 843.4 L699.8 852.1 L699 842.6 L698.2 842.7 L697.4 842.5 L696.6 842.9 L695.8 842.7 L695 843.1 L694.2 843.1 L693.4 843 L692.6 842.8 L691.8 843 L691 843.3 L690.2 843.2 L689.4 843.2 L688.6 843.1 L687.8 843.6 L687 842.9 L686.2 843.1 L685.4 842.7 L684.6 845.6 L683.8 843.3 L683 842.9 L682.2 842.5 L681.4 842.7 L680.6 843 L679.8 851.4 L679 842.9 L678.2 843.3 L677.4 842.6 L676.6 842.8 L675.8 842.8 L675 842.5 L674.2 842.5 L673.4 842.8 L672.6 842.5 L671.8 842.6 L671 843.3 L670.2 843.6 L669.4 844.2 L668.6 842.6 L667.8 842.7 L667 842.9 L666.2 842.6 L665.4 843.3 L664.6 843.2 L663.8 845.2 L663 842.5 L662.2 843.1 L661.4 842.9 L660.6 842.5 L659.8 842.5 L659 843.2 L658.2 843.3 L657.4 842.8 L656.6 843.2 L655.8 842.5 L655 842.7 L654.2 843 L653.4 842.6 L652.6 842.9 L651.8 842.9 L651 843.4 L650.2 842.6 L649.4 843.2 L648.6 842.8 L647.8 842.6 L647 843.3 L646.2 845.7 L645.4 843 L644.6 843.6 L643.8 842.6 L643 842.5 L642.2 842.6 L641.4 852.1 L640.6 843 L639.8 845.4 L639 843.3 L638.2 842.9 L637.4 843.3 L636.6 843.4 L635.8 843.1 L635 843.2 L634.2 842.6 L633.4 842.9 L632.6 843.4 L631.8 842.7 L631 842.7 L630.2 842.5 L629.4 842.8 L628.6 843 L627.8 843.4 L627 842.5 L626.2 842.8 L625.4 842.7 L624.6 842.9 L623.8 843.1 L623 842.9 L622.2 842.8 L621.4 843.3 L620.6 842.8 L619.8 843.1 L619 843.4 L618.2 842.5 L617.4 843.4 L616.6 842.6 L615.8 842.7 L615 842.7 L614.2 843.1 L613.4 842.7 L612.6 846.7 L611.8 851.9 L611 843 L610.2 843.2 L609.4 843.4 L608.6 843.2 L607.8 843 L607 846.5 L606.2 842.8 L605.4 842.5 L604.6 842.6 L603.8 844.3 L603 842.9 L602.2 842.6 L601.4 843.7 L600.6 842.8 L599.8 842.5 L599 843.8 L598.2 843.1 L597.4 843.1 L596.6 843 L595.8 845.9 L595 846 L594.2 842.6 L593.4 843.9 L592.6 845.8 L591.8 842.8 L591 842.8 L590.2 842.8 L589.4 842.7 L588.6 843.7 L587.8 842.8 L587 843.6 L586.2 842.6 L585.4 843 L584.6 842.9 L583.8 842.6 L583 842.8 L582.2 843.8 L581.4 845 L580.6 842.5 L579.8 842.5 L579 842.5 L578.2 842.7 L577.4 843 L576.6 842.5 L575.8 843.8 L575 842.8 L574.2 843.6 L573.4 842.7 L572.6 843.3 L571.8 842.9 L571 842.7 L570.2 847.2 L569.4 849.1 L568.6 846.1 L567.8 847.7 L567 845.4 L566.2 849.1 L565.4 847.2 L564.6 847.5 L563.8 847.6 L563 847.3 L562.2 845.2 L561.4 844.7 L560.6 845.4 L559.8 846.9 L559 848.3 L558.2 844.4 L557.4 844.7 L556.6 849.2 L555.8 850.2 L555 843.8 L554.2 846.9 L553.4 843.8 L552.6 845.5 L551.8 843.5 L551 845.3 L550.2 843.6 L549.4 843.5 L548.6 845.9 L547.8 845 L547 845.1 L546.2 844.9 L545.4 843.9 L544.6 845.3 L543.8 845.8 L543 844.3 L542.2 847.3 L541.4 846.4 L540.6 842.9 L539.8 847.6 L539 847.7 L538.2 849.2 L537.4 847.2 L536.6 843.4 L535.8 851.5 L535 844.6 L534.2 842.2 L533.4 844.3 L532.6 846.4 L531.8 845.3 L531 843.9 L530.2 842.5 L529.4 842.6 L528.6 842.7 L527.8 848.4 L527 843.3 L526.2 842.7 L525.4 842.6 L524.6 842.6 L523.8 843.1 L523 842.5 L522.2 842.7 L521.4 843.2 L520.6 843.2 L519.8 842.5 L519 842.9 L518.2 844.7 L517.4 843.2 L516.6 842.6 L515.8 842.7 L515 842.5 L514.2 842.8 L513.4 842.5 L512.6 842.7 L511.8 842.6 L511 842.7 L510.2 842.5 L509.4 842.7 L508.6 846.1 L507.8 842.7 L507 842.6 L506.2 843 L505.4 843.2 L504.6 842.6 L503.8 843.8 L503 842.6 L502.2 842.9 L501.4 843 L500.6 842.7 L499.8 842.9 L499 843 L498.2 843.1 L497.4 842.5 L496.6 843.2 L495.8 848.6 L495 846.6 L494.2 842.6 L493.4 842.6 L492.6 843 L491.8 849.2 L491 842.7 L490.2 843 L489.4 842.7 L488.6 842.5 L487.8 845.7 L487 842.7 L486.2 842.6 L485.4 842.5 L484.6 842.6 L483.8 843.1 L483 843 L482.2 846 L481.4 843.2 L480.6 842.9 L479.8 842.7 L479 842.6 L478.2 842.5 L477.4 842.6 L476.6 844.4 L475.8 842.8 L475 842.8 L474.2 843.7 L473.4 843.4 L472.6 843.5 L471.8 842.7 L471 843.1 L470.2 843 L469.4 842.5 L468.6 845.4 L467.8 842.8 L467 845.1 L466.2 843.2 L465.4 842.8 L464.6 842.6 L463.8 842.9 L463 842.8 L462.2 843.3 L461.4 843.3 L460.6 842.5 L459.8 846.2 L459 843.1 L458.2 843.3 L457.4 842.9 L456.6 843.7 L455.8 843.7 L455 842.7 L454.2 842.5 L453.4 842.6 L452.6 842.7 L451.8 843.2 L451 842.6 L450.2 843.4 L449.4 842.9 L448.6 842.7 L447.8 842.7 L447 842.9 L446.2 842.8 L445.4 843 L444.6 843.1 L443.8 843.2 L443 849.7 L442.2 845.1 L441.4 843.2 L440.6 842.5 L439.8 842.7 L439 842.6 L438.2 842.7 L437.4 842.7 L436.6 850.5 L435.8 842.9 L435 842.9 L434.2 843 L433.4 842.6 L432.6 842.8 L431.8 842.7 L431 843.9 L430.2 842.5 L429.4 842.5 L428.6 843.1 L427.8 842.7 L427 842.6 L426.2 843.1 L425.4 842.7 L424.6 842.9 L423.8 842.6 L423 842.8 L422.2 843.5 L421.4 842.7 L420.6 842.8 L419.8 842.6 L419 842.8 L418.2 843.4 L417.4 842.7 L416.6 842.6 L415.8 843.2 L415 842.5 L414.2 842.5 L413.4 842.9 L412.6 843.3 L411.8 843.3 L411 843.4 L410.2 843 L409.4 842.7 L408.6 842.7 L407.8 843.3 L407 842.5 L406.2 842.5 L405.4 846.4 L404.6 843.7 L403.8 842.7 L403 842.6 L402.2 843.1 L401.4 843.4 L400.6 843.3 L399.8 842.8 L399 842.8 L398.2 843.4 L397.4 842.8 L396.6 843.7 L395.8 843.4 L395 842.5 L394.2 842.8 L393.4 843.1 L392.6 842.5 L391.8 842.5 L391 842.6 L390.2 842.6 L389.4 843.5 L388.6 842.5 L387.8 844.9 L387 842.7 L386.2 842.7 L385.4 845.8 L384.6 842.9 L383.8 843.1 L383 845.7 L382.2 846.4 L381.4 846.2 L380.6 842.9 L379.8 842.5 L379 842.5 L378.2 842.6 L377.4 845.4 L376.6 843 L375.8 842.8 L375 842.9 L374.2 843 L373.4 842.8 L372.6 842.5 L371.8 843 L371 843.1 L370.2 846.2 L369.4 842.9 L368.6 842.8 L367.8 842.5 L367 842.9 L366.2 842.6 L365.4 842.5 L364.6 843.4 L363.8 843.3 L363 842.8 L362.2 843.4 L361.4 842.8 L360.6 842.5 L359.8 849.9 L359 843.4 L358.2 843.2 L357.4 842.5 L356.6 843.6 L355.8 842.8 L355 842.5 L354.2 842.6 L353.4 843.7 L352.6 843.6 L351.8 842.7 L351 843 L350.2 842.5 L349.4 842.5 L348.6 843.2 L347.8 843.6 L347 846.7 L346.2 842.5 L345.4 842.5 L344.6 843 L343.8 842.7 L343 843.5 L342.2 843 L341.4 842.8 L340.6 842.6 L339.8 842.6 L339 842.5 L338.2 847.4 L337.4 843 L336.6 843.8 L335.8 842.6 L335 842.7 L334.2 843.3 L333.4 846.7 L332.6 843.2 L331.8 842.9 L331 843.7 L330.2 846 L329.4 843.4 L328.6 843.3 L327.8 842.6 L327 843 L326.2 842.6 L325.4 843.6 L324.6 842.6 L323.8 842.6 L323 842.7 L322.2 842.9 L321.4 843.1 L320.6 843 L319.8 842.8 L319 842.7 L318.2 842.9 L317.4 842.7 L316.6 842.5 L315.8 842.9 L315 843.2 L314.2 847.5 L313.4 843.4 L312.6 842.9 L311.8 842.5 L311 843.4 L310.2 842.8 L309.4 842.8 L308.6 843.2 L307.8 843.1 L307 842.5 L306.2 843.4 L305.4 848.7 L304.6 842.8 L303.8 842.7 L303 842.7 L302.2 842.6 L301.4 842.7 L300.6 844.6 L299.8 843.9 L299 842.7 L298.2 842.5 L297.4 847.6 L296.6 844 L295.8 843.2 L295 842.6 L294.2 843.3 L293.4 843.1 L292.6 842.7 L291.8 843.3 L291 842.6 L290.2 842.5 L289.4 842.7 L288.6 842.6 L287.8 842.8 L287 842.9 L286.2 842.9 L285.4 842.8 L284.6 842.8 L283.8 842.5 L283 842.6 L282.2 842.7 L281.4 842.7 L280.6 842.9 L279.8 849.8 L279 843.1 L278.2 842.7 L277.4 843 L276.6 842.5 L275.8 842.6 L275 842.7 L274.2 842.6 L273.4 844.9 L272.6 842.6Z" fill="#e10c36"/>
<path d="M526.3 817 V846 M530 826 V850 M847 829.5 V846 M1205.5 838 V863.8 M1498 828.4 V845 M1826.5 838 V861 M1163 826 V845 M756 838 V862 M1129.5 826 V845 M1669 834 V855" stroke="#e10c36" stroke-width="1.15" fill="none"/>
<path d="M334.4 637 V921.3 M652.4 616.2 V900.5 M969.4 788.5 V922 M1295.5 774 V929.5 M1625.5 793 V935.6" stroke="#c4143f" stroke-width="1.5" fill="none"/>
<path d="M331.4 841.3 L335.9 837.8 L338.4 837.0999999999999 L343.4 840.0999999999999 L346.4 841.3 L341.4 843.0999999999999 L337.9 846.8 L335.4 843.3Z" fill="#e10c36"/>
<path d="M649.4 841.3 L653.9 837.8 L656.4 837.0999999999999 L661.4 840.0999999999999 L664.4 841.3 L659.4 843.0999999999999 L655.9 846.8 L653.4 843.3Z" fill="#e10c36"/>
<path d="M966.4 841.3 L970.9 837.8 L973.4 837.0999999999999 L978.4 840.0999999999999 L981.4 841.3 L976.4 843.0999999999999 L972.9 846.8 L970.4 843.3Z" fill="#e10c36"/>
<path d="M1292.5 841.3 L1297.0 837.8 L1299.5 837.0999999999999 L1304.5 840.0999999999999 L1307.5 841.3 L1302.5 843.0999999999999 L1299.0 846.8 L1296.5 843.3Z" fill="#e10c36"/>
<path d="M1622.5 841.3 L1627.0 837.8 L1629.5 837.0999999999999 L1634.5 840.0999999999999 L1637.5 841.3 L1632.5 843.0999999999999 L1629.0 846.8 L1626.5 843.3Z" fill="#e10c36"/>
<path d="M272.6 444.6 L273.6 444.6 L274.6 444.6 L275.6 444.9 L276.6 444.7 L277.6 444.9 L278.6 444.9 L279.6 445 L280.6 444.8 L281.6 444.9 L282.6 444.9 L283.6 445 L284.6 444.9 L285.6 444.7 L286.6 444.8 L287.6 444.8 L288.6 444.8 L289.6 444.9 L290.6 444.5 L291.6 445 L292.6 444.4 L293.6 444.8 L294.6 444.8 L295.6 445 L296.6 444.6 L297.6 444.8 L298.6 444.7 L299.6 444.8 L300.6 445 L301.6 445 L302.6 444.9 L303.6 444.9 L304.6 444.9 L305.6 444.8 L306.6 444.7 L307.6 444.7 L308.6 444.8 L309.6 445 L310.6 444.9 L311.6 444.9 L312.6 444.9 L313.6 444.9 L314.6 444.8 L315.6 444.9 L316.6 445 L317.6 444.8 L318.6 445 L319.6 444.9 L320.6 444.9 L321.6 444.9 L322.6 444.9 L323.6 444.7 L324.6 444.8 L325.6 444.8 L326.6 444.8 L327.6 444.8 L328.6 445 L329.6 444.8 L330.6 444.9 L331.6 444.9 L332.6 444.6 L333.6 444.9 L334.6 445 L335.6 445 L336.6 444.9 L337.6 444.8 L338.6 444.9 L339.6 444.5 L340.6 444.8 L341.6 444.9 L342.6 444.9 L343.6 444.7 L344.6 444.9 L345.6 444.9 L346.6 445 L347.6 444.8 L348.6 444.8 L349.6 444.9 L350.6 444.5 L351.6 444.8 L352.6 444.6 L353.6 444.8 L354.6 444.7 L355.6 444.8 L356.6 444.7 L357.6 444.8 L358.6 444.9 L359.6 445 L360.6 444.6 L361.6 444.9 L362.6 444.8 L363.6 444.8 L364.6 444.6 L365.6 444.3 L366.6 444.7 L367.6 444.9 L368.6 444.9 L369.6 444.9 L370.6 445 L371.6 444.8 L372.6 444.6 L373.6 444.9 L374.6 444.9 L375.6 444.5 L376.6 444.9 L377.6 444.9 L378.6 444.5 L379.6 444.8 L380.6 444.6 L381.6 444.8 L382.6 444.8 L383.6 445 L384.6 444.9 L385.6 444.6 L386.6 444.9 L387.6 444.8 L388.6 445 L389.6 445 L390.6 444.8 L391.6 444.6 L392.6 445 L393.6 444.7 L394.6 444.7 L395.6 444.9 L396.6 444.9 L397.6 444.8 L398.6 444.8 L399.6 444.7 L400.6 444.8 L401.6 444.4 L402.6 444.6 L403.6 444.7 L404.6 445 L405.6 444.9 L406.6 444.8 L407.6 444.9 L408.6 444.8 L409.6 444.9 L410.6 445 L411.6 444.7 L412.6 444.6 L413.6 444.6 L414.6 444.7 L415.6 444.8 L416.6 444.7 L417.6 444.7 L418.6 444.8 L419.6 444.9 L420.6 444.9 L421.6 444.8 L422.6 444.8 L423.6 444.9 L424.6 444.4 L425.6 444.6 L426.6 444.8 L427.6 444.9 L428.6 444.5 L429.6 444.9 L430.6 445 L431.6 444.9 L432.6 444.7 L433.6 444.9 L434.6 444.5 L435.6 444.9 L436.6 444.7 L437.6 444.9 L438.6 444.8 L439.6 444.9 L440.6 444.8 L441.6 444.8 L442.6 444.7 L443.6 444.7 L444.6 444.6 L445.6 444.9 L446.6 444.7 L447.6 444.9 L448.6 444.8 L449.6 444.8 L450.6 444.7 L451.6 445 L452.6 444.8 L453.6 444.9 L454.6 444.9 L455.6 445 L456.6 445 L457.6 445 L458.6 444.9 L459.6 444.9 L460.6 444.6 L461.6 444.7 L462.6 444.7 L463.6 444.9 L464.6 444.8 L465.6 444.8 L466.6 444.9 L467.6 444.9 L468.6 444.9 L469.6 444.6 L470.6 444.5 L471.6 444.9 L472.6 445 L473.6 444.9 L474.6 445 L475.6 444.7 L476.6 444.5 L477.6 444.9 L478.6 444.9 L479.6 445 L480.6 444.7 L481.6 444.4 L482.6 444.6 L483.6 444.9 L484.6 444.9 L485.6 444.7 L486.6 444.5 L487.6 444.9 L488.6 445 L489.6 444.9 L490.6 444.8 L491.6 444.5 L492.6 444.8 L493.6 444.9 L494.6 444.3 L495.6 444.6 L496.6 444.9 L497.6 444.7 L498.6 444.9 L499.6 444.6 L500.6 444.9 L501.6 444.5 L502.6 444.4 L503.6 444.7 L504.6 444.5 L505.6 445 L506.6 445 L507.6 445 L508.6 444.9 L509.6 444.6 L510.6 444.9 L511.6 444.7 L512.6 444.8 L513.6 444.9 L514.6 444.9 L515.6 444.9 L516.6 445 L517.6 444.7 L518.6 444.9 L519.6 445 L520.6 444.9 L521.6 444.9 L522.6 444.9 L523.6 444.9 L524.6 444.9 L525.6 444.8 L526.6 443.5 L527.6 442.9 L528.6 444.7 L529.6 445 L530.6 443.9 L531.6 444.8 L532.6 443.6 L533.6 444.7 L534.6 444.3 L535.6 444.7 L536.6 444.2 L537.6 444 L538.6 444.1 L539.6 443.7 L540.6 444.4 L541.6 444.7 L542.6 444.5 L543.6 444.4 L544.6 444.3 L545.6 443.7 L546.6 444.1 L547.6 444.9 L548.6 444.3 L549.6 444.9 L550.6 443.5 L551.6 444.2 L552.6 444.9 L553.6 443.1 L554.6 443.2 L555.6 444.3 L556.6 444.8 L557.6 444.5 L558.6 443.9 L559.6 444.4 L560.6 443.8 L561.6 444.9 L562.6 443 L563.6 444.9 L564.6 444.5 L565.6 444.6 L566.6 444.8 L567.6 444 L568.6 445 L569.6 444.8 L570.6 444.8 L571.6 444.6 L572.6 444.8 L573.6 444.9 L574.6 444.7 L575.6 444.5 L576.6 444.9 L577.6 444.7 L578.6 444.9 L579.6 444.8 L580.6 444.2 L581.6 444.7 L582.6 444.9 L583.6 444.4 L584.6 444.6 L585.6 444.8 L586.6 444.8 L587.6 444.7 L588.6 444.5 L589.6 444.7 L590.6 444.9 L591.6 444.8 L592.6 444.6 L593.6 444.7 L594.6 444.7 L595.6 444.8 L596.6 444.8 L597.6 444.9 L598.6 444.9 L599.6 444.8 L600.6 445 L601.6 444.8 L602.6 444.7 L603.6 444.9 L604.6 444.5 L605.6 444.8 L606.6 444.8 L607.6 444.9 L608.6 445 L609.6 444.7 L610.6 444.8 L611.6 444.7 L612.6 445 L613.6 444.9 L614.6 444.7 L615.6 444.9 L616.6 445 L617.6 444.6 L618.6 444.7 L619.6 444.8 L620.6 444.9 L621.6 445 L622.6 444.9 L623.6 444.8 L624.6 444.5 L625.6 444.8 L626.6 444.9 L627.6 444.8 L628.6 444.9 L629.6 444.7 L630.6 444.9 L631.6 444.8 L632.6 444.6 L633.6 444.7 L634.6 444.7 L635.6 444.8 L636.6 444.6 L637.6 444.9 L638.6 444.7 L639.6 444.6 L640.6 444.6 L641.6 444.8 L642.6 444.8 L643.6 444.9 L644.6 444.8 L645.6 444.6 L646.6 444.5 L647.6 444.7 L648.6 445 L649.6 444.9 L650.6 444.9 L651.6 444.8 L652.6 444.5 L653.6 444.7 L654.6 445 L655.6 445 L656.6 444.9 L657.6 444.6 L658.6 444.9 L659.6 444.6 L660.6 444.9 L661.6 444.8 L662.6 444.6 L663.6 445 L664.6 445 L665.6 444.3 L666.6 444.8 L667.6 444.9 L668.6 444.9 L669.6 444.7 L670.6 444.6 L671.6 444.8 L672.6 444.9 L673.6 444.5 L674.6 444.6 L675.6 445 L676.6 444.9 L677.6 444.5 L678.6 444.8 L679.6 444.9 L680.6 444.4 L681.6 444.9 L682.6 444.7 L683.6 444.9 L684.6 444.8 L685.6 444.9 L686.6 444.7 L687.6 445 L688.6 444.7 L689.6 444.8 L690.6 444.8 L691.6 445 L692.6 444.9 L693.6 444.6 L694.6 444.8 L695.6 444.8 L696.6 444.7 L697.6 444.9 L698.6 445 L699.6 445 L700.6 444.3 L701.6 444.9 L702.6 445 L703.6 444.8 L704.6 444.7 L705.6 444.9 L706.6 444.9 L707.6 444.9 L708.6 444.5 L709.6 444.9 L710.6 444.6 L711.6 444.8 L712.6 444.5 L713.6 444.9 L714.6 444.4 L715.6 444.7 L716.6 445 L717.6 444.8 L718.6 444.8 L719.6 444.8 L720.6 444.9 L721.6 444.6 L722.6 444.9 L723.6 444.9 L724.6 444.7 L725.6 444.8 L726.6 444.5 L727.6 444.9 L728.6 445 L729.6 445 L730.6 444.7 L731.6 444.5 L732.6 444.5 L733.6 444.6 L734.6 444.9 L735.6 444.6 L736.6 444.8 L737.6 444.9 L738.6 444.7 L739.6 444.9 L740.6 444.8 L741.6 444.9 L742.6 444.9 L743.6 444.9 L744.6 444.4 L745.6 444.8 L746.6 445 L747.6 444.6 L748.6 444.9 L749.6 444.8 L750.6 444.5 L751.6 444.8 L752.6 444.6 L753.6 444.9 L754.6 444.6 L755.6 444.6 L756.6 444.9 L757.6 444.4 L758.6 444.6 L759.6 444.7 L760.6 444.8 L761.6 445 L762.6 444.6 L763.6 444.6 L764.6 444.9 L765.6 444.8 L766.6 444.9 L767.6 444.9 L768.6 445 L769.6 444.9 L770.6 444.6 L771.6 444.8 L772.6 444.7 L773.6 444.7 L774.6 444.7 L775.6 444.9 L776.6 444.9 L777.6 444.7 L778.6 444.8 L779.6 444.5 L780.6 444.7 L781.6 444.9 L782.6 444.9 L783.6 444.7 L784.6 444.6 L785.6 444.9 L786.6 444.4 L787.6 444.7 L788.6 444.5 L789.6 444.6 L790.6 444.8 L791.6 445 L792.6 444.8 L793.6 444.8 L794.6 444.7 L795.6 444.8 L796.6 444.6 L797.6 444.9 L798.6 444.6 L799.6 444.9 L800.6 444.7 L801.6 444.6 L802.6 444.6 L803.6 444.9 L804.6 445 L805.6 444.8 L806.6 444.6 L807.6 444.1 L808.6 444.9 L809.6 444.8 L810.6 444.9 L811.6 444.8 L812.6 444.9 L813.6 445 L814.6 444.5 L815.6 444.9 L816.6 444.4 L817.6 444.5 L818.6 444.2 L819.6 444.7 L820.6 444.6 L821.6 445 L822.6 444.9 L823.6 444.7 L824.6 444.9 L825.6 444.8 L826.6 445 L827.6 444.8 L828.6 444.8 L829.6 444.7 L830.6 444.8 L831.6 444.9 L832.6 445 L833.6 444.8 L834.6 444.9 L835.6 445 L836.6 444.7 L837.6 444.8 L838.6 445 L839.6 444.5 L840.6 444.9 L841.6 444.8 L842.6 444.7 L843.6 444.9 L844.6 443.5 L845.6 443.3 L846.6 444.9 L847.6 444 L848.6 443 L849.6 444.1 L850.6 444.8 L851.6 443.8 L852.6 443.5 L853.6 444.9 L854.6 444.7 L855.6 444.2 L856.6 444.9 L857.6 443.7 L858.6 443.8 L859.6 444.4 L860.6 444.8 L861.6 444.3 L862.6 443.5 L863.6 444.9 L864.6 444.6 L865.6 444 L866.6 444.2 L867.6 443.6 L868.6 444.9 L869.6 444.9 L870.6 444.8 L871.6 444.9 L872.6 443.8 L873.6 444.9 L874.6 444.3 L875.6 443.8 L876.6 443.7 L877.6 444.9 L878.6 443.2 L879.6 444.7 L880.6 444.5 L881.6 444.9 L882.6 444.8 L883.6 443.6 L884.6 444.2 L885.6 444.5 L886.6 444.1 L887.6 444.9 L888.6 444.9 L889.6 444.6 L890.6 444.7 L891.6 444.7 L892.6 444.2 L893.6 444.6 L894.6 444.3 L895.6 444.9 L896.6 444.9 L897.6 444.7 L898.6 444.9 L899.6 444.6 L900.6 444.7 L901.6 444.7 L902.6 444.7 L903.6 445 L904.6 444.9 L905.6 445 L906.6 444.9 L907.6 444.9 L908.6 444.6 L909.6 444.5 L910.6 444.7 L911.6 444.8 L912.6 444.4 L913.6 444.6 L914.6 444.4 L915.6 444.8 L916.6 444.9 L917.6 444.9 L918.6 444.8 L919.6 444.9 L920.6 444.9 L921.6 444.9 L922.6 444.8 L923.6 444.5 L924.6 444.9 L925.6 444.5 L926.6 445 L927.6 444.9 L928.6 444.9 L929.6 444.2 L930.6 444.7 L931.6 445 L932.6 444.8 L933.6 444.9 L934.6 444.8 L935.6 445 L936.6 444.9 L937.6 444.9 L938.6 445 L939.6 445 L940.6 444.8 L941.6 444.8 L942.6 444.9 L943.6 444.8 L944.6 444.7 L945.6 445 L946.6 445 L947.6 444.9 L948.6 444.7 L949.6 445 L950.6 444.9 L951.6 445 L952.6 444.9 L953.6 444.7 L954.6 444.7 L955.6 444.8 L956.6 444.9 L957.6 444.8 L958.6 445 L959.6 444.8 L960.6 444.6 L961.6 444.9 L962.6 444.8 L963.6 444.9 L964.6 444.9 L965.6 444.5 L966.6 444.1 L967.6 445 L968.6 444.7 L969.6 444.3 L970.6 444.8 L971.6 444.7 L972.6 444.8 L973.6 444.9 L974.6 444.9 L975.6 444.5 L976.6 444.9 L977.6 444.6 L978.6 444.8 L979.6 444.6 L980.6 444.8 L981.6 444.8 L982.6 444.7 L983.6 444.7 L984.6 445 L985.6 444.9 L986.6 444.6 L987.6 444.7 L988.6 444.7 L989.6 444.8 L990.6 444.7 L991.6 444.6 L992.6 444.8 L993.6 444.8 L994.6 444.8 L995.6 445 L996.6 444.9 L997.6 444.9 L998.6 444.9 L999.6 444.9 L1000.6 444.8 L1001.6 444.9 L1002.6 444.7 L1003.6 444.6 L1004.6 445 L1005.6 444.8 L1006.6 444.7 L1007.6 444.7 L1008.6 444.5 L1009.6 444.9 L1010.6 444.8 L1011.6 444.6 L1012.6 445 L1013.6 444.8 L1014.6 444.9 L1015.6 444.8 L1016.6 444.6 L1017.6 444.9 L1018.6 444.7 L1019.6 444.6 L1020.6 444.9 L1021.6 444.9 L1022.6 444.9 L1023.6 444.8 L1024.6 444.7 L1025.6 444.9 L1026.6 444.9 L1027.6 444.9 L1028.6 444.9 L1029.6 444.7 L1030.6 445 L1031.6 444.4 L1032.6 444.9 L1033.6 444.8 L1034.6 444.8 L1035.6 445 L1036.6 444.7 L1037.6 444.6 L1038.6 445 L1039.6 444.8 L1040.6 444.2 L1041.6 444.9 L1042.6 445 L1043.6 444.9 L1044.6 444.4 L1045.6 445 L1046.6 444.9 L1047.6 444.9 L1048.6 445 L1049.6 444.5 L1050.6 444.8 L1051.6 445 L1052.6 445 L1053.6 444.7 L1054.6 444.7 L1055.6 444.9 L1056.6 444.8 L1057.6 444.4 L1058.6 444.5 L1059.6 444.7 L1060.6 444.8 L1061.6 444.9 L1062.6 444.6 L1063.6 444.9 L1064.6 444.8 L1065.6 444.9 L1066.6 444.7 L1067.6 444.8 L1068.6 444.8 L1069.6 444.9 L1070.6 445 L1071.6 444.8 L1072.6 444.9 L1073.6 444.8 L1074.6 444.9 L1075.6 444.4 L1076.6 444.8 L1077.6 444.5 L1078.6 444.7 L1079.6 444.8 L1080.6 444.9 L1081.6 444.9 L1082.6 444.9 L1083.6 444.7 L1084.6 444.9 L1085.6 444.9 L1086.6 444.6 L1087.6 444.7 L1088.6 444.7 L1089.6 444.9 L1090.6 444.6 L1091.6 444.6 L1092.6 444.8 L1093.6 444.7 L1094.6 444.8 L1095.6 444.6 L1096.6 444.9 L1097.6 444.6 L1098.6 444.7 L1099.6 444.9 L1100.6 444.9 L1101.6 444.9 L1102.6 444.7 L1103.6 445 L1104.6 444.9 L1105.6 444.6 L1106.6 444.6 L1107.6 444.8 L1108.6 444.7 L1109.6 444.8 L1110.6 444.8 L1111.6 444.5 L1112.6 445 L1113.6 444.5 L1114.6 444.9 L1115.6 444.7 L1116.6 444.6 L1117.6 444.8 L1118.6 444.6 L1119.6 444.7 L1120.6 445 L1121.6 444.9 L1122.6 444.8 L1123.6 444.8 L1124.6 444.9 L1125.6 444.9 L1126.6 444.9 L1127.6 444.8 L1128.6 444.9 L1129.6 444.5 L1130.6 444.8 L1131.6 444.5 L1132.6 444.9 L1133.6 444.9 L1134.6 444.5 L1135.6 444.9 L1136.6 444.8 L1137.6 444.4 L1138.6 445 L1139.6 444.9 L1140.6 444.5 L1141.6 444.9 L1142.6 444.9 L1143.6 444.7 L1144.6 444.6 L1145.6 444.2 L1146.6 444.9 L1147.6 444.9 L1148.6 445 L1149.6 445 L1150.6 444.8 L1151.6 444.7 L1152.6 444.9 L1153.6 445 L1154.6 445 L1155.6 444.9 L1156.6 444.9 L1157.6 444.7 L1158.6 444.5 L1159.6 444.5 L1160.6 444.6 L1161.6 445 L1162.6 444.9 L1163.6 444.8 L1164.6 443.2 L1165.6 443.3 L1166.6 444.6 L1167.6 444.8 L1168.6 444.6 L1169.6 444.2 L1170.6 444.5 L1171.6 445 L1172.6 444 L1173.6 443.9 L1174.6 444.4 L1175.6 444.9 L1176.6 445 L1177.6 445 L1178.6 444.5 L1179.6 443.7 L1180.6 444.6 L1181.6 443.4 L1182.6 444.6 L1183.6 444.5 L1184.6 443.3 L1185.6 444.1 L1186.6 444.7 L1187.6 445 L1188.6 444.7 L1189.6 444.9 L1190.6 444.6 L1191.6 445 L1192.6 444.9 L1193.6 444.9 L1194.6 443.3 L1195.6 444.9 L1196.6 444 L1197.6 444.6 L1198.6 443.8 L1199.6 444.9 L1200.6 444 L1201.6 444.7 L1202.6 444.3 L1203.6 444.1 L1204.6 444.8 L1205.6 444.1 L1206.6 444.8 L1207.6 444.8 L1208.6 444.1 L1209.6 444.7 L1210.6 444.8 L1211.6 444.9 L1212.6 444.8 L1213.6 445 L1214.6 444.8 L1215.6 444.9 L1216.6 444.7 L1217.6 444.9 L1218.6 444.8 L1219.6 444.8 L1220.6 444.8 L1221.6 444.9 L1222.6 444.6 L1223.6 444.8 L1224.6 444.7 L1225.6 444.6 L1226.6 445 L1227.6 444.7 L1228.6 444.9 L1229.6 444.8 L1230.6 444.8 L1231.6 445 L1232.6 444.9 L1233.6 444.4 L1234.6 444.7 L1235.6 444.8 L1236.6 444.8 L1237.6 445 L1238.6 444.8 L1239.6 444.9 L1240.6 444.9 L1241.6 444.9 L1242.6 444.9 L1243.6 444.5 L1244.6 444.8 L1245.6 444.9 L1246.6 444.9 L1247.6 444.9 L1248.6 444.8 L1249.6 444.6 L1250.6 444.7 L1251.6 445 L1252.6 444.9 L1253.6 444.9 L1254.6 444.6 L1255.6 444.8 L1256.6 444.9 L1257.6 444.8 L1258.6 444.8 L1259.6 444.9 L1260.6 445 L1261.6 444.8 L1262.6 444.8 L1263.6 444.9 L1264.6 444.8 L1265.6 444.7 L1266.6 444.6 L1267.6 444.7 L1268.6 444.9 L1269.6 444.8 L1270.6 444.9 L1271.6 444.6 L1272.6 444.8 L1273.6 444.7 L1274.6 444.4 L1275.6 444.5 L1276.6 444.5 L1277.6 444.7 L1278.6 444.7 L1279.6 444.9 L1280.6 444.9 L1281.6 444.9 L1282.6 444.8 L1283.6 444.6 L1284.6 445 L1285.6 444.9 L1286.6 444.8 L1287.6 444.6 L1288.6 444.9 L1289.6 444.9 L1290.6 444.9 L1291.6 445 L1292.6 444.8 L1293.6 444.6 L1294.6 444.8 L1295.6 444.9 L1296.6 444.9 L1297.6 444.9 L1298.6 444.3 L1299.6 444.6 L1300.6 444.6 L1301.6 444.7 L1302.6 445 L1303.6 444.9 L1304.6 444.7 L1305.6 444.8 L1306.6 444.6 L1307.6 445 L1308.6 444.9 L1309.6 444.9 L1310.6 444.4 L1311.6 444.9 L1312.6 444.6 L1313.6 444.8 L1314.6 444.5 L1315.6 444.8 L1316.6 444.5 L1317.6 445 L1318.6 444.5 L1319.6 444.9 L1320.6 444.9 L1321.6 444.8 L1322.6 444.6 L1323.6 444.7 L1324.6 445 L1325.6 444.7 L1326.6 444.9 L1327.6 444.9 L1328.6 444.9 L1329.6 444.4 L1330.6 444.7 L1331.6 444.9 L1332.6 445 L1333.6 444.3 L1334.6 444.9 L1335.6 444.9 L1336.6 444.8 L1337.6 444.9 L1338.6 444.4 L1339.6 444.9 L1340.6 444.6 L1341.6 444.9 L1342.6 445 L1343.6 444.9 L1344.6 444.8 L1345.6 444.8 L1346.6 444.7 L1347.6 445 L1348.6 445 L1349.6 444.9 L1350.6 444.7 L1351.6 444.6 L1352.6 444.4 L1353.6 444.8 L1354.6 444.7 L1355.6 444.8 L1356.6 444.9 L1357.6 444.9 L1358.6 444.8 L1359.6 444.9 L1360.6 444.8 L1361.6 444.5 L1362.6 444.8 L1363.6 444.5 L1364.6 444.8 L1365.6 444.9 L1366.6 444.6 L1367.6 444.7 L1368.6 444.7 L1369.6 444.6 L1370.6 444.8 L1371.6 444.6 L1372.6 444.8 L1373.6 444.8 L1374.6 444.8 L1375.6 444.7 L1376.6 444.6 L1377.6 444.5 L1378.6 444.9 L1379.6 444.9 L1380.6 444.6 L1381.6 444.8 L1382.6 444.7 L1383.6 444.7 L1384.6 445 L1385.6 444.5 L1386.6 444.9 L1387.6 444.6 L1388.6 445 L1389.6 444.5 L1390.6 444.8 L1391.6 444.9 L1392.6 444.7 L1393.6 444.7 L1394.6 444.9 L1395.6 444.8 L1396.6 444.9 L1397.6 444.5 L1398.6 444.5 L1399.6 445 L1400.6 444.8 L1401.6 444.9 L1402.6 444.8 L1403.6 444.8 L1404.6 444.7 L1405.6 445 L1406.6 444.8 L1407.6 444.9 L1408.6 444.7 L1409.6 444.6 L1410.6 445 L1411.6 444.6 L1412.6 444.8 L1413.6 444.8 L1414.6 444.9 L1415.6 444.6 L1416.6 444.4 L1417.6 445 L1418.6 444.9 L1419.6 444.7 L1420.6 444.7 L1421.6 444.3 L1422.6 444.8 L1423.6 444.9 L1424.6 444.9 L1425.6 444.7 L1426.6 445 L1427.6 444.3 L1428.6 444.5 L1429.6 444.9 L1430.6 444.7 L1431.6 444.8 L1432.6 444.8 L1433.6 444.9 L1434.6 444.3 L1435.6 445 L1436.6 444.7 L1437.6 444.7 L1438.6 444.8 L1439.6 445 L1440.6 444.6 L1441.6 444.8 L1442.6 444.4 L1443.6 445 L1444.6 444.9 L1445.6 444.6 L1446.6 444.6 L1447.6 444.8 L1448.6 445 L1449.6 444.8 L1450.6 444.9 L1451.6 444.6 L1452.6 445 L1453.6 444.9 L1454.6 444.8 L1455.6 444.8 L1456.6 444.8 L1457.6 445 L1458.6 444.9 L1459.6 445 L1460.6 444.8 L1461.6 444.8 L1462.6 444.9 L1463.6 444.6 L1464.6 445 L1465.6 444.7 L1466.6 444.6 L1467.6 445 L1468.6 444.5 L1469.6 445 L1470.6 444.9 L1471.6 444.7 L1472.6 445 L1473.6 444.8 L1474.6 444.8 L1475.6 444.6 L1476.6 444.5 L1477.6 444.4 L1478.6 444.8 L1479.6 444.8 L1480.6 444.9 L1481.6 444.7 L1482.6 444.8 L1483.6 444.6 L1484.6 444.9 L1485.6 444.9 L1486.6 444.9 L1487.6 445 L1488.6 444.7 L1489.6 444.7 L1490.6 444.6 L1491.6 444.6 L1492.6 445 L1493.6 444.6 L1494.6 444.6 L1495.6 444.9 L1496.6 444.9 L1497.6 443.2 L1498.6 442.8 L1499.6 443.7 L1500.6 444.8 L1501.6 443.6 L1502.6 445 L1503.6 443.2 L1504.6 444.1 L1505.6 444.8 L1506.6 444.2 L1507.6 444.3 L1508.6 444.2 L1509.6 444.2 L1510.6 443.2 L1511.6 444.8 L1512.6 444.3 L1513.6 444.2 L1514.6 444.3 L1515.6 444.5 L1516.6 444.7 L1517.6 444.5 L1518.6 443.8 L1519.6 444.9 L1520.6 444.8 L1521.6 444.2 L1522.6 444.7 L1523.6 444.7 L1524.6 444.2 L1525.6 444.7 L1526.6 444.2 L1527.6 444.8 L1528.6 444.4 L1529.6 444.1 L1530.6 444.2 L1531.6 443.6 L1532.6 444.4 L1533.6 443.5 L1534.6 444.5 L1535.6 444.4 L1536.6 443.8 L1537.6 443.5 L1538.6 444.7 L1539.6 444.2 L1540.6 444.8 L1541.6 444.9 L1542.6 445 L1543.6 444.9 L1544.6 444.5 L1545.6 444.8 L1546.6 444.9 L1547.6 444.8 L1548.6 444.9 L1549.6 444.8 L1550.6 444.8 L1551.6 444.9 L1552.6 444.5 L1553.6 445 L1554.6 444.8 L1555.6 444.9 L1556.6 444.7 L1557.6 444.7 L1558.6 444.7 L1559.6 445 L1560.6 444.8 L1561.6 444.8 L1562.6 444.9 L1563.6 444.4 L1564.6 444.8 L1565.6 444.8 L1566.6 444.9 L1567.6 444.6 L1568.6 444.8 L1569.6 445 L1570.6 444.7 L1571.6 445 L1572.6 444.9 L1573.6 444.9 L1574.6 444.9 L1575.6 444.8 L1576.6 444.6 L1577.6 445 L1578.6 444.5 L1579.6 445 L1580.6 444.8 L1581.6 444.9 L1582.6 444.6 L1583.6 444.7 L1584.6 444.8 L1585.6 444.6 L1586.6 444.8 L1587.6 445 L1588.6 445 L1589.6 444.9 L1590.6 444.7 L1591.6 444.7 L1592.6 444.9 L1593.6 444.8 L1594.6 445 L1595.6 444.8 L1596.6 444.8 L1597.6 445 L1598.6 444.4 L1599.6 444.7 L1600.6 444.9 L1601.6 445 L1602.6 444.8 L1603.6 444.8 L1604.6 444.7 L1605.6 444.9 L1606.6 444.7 L1607.6 444.6 L1608.6 444.6 L1609.6 444.9 L1610.6 444.8 L1611.6 444.9 L1612.6 444.8 L1613.6 444.6 L1614.6 444.6 L1615.6 444.8 L1616.6 445 L1617.6 444.5 L1618.6 444.8 L1619.6 444.9 L1620.6 444.7 L1621.6 444.8 L1622.6 444.8 L1623.6 444.6 L1624.6 444.9 L1625.6 444.8 L1626.6 445 L1627.6 444.7 L1628.6 444.8 L1629.6 444.6 L1630.6 444.7 L1631.6 444.8 L1632.6 444.8 L1633.6 444.9 L1634.6 444.9 L1635.6 444.8 L1636.6 444.8 L1637.6 445 L1638.6 444.6 L1639.6 444.8 L1640.6 445 L1641.6 444.5 L1642.6 444.9 L1643.6 444.8 L1644.6 444.9 L1645.6 444.7 L1646.6 444.8 L1647.6 444.4 L1648.6 444.6 L1649.6 444.7 L1650.6 444.9 L1651.6 444.7 L1652.6 444.9 L1653.6 444.8 L1654.6 444.8 L1655.6 444.7 L1656.6 444.6 L1657.6 444.5 L1658.6 444.8 L1659.6 444.9 L1660.6 444.9 L1661.6 444.9 L1662.6 445 L1663.6 445 L1664.6 444.8 L1665.6 445 L1666.6 444.7 L1667.6 444.7 L1668.6 444.8 L1669.6 444.5 L1670.6 444.9 L1671.6 444.4 L1672.6 444.8 L1673.6 444.8 L1674.6 444.5 L1675.6 444.9 L1676.6 444.4 L1677.6 444.7 L1678.6 444.7 L1679.6 444.7 L1680.6 444.8 L1681.6 444.6 L1682.6 444.8 L1683.6 444.5 L1684.6 445 L1685.6 444.7 L1686.6 444.8 L1687.6 444.8 L1688.6 444.9 L1689.6 445 L1690.6 444.9 L1691.6 445 L1692.6 444.8 L1693.6 444.9 L1694.6 444.9 L1695.6 444.8 L1696.6 445 L1697.6 444.9 L1698.6 444.9 L1699.6 444.8 L1700.6 444.8 L1701.6 444.9 L1702.6 444.6 L1703.6 444.6 L1704.6 444.8 L1705.6 444.8 L1706.6 444.7 L1707.6 444.8 L1708.6 444.8 L1709.6 444.8 L1710.6 444.6 L1711.6 444.8 L1712.6 444.9 L1713.6 444.7 L1714.6 444.3 L1715.6 444.8 L1716.6 444.6 L1717.6 445 L1718.6 444.6 L1719.6 444.9 L1720.6 444.9 L1721.6 444.7 L1722.6 444.5 L1723.6 444.8 L1724.6 445 L1725.6 444.9 L1726.6 444.5 L1727.6 444.8 L1728.6 444.9 L1729.6 444.8 L1730.6 444.8 L1731.6 444.9 L1732.6 445 L1733.6 444.8 L1734.6 444.4 L1735.6 444.9 L1736.6 444.7 L1737.6 444.7 L1738.6 444.9 L1739.6 444.7 L1740.6 445 L1741.6 444.6 L1742.6 444.7 L1743.6 445 L1744.6 444.8 L1745.6 444.7 L1746.6 444.6 L1747.6 444.6 L1748.6 445 L1749.6 444.4 L1750.6 445 L1751.6 445 L1752.6 444.9 L1753.6 444.8 L1754.6 444.9 L1755.6 444.7 L1756.6 444.8 L1757.6 444.8 L1758.6 444.8 L1759.6 444.6 L1760.6 444.9 L1761.6 444.6 L1762.6 444.7 L1763.6 444.7 L1764.6 444.5 L1765.6 444.7 L1766.6 445 L1767.6 444.9 L1768.6 444.8 L1769.6 444.9 L1770.6 444.8 L1771.6 444.6 L1772.6 444.9 L1773.6 444.8 L1774.6 444.7 L1775.6 444.8 L1776.6 445 L1777.6 444.7 L1778.6 445 L1779.6 444.7 L1780.6 444.9 L1781.6 444.9 L1782.6 444.9 L1783.6 444.7 L1784.6 444.6 L1785.6 444.6 L1786.6 444.6 L1787.6 444.5 L1788.6 445 L1789.6 444.9 L1790.6 444.9 L1791.6 445 L1792.6 444.6 L1793.6 445 L1794.6 444.7 L1795.6 444.6 L1796.6 444.8 L1797.6 445 L1798.6 444.8 L1799.6 444.9 L1800.6 444.9 L1801.6 444.6 L1802.6 444.5 L1803.6 445 L1804.6 444.7 L1805.6 445 L1806.6 444.7 L1807.6 444.5 L1808.6 444.9 L1809.6 444.8 L1810.6 444.6 L1811.6 444.6 L1812.6 444.9 L1813.6 444.9 L1814.6 444.9 L1815.6 444.8 L1816.6 444.6 L1817.6 445 L1818.6 444.8 L1819.6 444.9 L1820.6 444.6 L1821.6 445 L1822.6 444.6 L1823.6 444.7 L1824.6 444.2 L1825.6 443.1 L1826.6 441.8 L1827.6 443.7 L1828.6 444 L1829.6 444.4 L1830.6 444.5 L1831.6 444.1 L1832.6 444.5 L1833.6 444.9 L1834.6 443.6 L1835.6 444 L1836.6 444.5 L1837.6 444 L1838.6 444.4 L1839.6 444.7 L1840.6 444.8 L1841.6 443.7 L1841.6 448.1 L1840.6 448.3 L1839.6 447.8 L1838.6 447.8 L1837.6 448.6 L1836.6 447.8 L1835.6 448.1 L1834.6 448 L1833.6 447.9 L1832.6 447.8 L1831.6 447.8 L1830.6 447.9 L1829.6 447.9 L1828.6 447.9 L1827.6 447.9 L1826.6 447.8 L1825.6 447.8 L1824.6 448 L1823.6 448.1 L1822.6 447.8 L1821.6 447.8 L1820.6 447.8 L1819.6 448 L1818.6 447.8 L1817.6 447.8 L1816.6 447.9 L1815.6 448 L1814.6 447.9 L1813.6 447.9 L1812.6 447.9 L1811.6 447.8 L1810.6 447.9 L1809.6 447.9 L1808.6 447.7 L1807.6 447.9 L1806.6 447.9 L1805.6 447.7 L1804.6 447.8 L1803.6 448.1 L1802.6 448 L1801.6 447.8 L1800.6 447.8 L1799.6 448.2 L1798.6 447.8 L1797.6 448 L1796.6 448 L1795.6 447.9 L1794.6 448 L1793.6 448.3 L1792.6 448.1 L1791.6 448 L1790.6 447.8 L1789.6 447.7 L1788.6 447.7 L1787.6 447.8 L1786.6 447.9 L1785.6 448.2 L1784.6 447.8 L1783.6 447.7 L1782.6 448 L1781.6 447.8 L1780.6 447.8 L1779.6 447.9 L1778.6 447.8 L1777.6 448.3 L1776.6 448 L1775.6 447.9 L1774.6 447.9 L1773.6 447.9 L1772.6 447.8 L1771.6 447.8 L1770.6 447.7 L1769.6 447.8 L1768.6 447.7 L1767.6 447.7 L1766.6 447.8 L1765.6 448 L1764.6 447.7 L1763.6 447.8 L1762.6 447.7 L1761.6 447.8 L1760.6 447.9 L1759.6 447.8 L1758.6 448.3 L1757.6 448.2 L1756.6 447.9 L1755.6 448.1 L1754.6 447.9 L1753.6 448.1 L1752.6 448.3 L1751.6 447.9 L1750.6 448 L1749.6 448.5 L1748.6 448.2 L1747.6 447.8 L1746.6 448 L1745.6 448.1 L1744.6 447.7 L1743.6 447.9 L1742.6 447.7 L1741.6 448 L1740.6 447.7 L1739.6 448.2 L1738.6 448 L1737.6 447.7 L1736.6 447.8 L1735.6 448 L1734.6 448.1 L1733.6 448.3 L1732.6 447.8 L1731.6 447.8 L1730.6 447.9 L1729.6 447.9 L1728.6 448 L1727.6 447.8 L1726.6 447.8 L1725.6 448.1 L1724.6 448.2 L1723.6 447.8 L1722.6 447.7 L1721.6 448.3 L1720.6 448.1 L1719.6 447.7 L1718.6 447.8 L1717.6 447.9 L1716.6 448.1 L1715.6 447.8 L1714.6 447.9 L1713.6 448.2 L1712.6 447.9 L1711.6 447.9 L1710.6 447.8 L1709.6 448.3 L1708.6 448.2 L1707.6 448 L1706.6 447.7 L1705.6 447.9 L1704.6 448.5 L1703.6 447.7 L1702.6 447.9 L1701.6 448 L1700.6 448.1 L1699.6 447.8 L1698.6 447.9 L1697.6 447.8 L1696.6 447.8 L1695.6 448.1 L1694.6 448.1 L1693.6 448 L1692.6 448.1 L1691.6 447.9 L1690.6 448 L1689.6 447.7 L1688.6 447.8 L1687.6 447.8 L1686.6 447.9 L1685.6 448.1 L1684.6 447.8 L1683.6 447.9 L1682.6 447.7 L1681.6 447.9 L1680.6 448.3 L1679.6 447.8 L1678.6 447.7 L1677.6 447.8 L1676.6 448.1 L1675.6 447.9 L1674.6 448 L1673.6 448 L1672.6 447.9 L1671.6 447.7 L1670.6 447.9 L1669.6 447.8 L1668.6 448.1 L1667.6 447.9 L1666.6 447.9 L1665.6 447.9 L1664.6 447.8 L1663.6 447.9 L1662.6 448.1 L1661.6 448 L1660.6 447.9 L1659.6 447.8 L1658.6 448.4 L1657.6 447.8 L1656.6 448 L1655.6 447.8 L1654.6 447.9 L1653.6 448.1 L1652.6 448 L1651.6 447.9 L1650.6 447.9 L1649.6 447.7 L1648.6 448.1 L1647.6 447.8 L1646.6 447.9 L1645.6 447.9 L1644.6 447.9 L1643.6 447.7 L1642.6 448 L1641.6 447.7 L1640.6 447.8 L1639.6 447.8 L1638.6 448.1 L1637.6 447.8 L1636.6 447.8 L1635.6 447.7 L1634.6 448 L1633.6 447.8 L1632.6 447.9 L1631.6 448.2 L1630.6 447.7 L1629.6 447.9 L1628.6 447.8 L1627.6 448 L1626.6 447.8 L1625.6 447.9 L1624.6 447.7 L1623.6 447.8 L1622.6 447.8 L1621.6 448.5 L1620.6 447.8 L1619.6 448.1 L1618.6 448 L1617.6 448.1 L1616.6 447.9 L1615.6 448 L1614.6 447.7 L1613.6 447.8 L1612.6 448 L1611.6 448 L1610.6 448.1 L1609.6 448 L1608.6 448.2 L1607.6 447.7 L1606.6 447.8 L1605.6 448 L1604.6 447.7 L1603.6 447.7 L1602.6 448.2 L1601.6 447.7 L1600.6 447.9 L1599.6 447.7 L1598.6 448.3 L1597.6 447.8 L1596.6 447.8 L1595.6 448 L1594.6 447.9 L1593.6 448.5 L1592.6 447.8 L1591.6 447.9 L1590.6 447.8 L1589.6 447.7 L1588.6 447.8 L1587.6 447.8 L1586.6 447.8 L1585.6 447.8 L1584.6 447.8 L1583.6 447.9 L1582.6 448 L1581.6 447.8 L1580.6 447.9 L1579.6 448.2 L1578.6 448 L1577.6 447.9 L1576.6 448 L1575.6 448 L1574.6 448 L1573.6 447.8 L1572.6 448 L1571.6 448.1 L1570.6 448.1 L1569.6 448.2 L1568.6 447.9 L1567.6 447.9 L1566.6 448.1 L1565.6 448.2 L1564.6 447.8 L1563.6 447.9 L1562.6 448.3 L1561.6 447.7 L1560.6 448.2 L1559.6 447.8 L1558.6 448.1 L1557.6 447.9 L1556.6 448 L1555.6 448.3 L1554.6 447.9 L1553.6 448 L1552.6 447.9 L1551.6 447.9 L1550.6 448.1 L1549.6 448.3 L1548.6 447.7 L1547.6 447.7 L1546.6 447.7 L1545.6 447.8 L1544.6 448 L1543.6 447.9 L1542.6 448.2 L1541.6 447.9 L1540.6 447.9 L1539.6 447.7 L1538.6 448 L1537.6 447.8 L1536.6 447.8 L1535.6 447.8 L1534.6 448.2 L1533.6 447.7 L1532.6 447.8 L1531.6 447.9 L1530.6 448 L1529.6 447.8 L1528.6 447.7 L1527.6 448.1 L1526.6 447.8 L1525.6 448.3 L1524.6 447.8 L1523.6 448 L1522.6 447.7 L1521.6 448.1 L1520.6 448 L1519.6 447.9 L1518.6 447.9 L1517.6 447.8 L1516.6 448 L1515.6 447.8 L1514.6 448 L1513.6 448.1 L1512.6 447.7 L1511.6 447.7 L1510.6 447.8 L1509.6 448 L1508.6 447.8 L1507.6 448.4 L1506.6 447.7 L1505.6 448 L1504.6 448 L1503.6 447.8 L1502.6 448 L1501.6 448.3 L1500.6 447.7 L1499.6 447.8 L1498.6 447.7 L1497.6 448 L1496.6 447.8 L1495.6 447.7 L1494.6 448.1 L1493.6 448.1 L1492.6 448 L1491.6 447.9 L1490.6 447.9 L1489.6 447.9 L1488.6 447.9 L1487.6 447.9 L1486.6 447.8 L1485.6 447.8 L1484.6 448.1 L1483.6 447.8 L1482.6 447.9 L1481.6 447.9 L1480.6 447.7 L1479.6 448 L1478.6 447.9 L1477.6 447.9 L1476.6 448.6 L1475.6 448.1 L1474.6 448 L1473.6 447.8 L1472.6 447.8 L1471.6 447.8 L1470.6 447.9 L1469.6 447.9 L1468.6 447.9 L1467.6 447.7 L1466.6 447.8 L1465.6 447.7 L1464.6 447.9 L1463.6 447.8 L1462.6 447.8 L1461.6 447.9 L1460.6 447.9 L1459.6 448 L1458.6 447.9 L1457.6 447.7 L1456.6 447.7 L1455.6 447.8 L1454.6 447.8 L1453.6 447.7 L1452.6 447.7 L1451.6 448 L1450.6 447.9 L1449.6 447.9 L1448.6 447.8 L1447.6 448 L1446.6 448.2 L1445.6 448.2 L1444.6 448.1 L1443.6 447.7 L1442.6 448 L1441.6 447.7 L1440.6 447.9 L1439.6 447.7 L1438.6 447.7 L1437.6 447.9 L1436.6 447.8 L1435.6 447.7 L1434.6 447.8 L1433.6 448.5 L1432.6 447.8 L1431.6 448.2 L1430.6 448 L1429.6 447.9 L1428.6 447.8 L1427.6 447.7 L1426.6 447.9 L1425.6 448 L1424.6 448 L1423.6 447.9 L1422.6 447.8 L1421.6 448.1 L1420.6 447.9 L1419.6 447.9 L1418.6 448.1 L1417.6 448 L1416.6 447.8 L1415.6 447.8 L1414.6 447.8 L1413.6 447.9 L1412.6 447.9 L1411.6 447.7 L1410.6 447.8 L1409.6 448.5 L1408.6 448.1 L1407.6 448.3 L1406.6 447.8 L1405.6 448.4 L1404.6 448 L1403.6 447.8 L1402.6 447.7 L1401.6 447.9 L1400.6 447.8 L1399.6 448.2 L1398.6 448 L1397.6 448 L1396.6 448 L1395.6 448 L1394.6 447.8 L1393.6 447.8 L1392.6 448 L1391.6 447.9 L1390.6 448.2 L1389.6 447.9 L1388.6 447.9 L1387.6 447.7 L1386.6 448.5 L1385.6 447.9 L1384.6 448.3 L1383.6 448 L1382.6 447.7 L1381.6 447.7 L1380.6 448.3 L1379.6 447.8 L1378.6 448 L1377.6 447.7 L1376.6 447.8 L1375.6 447.8 L1374.6 447.7 L1373.6 447.7 L1372.6 448.2 L1371.6 448 L1370.6 447.8 L1369.6 447.8 L1368.6 448.1 L1367.6 447.8 L1366.6 447.9 L1365.6 447.8 L1364.6 447.8 L1363.6 448 L1362.6 447.9 L1361.6 447.7 L1360.6 447.7 L1359.6 448.1 L1358.6 448.4 L1357.6 448 L1356.6 447.8 L1355.6 448 L1354.6 448.1 L1353.6 448 L1352.6 447.9 L1351.6 447.8 L1350.6 448.2 L1349.6 447.9 L1348.6 447.8 L1347.6 447.9 L1346.6 448.3 L1345.6 447.7 L1344.6 448.1 L1343.6 447.9 L1342.6 447.9 L1341.6 447.7 L1340.6 448.1 L1339.6 447.7 L1338.6 448.1 L1337.6 447.9 L1336.6 447.9 L1335.6 447.8 L1334.6 448 L1333.6 447.8 L1332.6 448.1 L1331.6 447.7 L1330.6 448 L1329.6 447.9 L1328.6 447.9 L1327.6 447.8 L1326.6 447.9 L1325.6 447.8 L1324.6 447.9 L1323.6 447.7 L1322.6 447.8 L1321.6 447.8 L1320.6 448.2 L1319.6 448.3 L1318.6 447.8 L1317.6 448 L1316.6 447.8 L1315.6 447.8 L1314.6 448.1 L1313.6 447.9 L1312.6 447.8 L1311.6 448 L1310.6 447.7 L1309.6 448 L1308.6 447.9 L1307.6 447.8 L1306.6 447.9 L1305.6 448.1 L1304.6 448.1 L1303.6 447.7 L1302.6 448 L1301.6 448 L1300.6 447.9 L1299.6 448.1 L1298.6 447.7 L1297.6 447.8 L1296.6 448.3 L1295.6 448 L1294.6 447.9 L1293.6 447.9 L1292.6 448 L1291.6 447.8 L1290.6 448.4 L1289.6 448.1 L1288.6 447.8 L1287.6 447.8 L1286.6 448.1 L1285.6 447.8 L1284.6 448.2 L1283.6 448.1 L1282.6 447.8 L1281.6 448.1 L1280.6 447.9 L1279.6 448.2 L1278.6 448 L1277.6 447.8 L1276.6 447.8 L1275.6 447.9 L1274.6 447.7 L1273.6 447.9 L1272.6 447.7 L1271.6 447.8 L1270.6 447.9 L1269.6 447.8 L1268.6 448 L1267.6 447.8 L1266.6 448 L1265.6 447.9 L1264.6 447.8 L1263.6 447.9 L1262.6 447.8 L1261.6 448.2 L1260.6 447.9 L1259.6 447.7 L1258.6 447.9 L1257.6 447.8 L1256.6 448.2 L1255.6 447.9 L1254.6 448.1 L1253.6 447.9 L1252.6 448 L1251.6 447.8 L1250.6 447.8 L1249.6 448.1 L1248.6 447.7 L1247.6 447.8 L1246.6 447.9 L1245.6 448 L1244.6 447.9 L1243.6 447.7 L1242.6 448 L1241.6 448.1 L1240.6 448.1 L1239.6 447.8 L1238.6 447.8 L1237.6 447.7 L1236.6 448 L1235.6 448.1 L1234.6 447.7 L1233.6 447.8 L1232.6 448.1 L1231.6 447.9 L1230.6 447.9 L1229.6 447.7 L1228.6 448 L1227.6 447.7 L1226.6 448 L1225.6 447.8 L1224.6 447.9 L1223.6 447.8 L1222.6 448.1 L1221.6 447.9 L1220.6 448.1 L1219.6 448.4 L1218.6 448.1 L1217.6 447.9 L1216.6 447.9 L1215.6 447.8 L1214.6 448.1 L1213.6 448 L1212.6 448.2 L1211.6 447.7 L1210.6 447.8 L1209.6 448 L1208.6 447.9 L1207.6 447.9 L1206.6 447.8 L1205.6 447.8 L1204.6 448.1 L1203.6 448 L1202.6 448 L1201.6 448 L1200.6 447.8 L1199.6 447.9 L1198.6 447.8 L1197.6 447.9 L1196.6 447.8 L1195.6 447.8 L1194.6 447.8 L1193.6 448.1 L1192.6 447.7 L1191.6 448.1 L1190.6 448.3 L1189.6 447.8 L1188.6 447.8 L1187.6 447.9 L1186.6 447.7 L1185.6 448.2 L1184.6 447.9 L1183.6 448.2 L1182.6 447.9 L1181.6 447.7 L1180.6 447.9 L1179.6 447.8 L1178.6 448.2 L1177.6 448.1 L1176.6 447.9 L1175.6 448 L1174.6 447.7 L1173.6 447.7 L1172.6 447.9 L1171.6 448.2 L1170.6 447.9 L1169.6 447.9 L1168.6 448 L1167.6 447.7 L1166.6 448.1 L1165.6 447.9 L1164.6 447.9 L1163.6 448.1 L1162.6 448 L1161.6 447.8 L1160.6 448.3 L1159.6 447.7 L1158.6 448.1 L1157.6 447.9 L1156.6 447.9 L1155.6 448 L1154.6 448 L1153.6 448.1 L1152.6 447.8 L1151.6 448.1 L1150.6 448.3 L1149.6 447.9 L1148.6 447.7 L1147.6 448.1 L1146.6 448 L1145.6 448 L1144.6 447.7 L1143.6 448 L1142.6 448.3 L1141.6 448.2 L1140.6 448.1 L1139.6 447.8 L1138.6 447.8 L1137.6 447.9 L1136.6 447.8 L1135.6 447.8 L1134.6 447.7 L1133.6 447.8 L1132.6 447.9 L1131.6 448 L1130.6 447.7 L1129.6 447.7 L1128.6 447.8 L1127.6 447.8 L1126.6 447.9 L1125.6 447.8 L1124.6 447.9 L1123.6 447.7 L1122.6 448.3 L1121.6 447.7 L1120.6 447.8 L1119.6 447.9 L1118.6 448 L1117.6 448 L1116.6 447.8 L1115.6 447.7 L1114.6 448 L1113.6 447.7 L1112.6 447.7 L1111.6 448 L1110.6 447.8 L1109.6 448.1 L1108.6 448.2 L1107.6 447.8 L1106.6 447.8 L1105.6 447.8 L1104.6 447.9 L1103.6 448.7 L1102.6 448 L1101.6 447.8 L1100.6 447.9 L1099.6 447.7 L1098.6 448 L1097.6 448.6 L1096.6 447.9 L1095.6 447.9 L1094.6 447.9 L1093.6 448 L1092.6 448.1 L1091.6 447.8 L1090.6 448 L1089.6 447.9 L1088.6 447.8 L1087.6 447.7 L1086.6 448.2 L1085.6 447.7 L1084.6 447.8 L1083.6 447.9 L1082.6 448 L1081.6 448 L1080.6 448.1 L1079.6 448.2 L1078.6 447.8 L1077.6 448.3 L1076.6 447.8 L1075.6 448.1 L1074.6 447.7 L1073.6 448 L1072.6 448 L1071.6 448.1 L1070.6 447.8 L1069.6 447.9 L1068.6 448 L1067.6 447.9 L1066.6 448 L1065.6 448.1 L1064.6 447.8 L1063.6 447.9 L1062.6 448.3 L1061.6 448 L1060.6 447.8 L1059.6 447.8 L1058.6 447.8 L1057.6 447.7 L1056.6 447.9 L1055.6 447.9 L1054.6 447.8 L1053.6 447.9 L1052.6 447.7 L1051.6 447.9 L1050.6 447.8 L1049.6 448.1 L1048.6 448 L1047.6 447.9 L1046.6 448.1 L1045.6 448.1 L1044.6 448 L1043.6 447.8 L1042.6 447.7 L1041.6 447.7 L1040.6 448.1 L1039.6 447.9 L1038.6 448 L1037.6 448 L1036.6 447.8 L1035.6 447.8 L1034.6 447.8 L1033.6 448.1 L1032.6 447.7 L1031.6 448.6 L1030.6 448 L1029.6 448.6 L1028.6 447.8 L1027.6 447.8 L1026.6 447.8 L1025.6 447.9 L1024.6 447.8 L1023.6 447.7 L1022.6 448.3 L1021.6 447.7 L1020.6 447.8 L1019.6 447.9 L1018.6 448.4 L1017.6 447.8 L1016.6 447.9 L1015.6 447.8 L1014.6 447.8 L1013.6 448.5 L1012.6 447.9 L1011.6 447.9 L1010.6 447.7 L1009.6 447.7 L1008.6 447.9 L1007.6 447.8 L1006.6 447.8 L1005.6 447.8 L1004.6 447.8 L1003.6 448 L1002.6 448.1 L1001.6 448.1 L1000.6 447.7 L999.6 447.8 L998.6 448.2 L997.6 447.8 L996.6 447.7 L995.6 448 L994.6 448.3 L993.6 447.8 L992.6 448.2 L991.6 448.3 L990.6 448 L989.6 447.8 L988.6 448.1 L987.6 448.1 L986.6 447.9 L985.6 447.9 L984.6 448.1 L983.6 447.7 L982.6 448 L981.6 447.9 L980.6 447.9 L979.6 447.8 L978.6 448 L977.6 448.3 L976.6 448 L975.6 447.8 L974.6 447.7 L973.6 447.8 L972.6 448.3 L971.6 447.8 L970.6 447.8 L969.6 448 L968.6 447.8 L967.6 448.1 L966.6 448 L965.6 448.1 L964.6 447.7 L963.6 448.2 L962.6 448 L961.6 447.9 L960.6 447.7 L959.6 448.1 L958.6 448 L957.6 447.8 L956.6 447.7 L955.6 448 L954.6 448 L953.6 447.7 L952.6 448.1 L951.6 448 L950.6 448 L949.6 448 L948.6 447.8 L947.6 448.1 L946.6 448.2 L945.6 447.8 L944.6 448.2 L943.6 447.7 L942.6 448 L941.6 448.1 L940.6 448.1 L939.6 448.2 L938.6 448 L937.6 447.8 L936.6 448 L935.6 448.2 L934.6 447.8 L933.6 447.8 L932.6 448.1 L931.6 447.9 L930.6 448 L929.6 448 L928.6 448.3 L927.6 448 L926.6 448.7 L925.6 447.9 L924.6 448.6 L923.6 448.1 L922.6 448 L921.6 447.7 L920.6 447.8 L919.6 447.8 L918.6 447.8 L917.6 447.9 L916.6 447.8 L915.6 447.7 L914.6 447.9 L913.6 447.8 L912.6 447.9 L911.6 447.8 L910.6 448.1 L909.6 447.9 L908.6 447.8 L907.6 447.9 L906.6 447.8 L905.6 447.7 L904.6 447.8 L903.6 447.8 L902.6 448.1 L901.6 447.9 L900.6 447.8 L899.6 447.9 L898.6 448 L897.6 447.8 L896.6 447.9 L895.6 448.1 L894.6 447.9 L893.6 447.9 L892.6 448.2 L891.6 447.8 L890.6 447.7 L889.6 448.3 L888.6 448.4 L887.6 447.8 L886.6 447.8 L885.6 447.7 L884.6 448.3 L883.6 448 L882.6 447.8 L881.6 448.1 L880.6 447.7 L879.6 448.1 L878.6 448 L877.6 448.1 L876.6 447.8 L875.6 448.2 L874.6 447.7 L873.6 447.8 L872.6 448 L871.6 448.2 L870.6 448 L869.6 447.8 L868.6 448.3 L867.6 448.4 L866.6 447.9 L865.6 447.8 L864.6 447.9 L863.6 448.1 L862.6 448 L861.6 447.8 L860.6 447.8 L859.6 447.9 L858.6 447.8 L857.6 447.7 L856.6 447.9 L855.6 448.2 L854.6 447.8 L853.6 447.8 L852.6 447.8 L851.6 448.4 L850.6 447.9 L849.6 448 L848.6 447.9 L847.6 448 L846.6 447.8 L845.6 447.9 L844.6 447.9 L843.6 448 L842.6 447.7 L841.6 448.2 L840.6 447.9 L839.6 448 L838.6 447.8 L837.6 447.9 L836.6 448.4 L835.6 447.9 L834.6 447.8 L833.6 447.9 L832.6 447.9 L831.6 447.9 L830.6 447.7 L829.6 447.7 L828.6 448.2 L827.6 447.9 L826.6 447.9 L825.6 447.8 L824.6 448.4 L823.6 448.2 L822.6 448.3 L821.6 448.3 L820.6 447.7 L819.6 447.8 L818.6 448 L817.6 448 L816.6 447.8 L815.6 447.8 L814.6 447.8 L813.6 447.9 L812.6 447.9 L811.6 447.7 L810.6 448.8 L809.6 447.8 L808.6 447.8 L807.6 448 L806.6 447.8 L805.6 447.9 L804.6 447.9 L803.6 447.9 L802.6 447.9 L801.6 447.8 L800.6 447.7 L799.6 448 L798.6 447.8 L797.6 448.1 L796.6 448.1 L795.6 447.9 L794.6 447.8 L793.6 448.1 L792.6 447.9 L791.6 448.1 L790.6 448 L789.6 447.8 L788.6 447.8 L787.6 448 L786.6 448 L785.6 447.8 L784.6 447.9 L783.6 447.9 L782.6 448.1 L781.6 447.7 L780.6 448 L779.6 448.1 L778.6 447.9 L777.6 447.7 L776.6 448 L775.6 447.7 L774.6 447.8 L773.6 447.9 L772.6 447.9 L771.6 448 L770.6 447.7 L769.6 448.2 L768.6 447.9 L767.6 448 L766.6 447.9 L765.6 447.9 L764.6 447.9 L763.6 447.7 L762.6 447.9 L761.6 447.8 L760.6 447.7 L759.6 447.8 L758.6 447.9 L757.6 447.8 L756.6 447.8 L755.6 447.7 L754.6 447.9 L753.6 447.8 L752.6 447.7 L751.6 448.2 L750.6 447.9 L749.6 447.9 L748.6 447.7 L747.6 447.8 L746.6 447.8 L745.6 447.8 L744.6 448 L743.6 447.8 L742.6 447.7 L741.6 447.9 L740.6 447.8 L739.6 448 L738.6 447.8 L737.6 447.8 L736.6 447.7 L735.6 448 L734.6 448 L733.6 447.8 L732.6 448 L731.6 448.5 L730.6 447.8 L729.6 447.8 L728.6 447.8 L727.6 447.9 L726.6 447.9 L725.6 448.1 L724.6 447.7 L723.6 447.8 L722.6 447.8 L721.6 448.6 L720.6 448.1 L719.6 447.9 L718.6 447.7 L717.6 447.8 L716.6 447.8 L715.6 448 L714.6 447.9 L713.6 448.1 L712.6 448.1 L711.6 448.1 L710.6 447.9 L709.6 447.9 L708.6 448.2 L707.6 447.8 L706.6 447.9 L705.6 448.2 L704.6 448 L703.6 447.8 L702.6 448.2 L701.6 448 L700.6 447.8 L699.6 448.2 L698.6 447.7 L697.6 448.1 L696.6 447.9 L695.6 448.1 L694.6 447.8 L693.6 447.8 L692.6 447.7 L691.6 448.1 L690.6 447.9 L689.6 447.9 L688.6 447.7 L687.6 447.8 L686.6 447.8 L685.6 448 L684.6 447.8 L683.6 448 L682.6 447.8 L681.6 448 L680.6 447.7 L679.6 448.1 L678.6 447.8 L677.6 447.9 L676.6 447.7 L675.6 447.8 L674.6 448 L673.6 447.7 L672.6 447.9 L671.6 447.8 L670.6 448 L669.6 448 L668.6 448.2 L667.6 448 L666.6 447.8 L665.6 447.9 L664.6 447.9 L663.6 448 L662.6 448.1 L661.6 447.9 L660.6 447.9 L659.6 447.8 L658.6 447.9 L657.6 448 L656.6 448 L655.6 447.8 L654.6 447.9 L653.6 447.9 L652.6 448.2 L651.6 448 L650.6 447.7 L649.6 447.7 L648.6 447.7 L647.6 448 L646.6 448.2 L645.6 447.7 L644.6 447.9 L643.6 447.9 L642.6 447.9 L641.6 447.9 L640.6 448.1 L639.6 447.9 L638.6 447.8 L637.6 447.9 L636.6 448.4 L635.6 447.7 L634.6 448.4 L633.6 447.9 L632.6 448 L631.6 447.8 L630.6 447.9 L629.6 447.8 L628.6 447.8 L627.6 447.8 L626.6 447.7 L625.6 448 L624.6 447.8 L623.6 447.9 L622.6 447.7 L621.6 448 L620.6 448.2 L619.6 448.1 L618.6 448 L617.6 447.7 L616.6 447.7 L615.6 448.1 L614.6 447.9 L613.6 447.9 L612.6 447.8 L611.6 447.7 L610.6 447.7 L609.6 447.8 L608.6 447.7 L607.6 447.7 L606.6 447.8 L605.6 447.9 L604.6 448 L603.6 448 L602.6 447.8 L601.6 447.9 L600.6 448.7 L599.6 447.8 L598.6 448 L597.6 448.2 L596.6 447.7 L595.6 447.9 L594.6 447.8 L593.6 447.8 L592.6 447.9 L591.6 447.9 L590.6 447.8 L589.6 448.1 L588.6 448.1 L587.6 448.3 L586.6 447.8 L585.6 448.3 L584.6 447.8 L583.6 448.1 L582.6 447.9 L581.6 447.8 L580.6 447.7 L579.6 447.7 L578.6 447.9 L577.6 448.2 L576.6 447.9 L575.6 448 L574.6 448.4 L573.6 447.8 L572.6 448.1 L571.6 448.4 L570.6 447.8 L569.6 447.8 L568.6 447.7 L567.6 447.7 L566.6 447.8 L565.6 448 L564.6 448.1 L563.6 447.8 L562.6 448.1 L561.6 447.9 L560.6 447.8 L559.6 448.6 L558.6 447.9 L557.6 447.8 L556.6 447.8 L555.6 447.9 L554.6 447.8 L553.6 447.9 L552.6 447.8 L551.6 447.7 L550.6 447.9 L549.6 448.3 L548.6 447.8 L547.6 447.7 L546.6 448.1 L545.6 447.8 L544.6 448.3 L543.6 447.8 L542.6 447.9 L541.6 447.9 L540.6 447.8 L539.6 447.9 L538.6 448 L537.6 448 L536.6 447.9 L535.6 448.1 L534.6 448.1 L533.6 448 L532.6 447.8 L531.6 447.8 L530.6 448.3 L529.6 447.8 L528.6 447.9 L527.6 448 L526.6 448.3 L525.6 447.7 L524.6 448.1 L523.6 447.8 L522.6 447.8 L521.6 448.4 L520.6 448 L519.6 447.8 L518.6 447.8 L517.6 448.2 L516.6 447.9 L515.6 448.1 L514.6 448 L513.6 447.9 L512.6 447.8 L511.6 447.9 L510.6 447.8 L509.6 448 L508.6 447.8 L507.6 447.7 L506.6 448.2 L505.6 448 L504.6 447.9 L503.6 448 L502.6 448.3 L501.6 447.8 L500.6 448 L499.6 447.9 L498.6 448.2 L497.6 447.9 L496.6 448 L495.6 448.1 L494.6 447.8 L493.6 447.9 L492.6 448.3 L491.6 447.8 L490.6 447.8 L489.6 448.7 L488.6 447.9 L487.6 448.5 L486.6 448.2 L485.6 447.9 L484.6 447.7 L483.6 447.9 L482.6 448.2 L481.6 448 L480.6 447.8 L479.6 448.1 L478.6 448.3 L477.6 447.9 L476.6 447.8 L475.6 448.3 L474.6 447.8 L473.6 448 L472.6 447.8 L471.6 448 L470.6 447.7 L469.6 447.7 L468.6 447.8 L467.6 447.8 L466.6 447.9 L465.6 447.8 L464.6 447.8 L463.6 448 L462.6 448 L461.6 447.8 L460.6 447.7 L459.6 447.7 L458.6 447.8 L457.6 447.9 L456.6 448.1 L455.6 448 L454.6 447.9 L453.6 447.9 L452.6 448.4 L451.6 447.9 L450.6 447.7 L449.6 447.8 L448.6 448.1 L447.6 447.9 L446.6 448.1 L445.6 447.8 L444.6 447.8 L443.6 447.7 L442.6 447.9 L441.6 447.7 L440.6 447.9 L439.6 447.7 L438.6 447.7 L437.6 447.7 L436.6 448.2 L435.6 448 L434.6 448 L433.6 448.3 L432.6 447.8 L431.6 447.7 L430.6 448.1 L429.6 447.8 L428.6 448 L427.6 447.7 L426.6 448 L425.6 448.3 L424.6 447.8 L423.6 447.7 L422.6 447.8 L421.6 447.9 L420.6 448 L419.6 447.9 L418.6 447.8 L417.6 447.8 L416.6 448.2 L415.6 448.3 L414.6 447.8 L413.6 447.8 L412.6 447.8 L411.6 448.1 L410.6 448.3 L409.6 448 L408.6 448 L407.6 447.8 L406.6 447.9 L405.6 448 L404.6 447.9 L403.6 448 L402.6 448 L401.6 448.3 L400.6 447.8 L399.6 447.9 L398.6 447.7 L397.6 448.1 L396.6 448.1 L395.6 447.8 L394.6 447.8 L393.6 447.7 L392.6 447.9 L391.6 447.9 L390.6 447.8 L389.6 447.9 L388.6 447.9 L387.6 447.8 L386.6 447.7 L385.6 447.8 L384.6 447.8 L383.6 447.9 L382.6 447.8 L381.6 448.3 L380.6 448 L379.6 447.7 L378.6 447.9 L377.6 447.8 L376.6 448.1 L375.6 447.7 L374.6 447.8 L373.6 448.2 L372.6 448 L371.6 447.9 L370.6 448 L369.6 447.9 L368.6 448 L367.6 448 L366.6 447.7 L365.6 448.5 L364.6 448 L363.6 447.9 L362.6 447.7 L361.6 448 L360.6 447.8 L359.6 447.8 L358.6 447.8 L357.6 447.9 L356.6 447.8 L355.6 448.1 L354.6 447.7 L353.6 447.7 L352.6 447.9 L351.6 447.8 L350.6 447.8 L349.6 447.9 L348.6 447.9 L347.6 447.7 L346.6 448 L345.6 448.1 L344.6 447.7 L343.6 448 L342.6 447.9 L341.6 448.1 L340.6 447.9 L339.6 447.8 L338.6 447.8 L337.6 448.3 L336.6 447.7 L335.6 447.9 L334.6 447.8 L333.6 448.1 L332.6 448.1 L331.6 447.9 L330.6 448.1 L329.6 447.9 L328.6 447.8 L327.6 447.7 L326.6 448 L325.6 448.1 L324.6 448.2 L323.6 448.2 L322.6 447.7 L321.6 448 L320.6 447.9 L319.6 448 L318.6 448.2 L317.6 448 L316.6 447.7 L315.6 447.9 L314.6 448.1 L313.6 448.2 L312.6 447.8 L311.6 448.3 L310.6 448 L309.6 448.2 L308.6 448.1 L307.6 448.3 L306.6 448.1 L305.6 447.7 L304.6 448.3 L303.6 448 L302.6 447.8 L301.6 447.8 L300.6 447.7 L299.6 447.7 L298.6 447.9 L297.6 448.3 L296.6 447.8 L295.6 447.8 L294.6 448.4 L293.6 448.2 L292.6 447.8 L291.6 448 L290.6 447.8 L289.6 448.1 L288.6 447.7 L287.6 447.8 L286.6 447.7 L285.6 448.3 L284.6 447.8 L283.6 448.1 L282.6 448.2 L281.6 448.6 L280.6 448.1 L279.6 447.8 L278.6 447.8 L277.6 447.8 L276.6 448 L275.6 447.8 L274.6 447.9 L273.6 448 L272.6 447.9Z" fill="#0b8a40"/>
<path d="M277.0 447 V552.7 M287.7 447 V519.8 M298.0 447 V514.5 M308.7 447 V498.2 M319.7 447 V553.5 M330.7 447 V476.2 M341.3 447 V537.0 M352.0 447 V457.2 M362.7 447 V552.7 M373.7 447 V541.2 M384.3 447 V466.1 M395.0 447 V491.0 M406.0 447 V553.7 M416.7 447 V553.4 M427.3 447 V541.8 M438.0 447 V552.9 M448.7 447 V473.1 M459.3 447 V457.3 M470.0 447 V523.6 M480.3 447 V459.3 M491.0 447 V552.6 M501.3 447 V493.5 M512.0 447 V553.0 M522.3 447 V552.9 M532.7 447 V502.7 M543.3 447 V553.3 M553.7 447 V452.2 M564.0 447 V469.7 M574.7 447 V552.6 M585.0 447 V467.6 M595.3 447 V463.5 M606.0 447 V553.2 M616.3 447 V499.8 M627.0 447 V452.2 M637.7 447 V553.7 M648.7 447 V460.9 M659.3 447 V525.6 M670.0 447 V496.0 M680.7 447 V468.9 M691.7 447 V456.1 M702.3 447 V530.8 M713.0 447 V488.8 M723.7 447 V478.8 M734.3 447 V465.1 M745.0 447 V460.5 M755.7 447 V552.8 M766.3 447 V477.6 M776.3 447 V452.5 M786.7 447 V527.4 M818.7 447 V471.3 M828.7 447 V453.4 M839.0 447 V553.2 M849.3 447 V531.5 M860.0 447 V527.1 M870.7 447 V509.4 M881.0 447 V534.6 M891.7 447 V459.1 M902.0 447 V553.8 M912.3 447 V463.8 M922.7 447 V473.7 M933.0 447 V470.7 M943.7 447 V466.2 M954.3 447 V474.1 M964.7 447 V552.9 M975.7 447 V459.9 M986.7 447 V514.7 M997.3 447 V474.7 M1008.0 447 V552.9 M1018.7 447 V489.0 M1029.3 447 V491.9 M1040.0 447 V472.5 M1050.7 447 V552.6 M1061.3 447 V463.8 M1072.0 447 V471.5 M1082.7 447 V462.5 M1093.0 447 V553.6 M1103.7 447 V464.8 M1114.3 447 V470.7 M1125.0 447 V535.7 M1135.7 447 V552.7 M1146.3 447 V514.0 M1157.0 447 V462.8 M1167.7 447 V463.2 M1179.7 447 V552.7 M1190.3 447 V460.2 M1201.0 447 V466.7 M1211.7 447 V468.2 M1222.3 447 V463.8 M1234.3 447 V473.9 M1245.0 447 V516.1 M1255.7 447 V452.6 M1267.7 447 V465.3 M1279.0 447 V464.2 M1290.0 447 V475.5 M1301.0 447 V473.8 M1312.3 447 V553.3 M1323.7 447 V458.0 M1335.0 447 V455.5 M1346.0 447 V553.0 M1357.3 447 V552.8 M1368.7 447 V480.7 M1380.0 447 V469.1 M1391.0 447 V459.4 M1402.0 447 V487.5 M1413.0 447 V553.7 M1424.0 447 V478.3 M1435.0 447 V541.7 M1468.4 447 V548.8 M1479.1 447 V456.2 M1490.3 447 V523.1 M1501.2 447 V539.3 M1512.4 447 V553.5 M1523.4 447 V553.7 M1534.1 447 V552.9 M1545.3 447 V471.9 M1555.9 447 V455.4 M1567.4 447 V552.8 M1578.6 447 V459.1 M1589.8 447 V513.0 M1601.0 447 V552.7 M1612.4 447 V472.6 M1623.9 447 V553.4 M1635.4 447 V464.0 M1646.8 447 V469.6 M1658.0 447 V503.5 M1669.2 447 V493.2 M1680.7 447 V553.5 M1691.6 447 V516.3 M1702.8 447 V553.2 M1713.8 447 V553.3 M1724.7 447 V515.0 M1735.9 447 V553.1 M1746.8 447 V552.5 M1757.8 447 V514.1 M1768.2 447 V453.1 M1778.9 447 V500.1 M1789.8 447 V467.0 M1800.7 447 V490.1 M1811.7 447 V455.7 M1822.3 447 V473.8 M1833.0 447 V478.6" stroke="#0b8a40" stroke-width="1.9" fill="none"/>
<path d="M287.4 519.8 V552.6 M297.7 514.5 V552.6 M308.4 498.2 V553.1 M330.4 476.2 V553.6 M341.0 537.0 V553.5 M352.3 457.2 V553.8 M374.0 541.2 V553.1 M384.6 466.1 V553.8 M394.7 491.0 V553.0 M427.0 541.8 V552.5 M449.0 473.1 V552.6 M459.6 457.3 V552.6 M470.3 523.6 V553.2 M480.0 459.3 V552.7 M501.0 493.5 V553.1 M533.0 502.7 V552.7 M554.0 452.2 V553.0 M563.7 469.7 V553.4 M585.3 467.6 V553.5 M595.6 463.5 V553.6 M616.0 499.8 V553.5 M626.7 452.2 V552.7 M649.0 460.9 V552.6 M659.0 525.6 V553.2 M669.7 496.0 V552.7 M680.4 468.9 V553.7 M692.0 456.1 V553.0 M702.6 530.8 V553.2 M713.3 488.8 V553.1 M724.0 478.8 V552.7 M734.0 465.1 V552.8 M744.7 460.5 V553.0 M766.6 477.6 V553.6 M776.0 452.5 V553.3 M786.4 527.4 V553.8 M818.4 471.3 V553.1 M828.4 453.4 V553.0 M849.6 531.5 V552.7 M860.3 527.1 V552.9 M871.0 509.4 V552.9 M881.3 534.6 V552.7 M891.4 459.1 V553.2 M912.0 463.8 V553.7 M923.0 473.7 V553.6 M932.7 470.7 V552.8 M944.0 466.2 V552.7 M954.0 474.1 V553.4 M975.4 459.9 V553.3 M986.4 514.7 V553.4 M997.0 474.7 V553.3 M1018.4 489.0 V553.7 M1029.0 491.9 V552.9 M1039.7 472.5 V553.7 M1061.0 463.8 V553.7 M1071.7 471.5 V552.9 M1083.0 462.5 V553.4 M1104.0 464.8 V553.2 M1114.0 470.7 V553.2 M1125.3 535.7 V552.7 M1146.6 514.0 V552.6 M1156.7 462.8 V553.0 M1167.4 463.2 V552.6 M1190.6 460.2 V553.1 M1201.3 466.7 V553.3 M1212.0 468.2 V552.4 M1222.6 463.8 V553.8 M1234.0 473.9 V552.5 M1244.7 516.1 V553.6 M1255.4 452.6 V553.0 M1268.0 465.3 V553.3 M1279.3 464.2 V552.9 M1289.7 475.5 V553.6 M1301.3 473.8 V553.8 M1323.4 458.0 V552.8 M1335.3 455.5 V553.3 M1369.0 480.7 V552.5 M1380.3 469.1 V552.9 M1390.7 459.4 V553.0 M1401.7 487.5 V552.7 M1423.7 478.3 V553.5 M1435.3 541.7 V553.1 M1468.1 548.8 V553.8 M1479.4 456.2 V553.0 M1490.0 523.1 V553.5 M1501.5 539.3 V553.2 M1545.6 471.9 V552.5 M1556.2 455.4 V552.9 M1578.9 459.1 V552.7 M1590.1 513.0 V553.1 M1612.7 472.6 V552.9 M1635.1 464.0 V553.0 M1647.1 469.6 V553.3 M1658.3 503.5 V553.1 M1668.9 493.2 V553.1 M1691.9 516.3 V553.1 M1725.0 515.0 V553.6 M1758.1 514.1 V553.6 M1768.5 453.1 V553.1 M1779.2 500.1 V553.1 M1789.5 467.0 V552.5 M1800.4 490.1 V552.6 M1812.0 455.7 V552.9 M1822.6 473.8 V552.9 M1833.3 478.6 V553.7" stroke="#13843f" stroke-width="1.45" fill="none"/>
<path d="M334.3 413 V446 M652.3 420 V446 M969.4 431 V446 M1295.5 435 V446 M1625.4 421 V446" stroke="#0b8a40" stroke-width="1.2" fill="none"/>
<path d="M334.7 446 V466 M652.6999999999999 446 V462 M969.8 446 V458 M1295.9 446 V470 M1625.8000000000002 446 V462" stroke="#0b8a40" stroke-width="1.5" fill="none"/>
<rect x="529.6" y="271" width="40.9" height="114.6" fill="#125b9e"/>
<g stroke="#125b9e" fill="none"><path d="M531.4 272 V262.0" stroke-width="1.6"/><path d="M534.1 272 V253.2" stroke-width="1.6"/><path d="M537.0 272 V248.6" stroke-width="2.1"/><path d="M540.0 272 V246.6" stroke-width="1.3"/><path d="M542.9 272 V245.8" stroke-width="1.9"/><path d="M546.1 272 V246.1" stroke-width="1.6"/><path d="M549.1 272 V245.8" stroke-width="1.6"/><path d="M552.3 272 V245.8" stroke-width="1.9"/><path d="M555.0 272 V246.2" stroke-width="1.3"/><path d="M558.2 272 V245.3" stroke-width="1.3"/><path d="M561.1 272 V246.2" stroke-width="2.1"/><path d="M563.8 272 V245.1" stroke-width="2.1"/><path d="M567.0 272 V245.7" stroke-width="1.9"/></g>
<rect x="530.2" y="273" width="1" height="111.20000000000002" fill="#fff"/>
<rect x="532.8" y="281" width="1" height="103.20000000000002" fill="#fff"/>
<rect x="554.2" y="276" width="1" height="108.20000000000002" fill="#fff"/>
<rect x="557.3" y="298" width="1" height="86.20000000000002" fill="#fff"/>
<path d="M272.6 373.8 L273.6 374 L274.6 374 L275.6 374.3 L276.6 373.9 L277.6 373.9 L278.6 374.2 L279.6 374 L280.6 374.3 L281.6 373.9 L282.6 374.1 L283.6 374.2 L284.6 374.3 L285.6 374.1 L286.6 373.8 L287.6 374.2 L288.6 374.1 L289.6 374 L290.6 374 L291.6 374 L292.6 374 L293.6 373.9 L294.6 373.9 L295.6 373.9 L296.6 373.8 L297.6 376.2 L298.6 373.9 L299.6 374.2 L300.6 374.1 L301.6 373.9 L302.6 373.8 L303.6 373.8 L304.6 373.9 L305.6 373.8 L306.6 374.1 L307.6 373.9 L308.6 374.2 L309.6 374.1 L310.6 373.9 L311.6 374.1 L312.6 373.9 L313.6 373.9 L314.6 373.7 L315.6 373.9 L316.6 374 L317.6 374.3 L318.6 374.1 L319.6 376.1 L320.6 374.1 L321.6 374.3 L322.6 374.1 L323.6 373.9 L324.6 373.9 L325.6 374 L326.6 373.9 L327.6 373.8 L328.6 374.2 L329.6 374.2 L330.6 373.9 L331.6 374.2 L332.6 374.1 L333.6 376 L334.6 373.8 L335.6 374 L336.6 373.8 L337.6 373.9 L338.6 373.8 L339.6 373.7 L340.6 374.2 L341.6 374.2 L342.6 374 L343.6 374.3 L344.6 373.9 L345.6 374.2 L346.6 374.2 L347.6 374.2 L348.6 374.1 L349.6 374 L350.6 373.8 L351.6 373.7 L352.6 374.2 L353.6 374 L354.6 374.3 L355.6 373.8 L356.6 374.1 L357.6 374 L358.6 373.7 L359.6 373.9 L360.6 374 L361.6 373.9 L362.6 374.2 L363.6 374 L364.6 374 L365.6 373.9 L366.6 374.2 L367.6 373.8 L368.6 374.1 L369.6 373.9 L370.6 374.3 L371.6 374.3 L372.6 373.8 L373.6 374.1 L374.6 373.8 L375.6 374.1 L376.6 373.8 L377.6 374.2 L378.6 376.1 L379.6 373.8 L380.6 374 L381.6 374.1 L382.6 374 L383.6 374.1 L384.6 373.8 L385.6 374.1 L386.6 373.8 L387.6 374.2 L388.6 374.3 L389.6 373.8 L390.6 373.8 L391.6 374.3 L392.6 373.8 L393.6 373.9 L394.6 375.4 L395.6 374.2 L396.6 373.8 L397.6 374 L398.6 374 L399.6 374.2 L400.6 373.8 L401.6 374.1 L402.6 374 L403.6 374.1 L404.6 373.7 L405.6 373.8 L406.6 373.8 L407.6 374 L408.6 374.2 L409.6 374.2 L410.6 374 L411.6 374 L412.6 374 L413.6 375.4 L414.6 374.2 L415.6 373.8 L416.6 374 L417.6 374.3 L418.6 374.3 L419.6 375.7 L420.6 374.3 L421.6 374.1 L422.6 374 L423.6 374 L424.6 373.8 L425.6 374.3 L426.6 375.2 L427.6 374.3 L428.6 374 L429.6 374 L430.6 374.1 L431.6 373.9 L432.6 374.1 L433.6 374.1 L434.6 375.6 L435.6 373.8 L436.6 374.2 L437.6 373.8 L438.6 373.8 L439.6 374.3 L440.6 374 L441.6 373.7 L442.6 374 L443.6 373.8 L444.6 374.3 L445.6 374.1 L446.6 374.2 L447.6 374.2 L448.6 374 L449.6 373.9 L450.6 374 L451.6 373.7 L452.6 374 L453.6 373.8 L454.6 373.9 L455.6 373.9 L456.6 374.1 L457.6 374.2 L458.6 374.9 L459.6 374.2 L460.6 373.7 L461.6 373.8 L462.6 374.2 L463.6 373.9 L464.6 374.1 L465.6 373.7 L466.6 375 L467.6 374.2 L468.6 374.2 L469.6 374.2 L470.6 373.8 L471.6 374.1 L472.6 374.2 L473.6 374.1 L474.6 374.2 L475.6 374.2 L476.6 374.1 L477.6 373.7 L478.6 374.3 L479.6 373.8 L480.6 373.9 L481.6 374.2 L482.6 374.3 L483.6 374 L484.6 374 L485.6 373.7 L486.6 373.8 L487.6 374 L488.6 374.1 L489.6 374.2 L490.6 374.2 L491.6 374 L492.6 374.1 L493.6 374.2 L494.6 373.7 L495.6 374.2 L496.6 373.8 L497.6 374.1 L498.6 374 L499.6 374.2 L500.6 373.8 L501.6 375.9 L502.6 373.9 L503.6 373.8 L504.6 374.2 L505.6 374.2 L506.6 373.8 L507.6 373.9 L508.6 373.9 L509.6 373.8 L510.6 374.3 L511.6 374.3 L512.6 373.8 L513.6 374.3 L514.6 374.2 L515.6 373.8 L516.6 374.1 L517.6 374.2 L518.6 373.9 L519.6 374 L520.6 374.1 L521.6 373.7 L522.6 374 L523.6 374.1 L524.6 374.3 L525.6 374.1 L526.6 374 M575 373.9 L576 374.2 L577 374.2 L578 373.9 L579 374.2 L580 374.1 L581 374 L582 374.1 L583 374.3 L584 374 L585 373.9 L585.6 374 M586 283 L586 374.5 M586.4 373.7 L587.4 374.3 L588.4 373.8 L589.4 375.2 L590.4 373.9 L591.4 374.2 L592.4 374.3 L593.4 373.7 L594.4 374.1 L595.4 373.9 L596.4 373.8 L597.4 374.1 L598.4 374.1 L599.4 374 L600.4 374.1 L601.4 373.9 L602.4 373.9 L603.4 376.2 L604.4 373.7 L605.4 374.1 L606.4 373.9 L607.4 374.3 L608.4 373.9 L609.4 373.8 L610.4 374.1 L611.4 374.2 L612.4 374.1 L613.4 373.9 L614.4 374.2 L615.4 374 L616.4 373.9 L617.4 374.3 L618.4 374.3 L619.4 373.9 L620.4 374.3 L621.4 374.2 L622.4 374.1 L623.4 375.4 L624.4 373.8 L625.4 374.1 L626.4 374.2 L627.4 373.9 L628.4 374 L629.4 374.2 L630.4 374.1 L631.4 373.9 L632.4 374.2 L633.4 374.3 L634.4 373.8 L635.4 374.2 L636.4 374.3 L637.4 373.8 L638.4 373.8 L639.4 374.1 L640.4 374.3 L641.4 374.1 L642.4 374.2 L643.4 374 L644.4 374.3 L645.4 373.8 L646.4 374 L647.4 374 L648.4 374 L649.4 374.2 L650.4 373.8 L651.4 374 L652.4 373.9 L653.4 373.8 L654.4 374.2 L655.4 374.2 L656.4 373.7 L657.4 374 L658.4 373.9 L659.4 374 L660.4 373.9 L661.4 373.9 L662.4 373.8 L663.4 374.1 L664.4 373.7 L665.4 373.8 L666.4 373.9 L667.4 373.8 L668.4 374 L669.4 374.2 L670.4 374.1 L671.4 373.8 L672.4 374.2 L673.4 374.1 L674.4 374 L675.4 374 L676.4 375.3 L677.4 373.9 L678.4 373.9 L679.4 373.8 L680.4 374.2 L681.4 374.3 L682.4 374.2 L683.4 374.2 L684.4 373.8 L685.4 373.9 L686.4 373.9 L687.4 373.8 L688.4 374.2 L689.4 373.7 L690.4 373.7 L691.4 374.3 L692.4 374 L693.4 374.1 L694.4 374.1 L695.4 374.3 L696.4 375.7 L697.4 374.2 L698.4 374.3 L699.4 374 L700.4 374 L701.4 374 L702.4 374.2 L703.4 373.8 L704.4 374.2 L705.4 373.9 L706.4 374.3 L707.4 373.8 L708.4 373.8 L709.4 374.1 L710.4 374.1 L711.4 374.3 L712.4 374 L713.4 374 L714.4 374 L715.4 374 L716.4 373.9 L717.4 374.2 L718.4 374 L719.4 375.5 L720.4 374.3 L721.4 373.8 L722.4 374 L723.4 373.8 L724.4 373.9 L725.4 374.3 L726.4 374 L727.4 374.1 L728.4 373.9 L729.4 373.8 L730.4 373.9 L731.4 373.9 L732.4 373.7 L733.4 374.1 L734.4 374.2 L735.4 376.2 L736.4 374.1 L737.4 373.8 L738.4 373.9 L739.4 374.2 L740.4 374.3 L741.4 373.8 L742.4 374 L743.4 373.7 L744.4 374.1 L745.4 373.8 L746.4 373.7 L747.4 373.7 L748.4 374.3 L749.4 374 L750.4 374.1 L751.4 374.2 L752.4 374.3 L753.4 374.3 L754.4 373.8 L755.4 373.7 L756.4 374.3 L757.4 373.9 L758.4 373.7 L759.4 374.2 L760.4 373.8 L761.4 373.9 L762.4 373.9 L763.4 374.1 L764.4 374.1 L765.4 374.2 L766.4 374 L767.4 374.2 L768.4 374 L769.4 373.7 L770.4 373.7 L771.4 374.2 L772.4 373.8 L773.4 374 L774.4 373.9 L775.4 373.9 L776.4 373.7 L777.4 373.7 L778.4 373.8 L779.4 374.1 L780.4 374.1 L781.4 374 L782.4 375.4 L783.4 373.8 L784.4 373.9 L785.4 373.8 L786.4 373.9 L787.4 373.9 L788.4 373.8 L789.4 376.1 L790.4 373.8 L791.4 374.3 L792.4 375.2 L793.4 374.2 L794.4 373.8 L795.4 373.7 L796.4 374.1 L797.4 374 L798.4 373.9 L799.4 373.7 L800.4 374.3 L801.4 374 L802.4 374.1 L803.4 373.9 L804.4 373.9 L805.4 374 L806.4 374.2 L807.4 374 L808.4 373.7 L809.4 373.8 L810.4 373.8 L811.4 374.1 L812.4 374 L813.4 374 L814.4 373.9 L815.4 373.9 L816.4 374.1 L817.4 374.1 L818.4 374 L819.4 373.9 L820.4 374 L821.4 375.4 L822.4 374.2 L823.4 374 L824.4 374 L825.4 373.9 L826.4 374 L827.4 373.7 L828.4 373.8 L829.4 374.2 L830.4 374.1 L831.4 374 L832.4 376.1 L833.4 374 L834.4 374.1 L835.4 373.8 L836.4 374.2 L837.4 373.7 L838.4 374 L839.4 374 L840.4 373.8 L841.4 374.3 L842.4 374.2 L843.4 373.8 L844.4 374.3 L845.4 373.7 L846.4 373.7 L847.4 374.3 L848.4 373.7 L849.4 374.2 L850.4 373.8 L851.4 374 L852.4 373.8 L853.4 373.9 L854.4 373.9 L855.4 373.7 L856.4 373.8 L857.4 373.9 L858.4 374.1 L859.4 374.1 L860.4 374.2 L861.4 373.8 L862.4 374.3 L863.4 374.1 L864.4 374.2 L865.4 374.1 L866.4 375.9 L867.4 374.2 L868.4 374 L869.4 374.1 L870.4 375.6 L871.4 373.8 L872.4 374.1 L873.4 374.2 L874.4 374 L875.4 373.8 L876.4 374.3 L877.4 374.1 L878.4 374.2 L879.4 373.9 L880.4 374 L881.4 373.9 L882.4 373.9 L883.4 374.1 L884.4 374.3 L885.4 373.9 L886.4 374.2 L887.4 373.9 L888.4 374.2 L889.4 373.9 L890.4 373.7 L891.4 374 L892.4 374.1 L893.4 373.9 L894.4 373.8 L895.4 374.1 L896.4 374.3 L897.4 373.9 L898.4 373.9 L899.4 373.8 L900.4 374.3 L901.4 374.2 L902.4 374.1 L903.4 374.1 L904.4 373.8 L905.4 374.3 L906.4 374.3 L907.4 374.1 L908.4 374.1 L909.4 374.2 L910.4 374.2 L911.4 374.2 L912.4 373.8 L913.4 374.2 L914.4 374 L915.4 374.2 L916.4 374.1 L917.4 373.7 L918.4 374.2 L919.4 373.7 L920.4 373.9 L921.4 374.3 L922.4 374 L923.4 374.2 L924.4 374 L925.4 373.8 L926.4 374.2 L927.4 373.7 L928.4 374.1 L929.4 374 L930.4 374 L931.4 373.9 L932.4 374.2 L933.4 373.9 L934.4 373.9 L935.4 373.8 L936.4 373.9 L937.4 373.9 L938.4 374.2 L939.4 374.1 L940.4 373.9 L941.4 374.1 L942.4 374 L943.4 373.8 L944.4 374 L945.4 373.9 L946.4 374.2 L947.4 374 L948.4 373.9 L949.4 374.2 L950.4 374.2 L951.4 374.2 L952.4 374 L953.4 374.2 L954.4 373.8 L955.4 374.2 L956.4 373.8 L957.4 373.9 L958.4 373.9 L959.4 373.9 L960.4 373.9 L961.4 373.7 L962.4 373.9 L963.4 374.2 L964.4 374.3 L965.4 374.1 L966.4 373.8 L967.4 373.9 L968.4 374 L969.4 374.2 L970.4 374.2 L971.4 373.7 L972.4 374.2 L973.4 374 L974.4 374.3 L975.4 373.7 L976.4 373.8 L977.4 374.1 L978.4 373.7 L979.4 374.1 L980.4 374.2 L981.4 374.3 L982.4 374 L983.4 373.8 L984.4 374.2 L985.4 373.9 L986.4 374 L987.4 373.9 L988.4 374.3 L989.4 373.9 L990.4 373.9 L991.4 373.8 L992.4 373.7 L993.4 373.7 L994.4 374.1 L995.4 373.9 L996.4 373.9 L997.4 374.2 L998.4 374 L999.4 374.3 L1000.4 373.7 L1001.4 374.3 L1002.4 374.1 L1003.4 374.1 L1004.4 374 L1005.4 374.2 L1006.4 374.1 L1007.4 373.8 L1008.4 374.2 L1009.4 374 L1010.4 374 L1011.4 374.2 L1012.4 374.2 L1013.4 373.9 L1014.4 374.1 L1015.4 374 L1016.4 373.9 L1017.4 373.8 L1018.4 374 L1019.4 374 L1020.4 374 L1021.4 374.3 L1022.4 373.8 L1023.4 374 L1024.4 373.8 L1025.4 374.2 L1026.4 373.9 L1027.4 373.8 L1028.4 373.9 L1029.4 374.2 L1030.4 374.2 L1031.4 373.9 L1032.4 374.2 L1033.4 374 L1034.4 374.1 L1035.4 373.9 L1036.4 374 L1037.4 374 L1038.4 373.8 L1039.4 374 L1040.4 373.9 L1041.4 373.9 L1042.4 374.2 L1043.4 374.3 L1044.4 375.3 L1045.4 374.2 L1046.4 374 L1047.4 374.1 L1048.4 374 L1049.4 373.8 L1050.4 374 L1051.4 373.9 L1052.4 374.3 L1053.4 374.3 L1054.4 373.9 L1055.4 374.2 L1056.4 374 L1057.4 374.2 L1058.4 373.8 L1059.4 373.7 L1060.4 373.8 L1061.4 374.2 L1062.4 374 L1063.4 374.3 L1064.4 374.1 L1065.4 373.9 L1066.4 373.9 L1067.4 373.8 L1068.4 374 L1069.4 374.1 L1070.4 373.9 L1071.4 374.2 L1072.4 373.9 L1073.4 374.2 L1074.4 374.1 L1075.4 374.2 L1076.4 373.7 L1077.4 373.8 L1078.4 374.1 L1079.4 374.1 L1080.4 374.2 L1081.4 374.2 L1082.4 374.1 L1083.4 374.2 L1084.4 374 L1085.4 373.8 L1086.4 373.8 L1087.4 374.2 L1088.4 374 L1089.4 374.1 L1090.4 375.2 L1091.4 374.1 L1092.4 374.1 L1093.4 374 L1094.4 374.2 L1095.4 374.2 L1096.4 374.2 L1097.4 374.7 L1098.4 374 L1099.4 373.8 L1100.4 373.8 L1101.4 374 L1102.4 374 L1103.4 374 L1104.4 374.3 L1105.4 374.1 L1106.4 373.8 L1107.4 373.8 L1108.4 373.8 L1109.4 374.2 L1110.4 374.1 L1111.4 374.3 L1112.4 373.8 L1113.4 374.3 L1114.4 374 L1115.4 373.8 L1116.4 373.8 L1117.4 374.2 L1118.4 373.9 L1119.4 373.9 L1120.4 373.8 L1121.4 373.8 L1122.4 374.2 L1123.4 376 L1124.4 374 L1125.4 374.1 L1126.4 374 L1127.4 374 L1128.4 374.2 L1129.4 375.1 L1130.4 373.7 L1131.4 373.8 L1132.4 373.9 L1133.4 374.2 L1134.4 374 L1135.4 373.7 L1136.4 373.8 L1137.4 373.8 L1138.4 373.8 L1139.4 374.3 L1140.4 374.1 L1141.4 374.3 L1142.4 374 L1143.4 374.1 L1144.4 374 L1145.4 373.7 L1146.4 374.3 L1147.4 374.2 L1148.4 373.9 L1149.4 374.2 L1150.4 373.8 L1151.4 373.9 L1152.4 374 L1153.4 373.9 L1154.4 373.8 L1155.4 374.1 L1156.4 374.2 L1157.4 374 L1158.4 374.1 L1159.4 374.2 L1160.4 373.8 L1161 374 M1167 378.4 L1168 377.9 L1169 377.8 L1170 377.6 L1171 377.6 L1172 377.8 L1173 378.2 L1174 377.8 L1175 378.2 L1176 377.7 L1177 377.9 L1178 378.1 L1179 378.2 L1180 378 L1181 377.6 L1182 378 L1183 378.3 L1184 377.9 L1185 378.1 L1186 377.6 L1187 378.2 L1188 378.2 L1189 378.2 L1190 378.3 L1191 378.3 L1192 378.1 L1193 377.9 L1194 378.3 L1195 377.9 L1196 378 L1197 377.6 L1198 377.6 L1199 378.1 L1200 378.2 L1201 379.5 L1202 378.1 L1203 377.9 L1204 378 L1205 377.8 L1205.4 378 M1222.4 284 L1222.4 372 M1222 367 L1222.7 367.8 L1223.4 368.7 L1224.1 369.2 L1224.8 369.9 L1225.5 370.5 L1226.2 370.9 L1226.9 370.9 L1227.6 371.4 L1228.3 371.7 L1229 371.7 L1229.7 372 L1230.4 372.1 L1231.1 372.6 L1231.8 372.5 L1232.5 372.6 L1233.2 373.1 L1233.9 372.9 L1234.6 373.2 L1235.3 373.3 L1236 373.3 L1236.7 373.1 L1237.4 373.2 L1238.1 373.6 L1238.8 373.4 L1239.5 373.4 L1240.2 373.6 L1240.9 373.4 L1241.6 373.7 L1242.3 373.8 L1243 373.9 L1243.7 373.6 L1244.4 373.8 L1245.1 374 L1245.8 374 L1246.5 373.8 L1247.2 374 L1247.9 373.9 L1248.6 373.9 L1249.3 373.9 L1250 373.7 L1250.7 373.8 L1251.4 373.9 M1251 374.2 L1252 373.9 L1253 373.7 L1254 373.9 L1255 374 L1256 374.2 L1257 374.2 L1258 374.1 L1259 374.1 L1260 373.8 L1261 373.9 L1262 374 L1263 374.1 L1264 375.4 L1265 374 L1266 373.8 L1267 373.9 L1268 374 L1269 374 L1270 373.7 L1271 373.9 L1272 373.9 L1273 373.9 L1274 373.8 L1275 373.7 L1276 374.1 L1277 373.9 L1278 374.1 L1279 374.2 L1280 373.8 L1281 373.8 L1282 374.2 L1283 374.2 L1284 373.9 L1285 373.9 L1286 373.9 L1287 374.1 L1288 373.8 L1289 374.1 L1290 373.9 L1291 374 L1292 373.9 L1293 374.2 L1294 373.8 L1295 374.1 L1296 374.3 L1297 374.1 L1298 373.9 L1299 373.9 L1300 374 L1301 373.8 L1302 373.9 L1303 373.8 L1304 373.8 L1305 374 L1306 374.2 L1307 374.2 L1308 373.7 L1309 373.8 L1310 374.1 L1311 373.8 L1312 374.1 L1313 374.3 L1314 373.9 L1315 374 L1316 374.2 L1317 374.2 L1318 373.9 L1319 373.9 L1320 374.3 L1321 374.3 L1322 374.2 L1323 373.9 L1324 374.3 L1325 373.9 L1326 373.8 L1327 374 L1328 373.7 L1329 374.1 L1330 373.8 L1331 373.7 L1332 373.7 L1333 374 L1334 374.1 L1335 374 L1336 373.8 L1337 374.3 L1338 375.6 L1339 374.2 L1340 373.9 L1341 374 L1342 374.1 L1343 374.2 L1344 375.6 L1345 374.2 L1346 374.1 L1347 374.3 L1348 373.9 L1349 374.2 L1350 373.8 L1351 373.8 L1352 374.1 L1353 374.2 L1354 374 L1355 374.8 L1356 374.3 L1357 373.9 L1358 373.9 L1359 374.2 L1360 374.1 L1361 373.8 L1362 374.2 L1363 374.1 L1364 374 L1365 373.8 L1366 374 L1367 373.8 L1368 374.2 L1369 373.8 L1370 374.2 L1371 373.7 L1372 374.1 L1373 374.1 L1374 373.9 L1375 373.9 L1376 373.8 L1377 374.1 L1378 373.9 L1379 374.1 L1380 374.2 L1381 374.2 L1382 374.2 L1383 374.3 L1384 374 L1385 374.2 L1386 374 L1387 374.2 L1388 373.8 L1389 373.9 L1390 374.1 L1391 373.9 L1392 374 L1393 373.9 L1394 373.7 L1395 373.9 L1396 374.1 L1397 373.8 L1398 373.8 L1399 374.2 L1400 373.8 L1401 374.1 L1402 374 L1403 373.7 L1404 374 L1405 373.8 L1406 374 L1407 373.8 L1408 373.8 L1409 374 L1410 373.9 L1411 373.7 L1412 374.2 L1413 373.9 L1414 373.9 L1415 374.2 L1416 374.2 L1417 374.3 L1418 373.8 L1419 373.9 L1420 374.2 L1421 373.8 L1422 373.8 L1423 373.8 L1424 374.1 L1425 374.2 L1426 373.9 L1427 373.9 L1428 374.3 L1429 373.9 L1430 373.8 L1431 374.3 L1432 374.3 L1433 373.7 L1434 374.3 L1435 374.2 L1436 373.9 L1437 373.8 L1438 374.3 L1439 374.1 L1440 373.9 L1441 374.2 L1442 374.3 L1443 375.1 L1444 374.1 L1445 374.3 L1446 373.8 L1447 373.8 L1448 373.7 L1449 373.9 L1450 373.7 L1451 373.9 L1452 374 L1453 373.7 L1454 373.9 L1455 374.2 L1456 374.1 L1457 374 L1458 374 L1459 374.3 L1460 374.3 L1461 373.8 L1462 373.7 L1463 374.3 L1464 374.3 L1465 374.1 L1466 374.3 L1467 373.8 L1468 373.8 L1469 374 L1470 373.8 L1471 374.1 L1472 374.1 L1473 373.7 L1474 374 L1475 374.2 L1476 373.9 L1477 374.2 L1478 374 L1479 374.3 L1480 373.8 L1481 373.8 L1482 374.1 L1483 376 L1484 374.2 L1485 374 L1486 374.3 L1487 374.3 L1488 374.1 L1489 373.8 L1490 374 L1491 374.1 L1492 374.3 L1493 373.9 L1494 374.5 L1495 374.2 L1496 374.2 L1497 374.1 L1498 374 L1499 374.1 L1500 374.3 L1501 374.3 L1502 374.1 L1503 374.3 L1504 373.9 L1505 374.1 L1506 374.1 L1507 374.2 L1508 374.1 L1509 373.8 L1510 374.2 L1511 374.3 L1512 374.2 L1513 373.9 L1514 374.1 L1515 373.8 L1516 373.7 L1517 374.2 L1518 374.3 L1519 374 L1520 374.2 L1521 373.8 L1522 374 L1523 373.9 L1524 373.9 L1525 374.3 L1526 373.8 L1527 375.1 L1528 374 L1529 374.2 L1530 373.7 L1531 373.8 L1532 374.2 L1533 374 L1534 373.9 L1535 374.2 L1536 373.8 L1537 373.7 L1538 374 L1539 373.8 L1540 374 L1541 373.8 L1542 374 L1543 376.2 L1544 373.9 L1545 374.3 L1546 373.9 L1547 374 L1548 373.8 L1549 374.2 L1550 374.1 L1551 373.8 L1552 373.8 L1553 373.7 L1554 373.9 L1555 374.1 L1556 374.2 L1557 374 L1558 374.1 L1559 373.9 L1560 373.8 L1561 373.9 L1562 373.9 L1563 374.1 L1564 373.7 L1565 374.3 L1566 373.8 L1567 374 L1568 373.7 L1569 374 L1570 375.4 L1571 373.7 L1572 373.9 L1573 374 L1574 373.8 L1575 373.8 L1576 373.9 L1577 373.9 L1578 373.9 L1579 373.9 L1580 374.3 L1581 374.2 L1582 374.1 L1583 374.3 L1584 373.7 L1585 374.1 L1586 374.3 L1587 374.1 L1588 374.3 L1589 374.1 L1590 374 L1591 374.2 L1592 373.7 L1593 374 L1594 374.3 L1595 374 L1596 374 L1597 373.7 L1598 374.2 L1599 374 L1600 373.9 L1601 374.2 L1602 374 L1603 374.1 L1604 374 L1605 374.1 L1606 373.9 L1607 374.1 L1608 373.8 L1609 374.1 L1610 373.7 L1611 373.8 L1612 373.8 L1613 373.9 L1614 374 L1615 374 L1616 374.2 L1617 374.1 L1618 374.1 L1619 374.2 L1620 374 L1621 374 L1622 373.9 L1623 374.2 L1624 374.3 L1625 374.2 L1626 373.8 L1627 374.1 L1628 373.8 L1629 374.1 L1630 374 L1631 374.2 L1632 374.1 L1633 374.2 L1634 373.7 L1635 374.1 L1636 374.3 L1637 374 L1638 373.8 L1639 374.1 L1640 374 L1641 374.2 L1642 373.8 L1643 374.2 L1644 374.2 L1645 373.9 L1646 373.7 L1647 373.8 L1648 374.2 L1649 374.3 L1650 373.9 L1651 374.1 L1652 374.3 L1653 374.1 L1654 373.8 L1655 373.8 L1656 373.8 L1657 374.2 L1658 373.9 L1659 374.2 L1660 374.3 L1661 374.1 L1662 373.9 L1663 376 L1664 373.9 L1665 373.7 L1666 374 L1667 373.9 L1668 374 L1669 373.9 L1670 374.7 L1671 373.8 L1672 374.1 L1673 373.7 L1674 374.3 L1675 374.2 L1676 374.1 L1677 374.1 L1678 374.1 L1679 373.8 L1680 374 L1681 373.9 L1682 374 L1683 373.9 L1684 374.1 L1685 374.1 L1686 373.9 L1687 374.1 L1688 374.1 L1689 374.1 L1690 374 L1691 373.9 L1692 374.3 L1693 373.9 L1694 373.7 L1695 373.9 L1696 373.8 L1697 374.1 L1698 374.2 L1699 374 L1700 373.9 L1701 375.4 L1702 374.1 L1703 374.2 L1704 374.2 L1705 374.2 L1706 373.9 L1707 374.2 L1708 374 L1709 374.2 L1710 373.8 L1711 374.1 L1712 373.8 L1713 374.3 L1714 373.8 L1715 374.2 L1716 373.7 L1717 374 L1718 374 L1719 374.1 L1720 373.8 L1721 373.8 L1722 373.9 L1723 373.8 L1724 373.9 L1725 373.8 L1726 374 L1727 374.1 L1728 374.3 L1729 373.9 L1730 374.2 L1731 374.1 L1732 374.3 L1733 374 L1734 373.8 L1735 374.2 L1736 374.3 L1737 373.9 L1738 373.9 L1739 373.7 L1740 374.2 L1741 374.1 L1742 373.9 L1743 374.3 L1744 374.1 L1745 374.2 L1746 373.8 L1747 374 L1748 374 L1749 373.9 L1750 373.7 L1751 373.8 L1752 374.2 L1753 374 L1754 373.8 L1755 374.2 L1756 374.3 L1757 374.1 L1758 373.8 L1759 373.9 L1760 373.8 L1761 373.9 L1762 374.2 L1763 374 L1764 374.2 L1765 374.2 L1766 376.2 L1767 374 L1768 373.8 L1769 374.2 L1770 373.9 L1771 374.1 L1772 374 L1773 373.7 L1774 374.1 L1775 374.2 L1776 374 L1777 374 L1778 373.9 L1779 373.9 L1780 373.9 L1781 374.3 L1782 374.2 L1783 374.1 L1784 373.9 L1785 374.2 L1786 374 L1787 374.3 L1788 373.7 L1789 373.7 L1790 374.2 L1791 373.8 L1792 373.7 L1793 373.8 L1794 373.8 L1795 374.2 L1796 374.1 L1797 374 L1798 373.8 L1799 373.8 L1800 374 L1801 374 L1802 373.9 L1803 373.9 L1804 374.1 L1805 373.9 L1806 374.2 L1807 374 L1808 373.8 L1809 373.9 L1810 374 L1811 374.1 L1812 373.8 L1813 373.9 L1814 373.9 L1815 373.9 L1816 374.2 L1817 374.3 L1818 374 L1819 374.3 L1820 374.2 L1821 374.2 L1822 373.9 L1823 374 L1824 373.9 L1825 373.9 L1825.8 374" fill="none" stroke="#125b9e" stroke-width="2" stroke-linejoin="round"/>
<path d="M570.5 300 L570.6 356 L571.5 364 L573 371.5 L575 374 M1161 374 L1162 380.5 L1163.5 377 L1165 371.8 L1166.5 377.5 L1167.2 378 M1207.3 236 L1207.6 245.3 L1208.1 260.1 L1208.6 272.5 L1209.1 284.1 L1209.6 294.4 L1210.1 303.3 L1210.6 311.3 L1211.1 318 L1211.6 324.6 L1212.1 329.7 L1212.6 334.8 L1213.1 339.2 L1213.6 343.3 L1214.1 347 L1214.6 349.6 L1215.1 352.5 L1215.6 354.7 L1216.1 357.2 L1216.6 358.6 L1217.1 360.9 L1217.6 362 L1218.1 363.3 L1218.6 364.8 L1219.1 365.8 L1219.6 366.8 L1220.1 367.7 L1220.6 368.2 L1221.1 368.8 L1221.6 369.6" fill="none" stroke="#125b9e" stroke-width="1.5" stroke-linejoin="round"/>
<path d="M526.5 374 L526.5 382.5 M526.5 382 L526.5 112 M529.6 112 L529.6 385 M1205.3 379 L1205.3 112 M1207.3 112 L1207.3 240 M1825.6 374 L1825.6 381.5 M1825.6 381 L1825.6 112 M1829.7 112 L1829.7 385" fill="none" stroke="#125b9e" stroke-width="1.25"/>
<path d="M334.3 358 V388 M652.3 366 V383 M969.4 368 V379.5 M1295.5 370 V383 M1625.4 357 V380.5" stroke="#125b9e" stroke-width="1.3" fill="none"/>
<rect x="1830" y="271.5" width="11.6" height="113.6" fill="#125b9e"/>
<path d="M1830.6 272 V262 M1833.2 272 V255 M1835.2 272 V249.5 M1837.6 272 V252 M1839 272 V249 M1840.8 272 V249.5" stroke="#125b9e" stroke-width="1.4" fill="none"/>
<rect x="1831.7" y="276" width="1.1" height="107" fill="#fff"/><rect x="1836.2" y="280" width="1.1" height="105" fill="#fff"/>
</g>
<path d="M200 109.8 H236.3 V126.2 H200 a3.4 3.4 0 0 1 -3.4 -3.4 V113.2 a3.4 3.4 0 0 1 3.4 -3.4Z" fill="#fff" stroke="#125b9e" stroke-width="1.1"/>
<path d="M236.2 109.6 L243.8 118 L236.2 126.4Z" fill="#125b9e"/>
<path d="M236.5 109.8 H274.2 V126.2 H236.5 L243.8 118Z" fill="#fff" stroke="#0b8a40" stroke-width="1.1" stroke-linejoin="round"/>
<path d="M274 109.6 L283 118 L274 126.4Z" fill="#0b8a40"/>
<path d="M1841.5 109.8 H1880 V126.2 H1841.5 L1833.5 118Z" fill="#fff" stroke="#c6a22c" stroke-width="1.1" stroke-linejoin="round"/>
<path d="M1841.8 109.6 L1833.2 118 L1841.8 126.4Z" fill="#c6a22c"/>
<path d="M1880.5 109.8 H1915.5 a3.2 3.2 0 0 1 3.2 3.2 V123 a3.2 3.2 0 0 1 -3.2 3.2 H1880.5Z" fill="#fff" stroke="#c40e32" stroke-width="1.35"/>
<path d="M1880.6 109.4 L1871.8 118 L1880.6 126.6Z" fill="#e3002b"/>
<rect x="204" y="147" width="25" height="25" fill="#fe0606"/>
<rect x="215.2" y="153.6" width="2.6" height="8" fill="#fde9c8"/><rect x="215.2" y="163.2" width="2.6" height="2.4" fill="#fde9c8"/>
<rect x="283" y="127" width="37" height="37" fill="#fe0606"/>
<rect x="299.8" y="137" width="3.2" height="11.6" fill="#fdf3e0"/><rect x="299.8" y="150.4" width="3.2" height="3" fill="#fdf3e0"/>
<text x="324.6" y="151.6" font-family="Liberation Sans, sans-serif" font-size="13.5" fill="#111" textLength="114" lengthAdjust="spacingAndGlyphs">Kanaaloverbereik</text>
<path d="M461.5 778.2 L467.7 784.4 L461.5 790.6 L455.3 784.4Z" fill="#f2f21c" stroke="#2c2c2c" stroke-width="0.9"/>
<path d="M250.3 1013 V995.3 H291 a3.4 3.4 0 0 1 3.4 3.4 V1004" fill="none" stroke="#125b9e" stroke-width="1.1"/>
<path d="M266.5 995.6 L274.4 987.2 L282.3 995.6Z" fill="#125b9e"/>
<path d="M1853 828.6 H1872.5" stroke="#ab9932" stroke-width="1"/><path d="M1891 898.8 H1911.5" stroke="#cb123b" stroke-width="1"/>
<g fill="none" stroke="#125b9e"><path d="M1807.6 149.6 L1816.6 157.8" stroke-width="4.4"/><circle cx="1802.6" cy="144.5" r="7.3" stroke-width="2.9" fill="#eaf5fd"/><path d="M1799.2 144.5 H1806 M1802.6 141.1 V147.9" stroke-width="2.7"/></g>
<g font-family="Liberation Sans, sans-serif">
<text x="233.6" y="122" fill="#155289" font-size="15.4" text-anchor="end" textLength="25.7" lengthAdjust="spacingAndGlyphs">30,0</text>
<text x="233.6" y="209.8" fill="#155289" font-size="15.4" text-anchor="end" textLength="25.7" lengthAdjust="spacingAndGlyphs">20,0</text>
<text x="233.6" y="297.6" fill="#155289" font-size="15.4" text-anchor="end" textLength="25.7" lengthAdjust="spacingAndGlyphs">10,0</text>
<text x="233.6" y="385.4" fill="#155289" font-size="15.4" text-anchor="end" textLength="18.3" lengthAdjust="spacingAndGlyphs">0,0</text>
<text x="233.6" y="473.2" fill="#155289" font-size="15.4" text-anchor="end" textLength="30.1" lengthAdjust="spacingAndGlyphs">-10,0</text>
<text x="233.6" y="561" fill="#155289" font-size="15.4" text-anchor="end" textLength="30.1" lengthAdjust="spacingAndGlyphs">-20,0</text>
<text x="233.6" y="648.8" fill="#155289" font-size="15.4" text-anchor="end" textLength="30.1" lengthAdjust="spacingAndGlyphs">-30,0</text>
<text x="233.6" y="736.6" fill="#155289" font-size="15.4" text-anchor="end" textLength="30.1" lengthAdjust="spacingAndGlyphs">-40,0</text>
<text x="233.6" y="824.4" fill="#155289" font-size="15.4" text-anchor="end" textLength="30.1" lengthAdjust="spacingAndGlyphs">-50,0</text>
<text x="272.7" y="122" fill="#178c48" font-size="15.4" text-anchor="end" textLength="25.7" lengthAdjust="spacingAndGlyphs">20,0</text>
<text x="272.7" y="209.8" fill="#178c48" font-size="15.4" text-anchor="end" textLength="25.7" lengthAdjust="spacingAndGlyphs">16,0</text>
<text x="272.7" y="297.6" fill="#178c48" font-size="15.4" text-anchor="end" textLength="25.7" lengthAdjust="spacingAndGlyphs">12,0</text>
<text x="272.7" y="385.4" fill="#178c48" font-size="15.4" text-anchor="end" textLength="18.3" lengthAdjust="spacingAndGlyphs">8,0</text>
<text x="272.7" y="473.2" fill="#178c48" font-size="15.4" text-anchor="end" textLength="18.3" lengthAdjust="spacingAndGlyphs">4,0</text>
<text x="272.7" y="561" fill="#178c48" font-size="15.4" text-anchor="end" textLength="18.3" lengthAdjust="spacingAndGlyphs">0,0</text>
<text x="272.7" y="648.8" fill="#178c48" font-size="15.4" text-anchor="end" textLength="22.7" lengthAdjust="spacingAndGlyphs">-4,0</text>
<text x="272.7" y="736.6" fill="#178c48" font-size="15.4" text-anchor="end" textLength="22.7" lengthAdjust="spacingAndGlyphs">-8,0</text>
<text x="272.7" y="824.4" fill="#178c48" font-size="15.4" text-anchor="end" textLength="30.1" lengthAdjust="spacingAndGlyphs">-12,0</text>
<text x="272.7" y="912.2" fill="#178c48" font-size="15.4" text-anchor="end" textLength="30.1" lengthAdjust="spacingAndGlyphs">-16,0</text>
<text x="272.7" y="1000" fill="#178c48" font-size="15.4" text-anchor="end" textLength="30.1" lengthAdjust="spacingAndGlyphs">-20,0</text>
<text x="224.4" y="141.4" fill="#155289" font-size="15.4" textLength="9.6" lengthAdjust="spacingAndGlyphs">V</text>
<text x="263.6" y="141.4" fill="#178c48" font-size="15.4" textLength="9.6" lengthAdjust="spacingAndGlyphs">V</text>
<text x="1843.8" y="375.6" fill="#ab9932" font-size="15.4" textLength="9.6" lengthAdjust="spacingAndGlyphs">V</text>
<text x="1843.8" y="394" fill="#ab9932" font-size="15.4" textLength="25.7" lengthAdjust="spacingAndGlyphs">50,0</text>
<text x="1843.8" y="473.2" fill="#ab9932" font-size="15.4" textLength="25.7" lengthAdjust="spacingAndGlyphs">41,0</text>
<text x="1843.8" y="561" fill="#ab9932" font-size="15.4" textLength="25.7" lengthAdjust="spacingAndGlyphs">31,0</text>
<text x="1843.8" y="648.8" fill="#ab9932" font-size="15.4" textLength="25.7" lengthAdjust="spacingAndGlyphs">21,0</text>
<text x="1843.8" y="736.6" fill="#ab9932" font-size="15.4" textLength="24.7" lengthAdjust="spacingAndGlyphs">11,0</text>
<text x="1843.8" y="824.4" fill="#ab9932" font-size="15.4" textLength="18.3" lengthAdjust="spacingAndGlyphs">1,0</text>
<text x="1843.8" y="912.2" fill="#ab9932" font-size="15.4" textLength="22.7" lengthAdjust="spacingAndGlyphs">-9,0</text>
<text x="1843.8" y="1000" fill="#ab9932" font-size="15.4" textLength="30.1" lengthAdjust="spacingAndGlyphs">-19,0</text>
<text x="1882.6" y="445.8" fill="#cb123b" font-size="15.4" textLength="9.6" lengthAdjust="spacingAndGlyphs">V</text>
<text x="1882.6" y="464" fill="#cb123b" font-size="15.4" textLength="18.3" lengthAdjust="spacingAndGlyphs">5,0</text>
<text x="1882.6" y="561" fill="#cb123b" font-size="15.4" textLength="18.3" lengthAdjust="spacingAndGlyphs">3,9</text>
<text x="1882.6" y="648.8" fill="#cb123b" font-size="15.4" textLength="18.3" lengthAdjust="spacingAndGlyphs">2,9</text>
<text x="1882.6" y="736.6" fill="#cb123b" font-size="15.4" textLength="18.3" lengthAdjust="spacingAndGlyphs">1,9</text>
<text x="1882.6" y="824.4" fill="#cb123b" font-size="15.4" textLength="18.3" lengthAdjust="spacingAndGlyphs">0,9</text>
<text x="1882.6" y="912.2" fill="#cb123b" font-size="15.4" textLength="22.7" lengthAdjust="spacingAndGlyphs">-0,1</text>
<text x="1882.6" y="1000" fill="#cb123b" font-size="15.4" textLength="22.7" lengthAdjust="spacingAndGlyphs">-1,1</text>
<text x="288.2" y="1012" fill="#111" font-size="15.4" textLength="53.9" lengthAdjust="spacingAndGlyphs">-20.0 ms</text>
<text x="461.2" y="1012" fill="#111" font-size="15.4" text-anchor="middle" textLength="19.3" lengthAdjust="spacingAndGlyphs">0.0</text>
<text x="618.2" y="1012" fill="#111" font-size="15.4" text-anchor="middle" textLength="27.0" lengthAdjust="spacingAndGlyphs">20.0</text>
<text x="775.2" y="1012" fill="#111" font-size="15.4" text-anchor="middle" textLength="27.0" lengthAdjust="spacingAndGlyphs">40.0</text>
<text x="932.2" y="1012" fill="#111" font-size="15.4" text-anchor="middle" textLength="27.0" lengthAdjust="spacingAndGlyphs">60.0</text>
<text x="1088.2" y="1012" fill="#111" font-size="15.4" text-anchor="middle" textLength="27.0" lengthAdjust="spacingAndGlyphs">80.0</text>
<text x="1245.2" y="1012" fill="#111" font-size="15.4" text-anchor="middle" textLength="34.7" lengthAdjust="spacingAndGlyphs">100.0</text>
<text x="1402.2" y="1012" fill="#111" font-size="15.4" text-anchor="middle" textLength="34.7" lengthAdjust="spacingAndGlyphs">120.0</text>
<text x="1559.2" y="1012" fill="#111" font-size="15.4" text-anchor="middle" textLength="34.7" lengthAdjust="spacingAndGlyphs">140.0</text>
<text x="1716.2" y="1012" fill="#111" font-size="15.4" text-anchor="middle" textLength="34.7" lengthAdjust="spacingAndGlyphs">160.0</text>
</g>
</svg>
<div class="dot" style="left:0;top:29px;width:1920px;height:1px;background:repeating-linear-gradient(90deg,#1c1c1c 0 1.3px,transparent 1.3px 3.75px)"></div><div class="dot" style="left:0;top:104px;width:1920px;height:1px;background:repeating-linear-gradient(90deg,#1c1c1c 0 1.3px,transparent 1.3px 3.75px)"></div><div class="dot" style="left:0;top:29px;width:1px;height:76px;background:repeating-linear-gradient(180deg,#1c1c1c 0 1.3px,transparent 1.3px 3.75px)"></div><div class="dot" style="left:1918px;top:29px;width:1px;height:76px;background:repeating-linear-gradient(180deg,#1c1c1c 0 1.3px,transparent 1.3px 3.75px)"></div>
</body></html>
